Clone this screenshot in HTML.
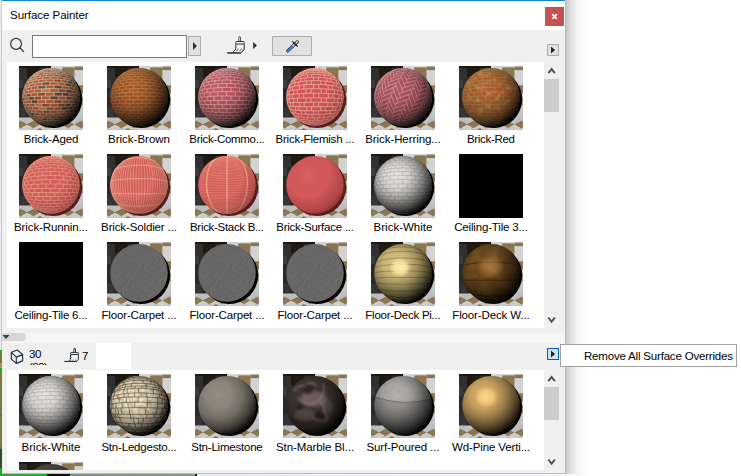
<!DOCTYPE html>
<html><head><meta charset="utf-8"><title>Surface Painter</title>
<style>
html,body{margin:0;padding:0;}
body{width:741px;height:476px;overflow:hidden;background:#fff;position:relative;font-family:"Liberation Sans",sans-serif;font-size:11.5px;color:#000;}
.abs{position:absolute;}
#win{left:0;top:0;width:565px;height:474px;background:#f0f0f0;}
#title{left:2px;top:1px;width:563px;height:29px;background:#fff;}
#topline{left:2px;top:0;width:563px;height:1px;background:#1a86d9;}
#ledge{left:0;top:0;width:2px;height:474px;background:linear-gradient(90deg,#ececec 0,#ececec 1px,#c9c9c9 1px,#c9c9c9 2px);}
.t{position:absolute;white-space:nowrap;line-height:14px;height:14px;}
.lbl{position:absolute;white-space:nowrap;line-height:14px;height:14px;text-align:center;width:120px;}
.list{background:#fff;overflow:hidden;}
.btn{background:#e1e1e1;border:1px solid #adadad;box-sizing:border-box;}
.thumb{position:absolute;width:64px;height:64px;overflow:hidden;}
</style></head>
<body>
<div id="win" class="abs"></div>
<div id="title" class="abs"></div>
<div id="topline" class="abs"></div>
<div class="abs" style="left:565px;top:0;width:30px;height:474px;background:linear-gradient(90deg,#b4b4b4 0,#cfcfcf 2px,#e2e2e2 6px,#f0f0f0 11px,#f9f9f9 17px,#fff 24px);"></div>
<div class="t" style="left:10px;top:8px;letter-spacing:-0.041px;">Surface Painter</div>
<div class="abs" style="left:545px;top:7px;width:19px;height:19px;background:#c75050;"></div>
<svg class="abs" style="left:545px;top:7px" width="19" height="19"><path d="M7.2 7.2 L11.8 11.8 M11.8 7.2 L7.2 11.8" stroke="#fff" stroke-width="1.8" fill="none"/></svg>
<svg class="abs" style="left:8px;top:36px" width="20" height="20"><circle cx="8.05" cy="7.9" r="5.45" fill="none" stroke="#2c3a44" stroke-width="1.2"/><path d="M11.9 11.8 L15.6 15.6" stroke="#2c3a44" stroke-width="1.35" stroke-linecap="round" fill="none"/></svg>
<div class="abs" style="left:32px;top:35px;width:155px;height:23px;box-sizing:border-box;border:1px solid #7a7a7a;background:#fff;"></div>
<div class="abs btn" style="left:188px;top:36px;width:13px;height:20px;"></div>
<svg class="abs" style="left:188px;top:36px" width="13" height="20"><path d="M5 6 L9 10 L5 14 Z" fill="#333"/></svg>
<svg class="abs" style="left:224px;top:33px" width="26" height="24" id="brush1"><g fill="none" stroke="#22303a" stroke-width="1" stroke-linejoin="round"><path d="M14.85 8.4V4.3Q14.85 3.6 15.65 3.6Q16.45 3.6 16.45 4.3V8.4" fill="#fff" stroke-width="0.85"/><rect x="11.8" y="8.5" width="8.4" height="2.5" rx="0.6" fill="#fff"/><path d="M11.8 11.1V16.1L9.3 18.9M20.2 11.1V16.6L16.6 20.1"/><path d="M12.6 17.7L14.6 16.1M15.6 17.7L17.6 16.1M18.4 18.2L20.2 16.8" stroke-width="0.9"/></g><path d="M3.3 19.95H16.9" stroke="#1c2a33" stroke-width="1.5"/></svg>
<svg class="abs" style="left:250px;top:38px" width="10" height="14"><path d="M3.1 3.9 L7 7.5 L3.1 11.1 Z" fill="#333"/></svg>
<div class="abs btn" style="left:272px;top:36px;width:40px;height:20px;"></div>
<svg class="abs" style="left:282px;top:36px" width="22" height="20" id="drop"><path d="M5.7 14.9L15.3 5.8" stroke="#1a1a1a" stroke-width="3.1" stroke-linecap="round"/><path d="M5.7 14.9L15.3 5.8" stroke="#ececec" stroke-width="1.5" stroke-linecap="round"/><path d="M5.7 14.9L10 10.8" stroke="#2a7cf0" stroke-width="1.9" stroke-linecap="round"/><path d="M10.3 5.3L15.6 10.5" stroke="#1a1a1a" stroke-width="1.1"/><circle cx="12.3" cy="7.3" r="1.15" fill="#1a1a1a"/></svg>
<div class="abs btn" style="left:547px;top:44px;width:12px;height:12px;"></div>
<svg class="abs" style="left:547px;top:44px" width="12" height="12"><path d="M4 2.5 L8 6 L4 9.5 Z" fill="#222"/></svg>
<div class="abs list" style="left:7px;top:62px;width:537px;height:266px;" id="list1"></div>
<div class="abs list" style="left:7px;top:370px;width:537px;height:100px;" id="list2"></div>
<svg class="abs" style="left:547px;top:66px" width="10" height="10"><path d="M1.3 7.2 L4.6 3.1 L7.9 7.2" stroke="#505050" stroke-width="1.9" fill="none"/></svg>
<svg class="abs" style="left:547px;top:316px" width="10" height="10"><path d="M1.3 1.5 L4.6 5.7 L7.9 1.5" stroke="#505050" stroke-width="1.9" fill="none"/></svg>
<div class="abs" style="left:544px;top:79px;width:15px;height:33px;background:#cdcdcd;"></div>
<svg class="abs" style="left:547px;top:374px" width="10" height="10"><path d="M1.3 7.2 L4.6 3.1 L7.9 7.2" stroke="#505050" stroke-width="1.9" fill="none"/></svg>
<svg class="abs" style="left:547px;top:458px" width="10" height="10"><path d="M1.3 1.5 L4.6 5.7 L7.9 1.5" stroke="#505050" stroke-width="1.9" fill="none"/></svg>
<div class="abs" style="left:544px;top:387px;width:15px;height:33px;background:#cdcdcd;"></div>
<div class="abs" style="left:2px;top:333px;width:563px;height:10px;background:#f5f5f5;"></div>
<div class="abs" style="left:-6px;top:333px;width:32px;height:8px;border-radius:4px;background:#d6d6d6;"></div>
<svg class="abs" style="left:2px;top:334px" width="9" height="6"><path d="M0.5 1 H7.5 L4 5 Z" fill="#3a3a3a"/></svg>
<svg class="abs" style="left:10px;top:349px" width="15" height="16" id="cube"><path d="M7.35 1L1.3 3.3V10.1L6.3 14.4L12.6 11.9V5.6ZM1.3 3.3L6.3 8.1L12.6 5.6M6.3 8.1V14.4" stroke="#22303a" stroke-width="1.15" fill="none" stroke-linejoin="round"/></svg>
<div class="abs" style="left:28px;top:343px;width:30px;height:22px;overflow:hidden;"><div class="t" style="left:1px;top:4px;letter-spacing:-0.503px;">30</div><div class="t" style="left:1px;top:17px;letter-spacing:-0.65px;">(30)</div></div>
<svg class="abs" style="left:60px;top:344px" width="22" height="22" id="brush2"><g fill="none" stroke="#22303a" stroke-width="1" stroke-linejoin="round"><path d="M13.85 8.4V5Q13.85 4.3 14.65 4.3Q15.45 4.3 15.45 5V8.4" fill="#fff"/><rect x="10.6" y="8.6" width="7.8" height="1.9" rx="0.5" fill="#fff"/><path d="M10.6 10.5V15.1L8.6 16.9M18.4 10.5V15.4L16.4 17.4"/><path d="M10.3 16.4L11 15.8M12.6 16.4L13.3 15.8M15 16.4L15.7 15.8" stroke-width="0.9"/></g><path d="M4.3 17.4H16.9" stroke="#1c2a33" stroke-width="1.1"/></svg>
<div class="t" style="left:82px;top:349px;letter-spacing:0px;">7</div>
<div class="abs" style="left:96px;top:343px;width:35px;height:26px;background:#fff;"></div>
<div class="abs" style="left:547px;top:348px;width:12px;height:12px;box-sizing:border-box;border:1px solid #0a5bb0;background:#cce4f7;"></div>
<svg class="abs" style="left:547px;top:348px" width="12" height="12"><path d="M4 2.5 L8 6 L4 9.5 Z" fill="#222"/></svg>
<div class="abs" style="left:560px;top:344px;width:177px;height:23px;box-sizing:border-box;border:1px solid #a0a0a0;background:#fff;"></div>
<div class="t" style="left:584px;top:349px;letter-spacing:-0.186px;">Remove All Surface Overrides</div>
<div class="abs" style="left:0;top:474px;width:741px;height:2px;background:linear-gradient(90deg,#3aa03a 0,#20b020 47px,#101010 47px,#101010 70px,#7f8f7f 70px,#8a978a 195px,#222 195px,#222 197px,#e8ecf2 197px,#f4f6fa 565px,#fff 600px);"></div>
<div class="abs" style="left:0;top:473px;width:565px;height:1px;background:#bdbdbd;"></div>
<div id="ledge" class="abs"></div>
<div class="abs" style="left:0;top:350px;width:2px;height:126px;background:linear-gradient(180deg,#14b414 0,#14b414 3px,#7b7a3a 3px,#7b7a3a 13px,#b88a50 13px,#b88a50 18px,#14b414 18px,#14b414 21px,#7b7a3a 21px,#7b7a3a 64px,#3a7a78 64px,#3a7a78 66px,#7b7a3a 66px,#7b7a3a 97px,#3a7a78 97px,#3a7a78 99px,#2f4f2f 99px,#2f4f2f 118px,#18b018 118px,#18b018 126px);"></div>
<svg style="position:absolute;width:0;height:0" width="0" height="0"><defs><symbol id="bg" viewBox="0 0 64 64"><rect width="64" height="64" fill="#c3c3c3"/><rect width="32" height="52" fill="#2d2d2d"/><rect y="1" width="8" height="12" fill="#303030"/><rect x="8" y="1" width="13" height="10.5" fill="#201a13"/><rect x="21" y="1" width="11" height="9" fill="#2b2b2b"/><rect y="13" width="4" height="9" fill="#3d3d3d"/><rect y="22" width="4" height="19" fill="#2a2a2a"/><rect y="41" width="7" height="11" fill="#343434"/><rect width="32" height="1.6" fill="#18130d"/><rect x="32" width="11.2" height="3.6" fill="#d3d3d3"/><rect x="43.2" width="12.4" height="1.4" fill="#dcdcdc"/><rect x="43.2" y="1.4" width="12.4" height="12" fill="#8c7651"/><rect x="55.6" y="0.8" width="8.4" height="3.5" fill="#8c7651"/><rect x="55.6" y="4.3" width="8.4" height="15" fill="#d2d2d2"/><rect x="60" y="19.3" width="4" height="8" fill="#8c7651"/><rect x="58" y="27.3" width="6" height="17" fill="#c6c6c6"/><rect x="61" y="31" width="3" height="8" fill="#a39678"/><path d="M0 51.6 L8 51.6 L64 50 V64 H0Z" fill="#bdbdbd"/><path d="M-5 58.5L1.7 54.7L8.4 58.5L1.7 62.3Z" fill="#8c7651"/><path d="M7.6 58.5L14.3 54.7L21 58.5L14.3 62.3Z" fill="#8c7651"/><path d="M20.3 58.5L27 54.7L33.7 58.5L27 62.3Z" fill="#8c7651"/><path d="M31.3 58.5L38 54.7L44.7 58.5L38 62.3Z" fill="#8c7651"/><path d="M41.9 58.5L48.6 54.7L55.3 58.5L48.6 62.3Z" fill="#8c7651"/><path d="M55.5 58.5L62.2 54.7L68.9 58.5L62.2 62.3Z" fill="#8c7651"/><path d="M1.8 62.3L8 58.8L14.2 62.3L8 65.8Z" fill="#cbcbcb"/><path d="M14.6 62.3L20.8 58.8L27 62.3L20.8 65.8Z" fill="#cbcbcb"/><path d="M14.1 65.9L20.8 62.1L27.5 65.9L20.8 69.7Z" fill="#8c7651"/><path d="M26.8 62.3L33 58.8L39.2 62.3L33 65.8Z" fill="#cbcbcb"/><path d="M36.8 62.3L43 58.8L49.2 62.3L43 65.8Z" fill="#cbcbcb"/><path d="M49.2 62.3L55.4 58.8L61.6 62.3L55.4 65.8Z" fill="#cbcbcb"/></symbol><clipPath id="sc"><circle cx="32.0" cy="30.9" r="28.8"/></clipPath><radialGradient id="sh1" cx="0.36" cy="0.33" r="0.74"><stop offset="0" stop-color="#fff" stop-opacity="0.08"/><stop offset="0.3" stop-color="#000" stop-opacity="0.02"/><stop offset="0.55" stop-color="#000" stop-opacity="0.2"/><stop offset="0.78" stop-color="#000" stop-opacity="0.52"/><stop offset="0.93" stop-color="#000" stop-opacity="0.85"/><stop offset="1" stop-color="#000" stop-opacity="0.95"/></radialGradient><radialGradient id="sh3" cx="0.38" cy="0.34" r="0.74"><stop offset="0" stop-color="#000" stop-opacity="0"/><stop offset="0.3" stop-color="#000" stop-opacity="0.08"/><stop offset="0.52" stop-color="#000" stop-opacity="0.3"/><stop offset="0.75" stop-color="#000" stop-opacity="0.62"/><stop offset="0.92" stop-color="#000" stop-opacity="0.9"/><stop offset="1" stop-color="#000" stop-opacity="0.96"/></radialGradient><radialGradient id="sh2" cx="0.38" cy="0.34" r="0.74"><stop offset="0" stop-color="#fff" stop-opacity="0.06"/><stop offset="0.5" stop-color="#000" stop-opacity="0"/><stop offset="0.8" stop-color="#300" stop-opacity="0.2"/><stop offset="1" stop-color="#300" stop-opacity="0.5"/></radialGradient><radialGradient id="hl" cx="0.5" cy="0.5" r="0.5"><stop offset="0" stop-color="#fff" stop-opacity="0.55"/><stop offset="0.5" stop-color="#fff" stop-opacity="0.25"/><stop offset="1" stop-color="#fff" stop-opacity="0"/></radialGradient><radialGradient id="hlw" cx="0.5" cy="0.5" r="0.5"><stop offset="0" stop-color="#c88a44" stop-opacity="0.7"/><stop offset="0.55" stop-color="#c88a44" stop-opacity="0.4"/><stop offset="1" stop-color="#c88a44" stop-opacity="0"/></radialGradient><radialGradient id="hlp" cx="0.5" cy="0.5" r="0.5"><stop offset="0" stop-color="#ffd48c" stop-opacity="0.95"/><stop offset="0.55" stop-color="#ffd48c" stop-opacity="0.7"/><stop offset="1" stop-color="#ffd48c" stop-opacity="0"/></radialGradient><radialGradient id="hly" cx="0.5" cy="0.5" r="0.5"><stop offset="0" stop-color="#fdf0ac" stop-opacity="1"/><stop offset="0.55" stop-color="#fdf0ac" stop-opacity="0.75"/><stop offset="1" stop-color="#fdf0ac" stop-opacity="0"/></radialGradient><filter id="b3" x="-5%" y="-5%" width="110%" height="110%"><feGaussianBlur stdDeviation="0.35"/></filter><filter id="b18" x="-10%" y="-10%" width="120%" height="120%"><feGaussianBlur stdDeviation="1.8"/></filter><filter id="b8" x="-10%" y="-10%" width="120%" height="120%"><feGaussianBlur stdDeviation="0.8"/></filter><filter id="b6" x="-5%" y="-5%" width="110%" height="110%"><feGaussianBlur stdDeviation="0.6"/></filter><filter id="nz" x="0" y="0" width="100%" height="100%"><feTurbulence type="fractalNoise" baseFrequency="0.9" numOctaves="2" seed="3"/><feColorMatrix values="0 0 0 0 0  0 0 0 0 0  0 0 0 0 0  0.9 0 0 0 -0.3"/></filter><path id="rb" d="M32 59.7M24.7 58.8M29.6 59.6L29.3 59.5M34.2 59.6L34.5 59.5M39.1 58.8M24.7 58.8L25.6 59L26.5 59.1L27.5 59.3L28.6 59.4L29.7 59.5L30.9 59.5L32 59.6L33.1 59.5L34.3 59.5L35.4 59.4L36.5 59.3L37.5 59.1L38.4 59L39.3 58.8M20.7 57.4M26.8 59.2L26.1 58.9L25.4 58.6M31.9 59.6L31.9 59.4L31.9 59.1M37 59.2L37.6 59L38.3 58.6M43.1 57.5M21 57.5L21.8 57.8L22.8 58.1L23.9 58.3L25.1 58.5L26.3 58.7L27.7 58.9L29.1 59L30.5 59L32 59.1L33.5 59L34.9 59L36.3 58.9L37.7 58.7L38.9 58.5L40.1 58.3L41.2 58.1L42.2 57.8L43 57.5M22.8 58.1L21.8 57.6L20.9 57M28.5 58.9L28.1 58.5L27.8 58M35.2 59L35.5 58.5L35.9 58M41 58.1L41.9 57.6L42.9 57M17.2 55.6L17.9 56L18.7 56.3L19.7 56.7L20.9 57L22.2 57.3L23.6 57.5L25.1 57.7L26.7 57.9L28.5 58L30.2 58.1L32 58.1L33.8 58.1L35.5 58L37.3 57.9L38.9 57.7L40.4 57.5L41.8 57.3L43.1 57L44.3 56.7L45.3 56.3L46.1 56L46.8 55.6M17.6 55.8L16.4 55.1L15.3 54.3M19.6 56.6L18.5 55.9L17.5 55.1M22.4 57.3L21.5 56.6L20.7 55.9M25.8 57.8L25.3 57.2L24.7 56.4M29.8 58.1L29.6 57.5L29.4 56.7M33.9 58.1L34 57.5L34.2 56.7M37.8 57.9L38.4 57.2L38.9 56.4M41.4 57.4L42.2 56.7L43 55.9M44.2 56.7L45.2 56L46.3 55.2M46.3 55.9L47.4 55.2L48.6 54.3M14.9 54L15.6 54.4L16.6 54.8L17.7 55.2L19 55.5L20.4 55.8L22.1 56.1L23.9 56.3L25.8 56.5L27.8 56.6L29.9 56.7L32 56.8L34.1 56.7L36.2 56.6L38.2 56.5L40.1 56.3L41.9 56.1L43.6 55.8L45 55.5L46.3 55.2L47.4 54.8L48.4 54.4L49.1 54M14.5 53.8L13.4 52.9L12.3 51.9M16.3 54.7L15.2 53.8L14.1 52.8M19 55.5L18 54.6L17.1 53.6M22.6 56.2L21.9 55.3L21.2 54.3M27 56.6L26.6 55.7L26.2 54.7M31.8 56.8L31.8 55.9L31.8 54.9M36.6 56.6L37 55.8L37.3 54.8M41 56.2L41.7 55.3L42.4 54.3M44.8 55.6L45.7 54.7L46.6 53.7M47.5 54.8L48.6 53.9L49.7 52.9M49.3 53.9L50.5 53L51.6 52M12.1 51.7L12.7 52.1L13.5 52.5L14.5 52.9L15.7 53.3L17.1 53.6L18.8 53.9L20.6 54.2L22.7 54.4L24.9 54.6L27.2 54.8L29.6 54.9L32 54.9L34.4 54.9L36.8 54.8L39.1 54.6L41.3 54.4L43.4 54.2L45.2 53.9L46.9 53.6L48.3 53.3L49.5 52.9L50.5 52.5L51.3 52.1L51.9 51.7M9.8 49.3M13.1 52.3L12 51.3L11 50.1M15.5 53.2L14.5 52.1L13.6 50.9M19 54L18.2 52.9L17.5 51.6M23.6 54.5L23.1 53.4L22.6 52.2M29 54.9L28.8 53.7L28.6 52.5M34.6 54.9L34.7 53.8L34.9 52.5M39.9 54.6L40.4 53.5L40.9 52.2M44.6 54L45.4 52.9L46.1 51.7M48.3 53.3L49.2 52.2L50.1 51M50.8 52.4L51.8 51.3L52.8 50.2M53.1 50.5L54.1 49.3M10.1 49.5L10.6 49.9L11.4 50.3L12.5 50.6L13.8 51L15.4 51.3L17.2 51.6L19.2 51.9L21.5 52.1L23.9 52.3L26.5 52.4L29.2 52.5L32 52.5L34.8 52.5L37.5 52.4L40.1 52.3L42.5 52.1L44.8 51.9L46.8 51.6L48.6 51.3L50.2 51L51.5 50.6L52.6 50.3L53.4 49.9L53.9 49.5M10.3 49.7L9.3 48.5L8.4 47.2M12.1 50.5L11.2 49.2L10.3 47.9M15.4 51.3L14.5 50L13.7 48.6M19.9 51.9L19.2 50.6L18.6 49.2M25.5 52.4L25.1 51L24.8 49.5M31.7 52.5L31.7 51.2L31.7 49.7M38 52.4L38.3 51L38.6 49.6M43.7 52L44.3 50.6L44.9 49.2M48.3 51.4L49.1 50L49.9 48.6M51.6 50.6L52.6 49.3L53.4 48M53.6 49.7L54.6 48.5L55.5 47.2M7.9 46.7L8.2 47L8.8 47.4L9.6 47.7L10.7 48L12.1 48.3L13.7 48.6L15.7 48.9L17.9 49.1L20.4 49.3L23.1 49.5L26 49.6L29 49.7L32 49.7L35 49.7L38 49.6L40.9 49.5L43.6 49.3L46.1 49.1L48.3 48.9L50.3 48.6L51.9 48.3L53.3 48L54.4 47.7L55.2 47.4L55.8 47L56.1 46.7M8 46.8L7.2 45.5L6.4 44.1M9.2 47.5L8.4 46.2L7.6 44.7M11.8 48.2L11 46.8L10.3 45.3M16 48.9L15.3 47.4L14.7 45.7M21.6 49.4L21.1 47.8L20.7 46.1M28.2 49.7L28 48.1L27.9 46.4M35.2 49.7L35.3 48.1L35.5 46.4M41.9 49.4L42.3 47.8L42.7 46.2M47.6 48.9L48.2 47.4L48.8 45.8M51.9 48.3L52.6 46.8L53.4 45.3M54.6 47.6L55.5 46.2L56.2 44.7M55.9 46.9L56.8 45.6L57.5 44.2M6.4 44.1L6.7 44.3L7.2 44.6L8 44.8L9.1 45L10.5 45.3L12.3 45.5L14.4 45.7L16.8 45.9L19.4 46.1L22.3 46.2L25.4 46.3L28.7 46.4L32 46.4L35.3 46.4L38.6 46.3L41.7 46.2L44.6 46.1L47.2 45.9L49.6 45.7L51.7 45.5L53.5 45.3L54.9 45L56 44.8L56.8 44.6L57.3 44.3L57.6 44.1M6.8 44.4L6.1 43L5.5 41.5M8.7 45L8.1 43.4L7.4 41.8M12.3 45.5L11.7 43.9L11.1 42.1M17.5 46L17.1 44.2L16.6 42.4M24.2 46.3L23.9 44.5L23.7 42.6M31.7 46.4L31.7 44.6L31.6 42.7M39.2 46.3L39.4 44.5L39.7 42.6M45.9 46L46.4 44.2L46.8 42.4M51.3 45.6L51.9 43.9L52.5 42.1M55 45L55.7 43.5L56.3 41.8M57.1 44.5L57.8 43L58.4 41.5M5.1 41.3L5.4 41.4L5.9 41.5L6.7 41.7L7.8 41.8L9.3 42L11.1 42.1L13.3 42.3L15.8 42.4L18.6 42.5L21.7 42.5L25 42.6L28.5 42.6L32 42.7L35.5 42.6L39 42.6L42.3 42.5L45.4 42.5L48.2 42.4L50.7 42.3L52.9 42.1L54.7 42L56.2 41.8L57.3 41.7L58.1 41.5L58.6 41.4L58.9 41.3M5.2 41.3L4.6 39.8L4.2 38.3M6.3 41.6L5.7 40L5.3 38.4M9 42L8.5 40.2L8.1 38.5M13.6 42.3L13.2 40.4L12.8 38.5M20 42.5L19.7 40.6L19.4 38.6M27.6 42.6L27.5 40.7L27.4 38.6M35.7 42.6L35.8 40.7L35.9 38.6M43.4 42.5L43.7 40.6L44 38.6M49.9 42.3L50.3 40.4L50.7 38.5M54.6 42L55.2 40.3L55.6 38.5M57.6 41.7L58.1 40L58.6 38.4M58.8 41.3L59.3 39.8L59.8 38.3M4.2 38.3L4.4 38.3L4.9 38.4L5.7 38.4L6.8 38.4L8.3 38.5L10.2 38.5L12.4 38.5L15 38.5L18 38.6L21.2 38.6L24.7 38.6L28.3 38.6L32 38.6L35.7 38.6L39.3 38.6L42.8 38.6L46 38.6L49 38.5L51.6 38.5L53.8 38.5L55.7 38.5L57.2 38.4L58.3 38.4L59.1 38.4L59.6 38.3L59.8 38.3M4.5 38.3L4.2 36.7L3.9 35.1M6.4 38.4L6 36.7L5.8 34.9M10.2 38.5L9.8 36.6L9.6 34.7M15.9 38.6L15.6 36.5L15.4 34.5M23.3 38.6L23.1 36.5L23 34.4M31.6 38.6L31.6 36.5L31.6 34.3M40 38.6L40.2 36.5L40.3 34.4M47.5 38.6L47.8 36.5L48 34.5M53.4 38.5L53.7 36.6L54 34.7M57.3 38.4L57.7 36.7L58 34.9M59.4 38.3L59.8 36.7L60 35.1M3.5 35.2L3.7 35.2L4.2 35.1L5 35L6.1 34.9L7.7 34.8L9.6 34.7L11.9 34.6L14.5 34.5L17.5 34.5L20.9 34.4L24.4 34.4L28.2 34.3L32 34.3L35.8 34.3L39.6 34.4L43.1 34.4L46.5 34.5L49.5 34.5L52.1 34.6L54.4 34.7L56.3 34.8L57.9 34.9L59 35L59.8 35.1L60.3 35.2L60.5 35.2M3.6 35.2L3.4 33.7L3.2 32.1M4.6 35L4.4 33.3L4.3 31.6M7.4 34.8L7.2 32.9L7.1 31.1M12.2 34.6L12.1 32.6L12 30.6M19 34.4L18.9 32.3L18.8 30.2M27.2 34.3L27.2 32.2L27.2 30M36 34.3L36.1 32.2L36.1 30M44.3 34.4L44.4 32.3L44.5 30.2M51.3 34.6L51.4 32.6L51.5 30.5M56.3 34.8L56.5 32.9L56.6 31M59.2 35L59.5 33.3L59.6 31.5M60.4 35.2L60.6 33.6L60.7 32.1M3.2 32.1L3.4 31.9L3.9 31.7L4.7 31.5L5.8 31.3L7.3 31L9.3 30.8L11.6 30.6L14.3 30.4L17.3 30.3L20.7 30.1L24.3 30L28.1 30L32 30L35.9 30L39.7 30L43.3 30.1L46.7 30.3L49.7 30.4L52.4 30.6L54.7 30.8L56.7 31L58.2 31.3L59.3 31.5L60.1 31.7L60.6 31.9L60.8 32.1M3.5 31.8L3.5 30.2L3.6 28.6M5.4 31.3L5.4 29.5L5.5 27.8M9.3 30.8L9.2 28.9L9.3 27M15.2 30.4L15.1 28.3L15.2 26.3M22.8 30.1L22.8 27.9L22.9 25.8M31.6 30L31.6 27.8L31.6 25.6M40.4 30.1L40.4 27.9L40.4 25.8M48.2 30.3L48.3 28.3L48.2 26.2M54.3 30.8L54.3 28.8L54.3 26.9M58.3 31.3L58.4 29.5L58.3 27.7M60.4 31.8L60.4 30.1L60.3 28.5M3.3 29.1L3.4 28.7L3.9 28.4L4.7 28L5.8 27.7L7.4 27.3L9.3 27L11.6 26.6L14.3 26.4L17.4 26.1L20.7 25.9L24.3 25.7L28.1 25.6L32 25.6L35.9 25.6L39.7 25.7L43.3 25.9L46.6 26.1L49.7 26.4L52.4 26.6L54.7 27L56.6 27.3L58.2 27.7L59.3 28L60.1 28.4L60.6 28.7L60.7 29.1M3.3 29L3.4 27.4L3.6 25.9M4.3 28.2L4.4 26.5L4.7 24.8M7.1 27.4L7.3 25.5L7.5 23.7M12 26.6L12.1 24.6L12.3 22.7M18.8 26L18.9 23.9L19.1 21.9M27.2 25.7L27.2 23.5L27.2 21.5M36.1 25.6L36 23.5L36 21.5M44.5 26L44.4 23.9L44.3 21.9M51.5 26.5L51.4 24.6L51.2 22.6M56.5 27.3L56.4 25.4L56.2 23.6M59.5 28.1L59.4 26.4L59.2 24.7M60.7 28.9L60.6 27.4L60.3 25.8M3.8 25.6L4.3 25.1L5.1 24.6L6.2 24.1L7.7 23.7L9.6 23.2L11.9 22.8L14.6 22.4L17.6 22.1L20.9 21.8L24.5 21.6L28.2 21.5L32 21.4L35.8 21.5L39.5 21.6L43.1 21.8L46.4 22.1L49.4 22.4L52.1 22.8L54.4 23.2L56.3 23.7L57.8 24.1L58.9 24.6L59.7 25.1L60.2 25.6M4 25.4L4.3 23.8L4.7 22.3M5.8 24.3L6.2 22.6L6.6 21M9.6 23.2L9.9 21.4L10.3 19.7M15.5 22.3L15.7 20.4L16 18.6M23 21.7L23.1 19.7L23.3 17.8M31.6 21.4L31.6 19.4L31.6 17.5M40.3 21.6L40.1 19.6L40 17.7M47.9 22.2L47.7 20.3L47.4 18.5M53.9 23.1L53.6 21.3L53.3 19.6M57.9 24.2L57.6 22.5L57.2 20.8M60 25.3L59.6 23.7L59.2 22.2M4.5 22.5L5 22L5.8 21.4L6.9 20.8L8.4 20.2L10.3 19.7L12.5 19.2L15.1 18.7L18.1 18.3L21.3 17.9L24.7 17.7L28.3 17.6L32 17.5L35.7 17.6L39.3 17.7L42.7 17.9L45.9 18.3L48.9 18.7L51.5 19.2L53.7 19.7L55.6 20.2L57.1 20.8L58.2 21.4L59 22L59.5 22.5M4.3 22.9M5.4 21.6L5.9 20.1L6.4 18.6M8.2 20.3L8.7 18.7L9.2 17.1M12.9 19.1L13.3 17.4L13.8 15.7M19.5 18.1L19.7 16.3L20.1 14.6M27.4 17.6L27.5 15.8L27.6 14M35.9 17.6L35.8 15.7L35.7 14M43.9 18.1L43.6 16.3L43.3 14.6M50.6 19L50.2 17.3L49.8 15.6M55.5 20.2L55 18.5L54.5 17M58.4 21.5L58 20L57.4 18.5M59.6 22.8L59.2 21.4M5.5 19.6L6 19L6.8 18.3L8 17.7L9.4 17L11.2 16.4L13.4 15.8L15.9 15.3L18.7 14.8L21.8 14.4L25.1 14.2L28.5 14L32 13.9L35.5 14L38.9 14.2L42.2 14.4L45.3 14.8L48.1 15.3L50.6 15.8L52.8 16.4L54.6 17L56 17.7L57.2 18.3L58 19L58.5 19.6M5.7 19.4L6.3 18L7 16.7M7.6 17.9L8.2 16.4L8.9 15M11.2 16.4L11.8 14.9L12.4 13.4M16.7 15.1L17.2 13.6L17.6 12.1M23.7 14.3L24 12.7L24.2 11.2M31.6 13.9L31.7 12.3L31.7 10.8M39.6 14.2L39.4 12.6L39.1 11.1M46.7 15L46.3 13.5L45.8 12M52.4 16.3L51.8 14.7L51.2 13.3M56.2 17.7L55.6 16.3L54.9 14.9M58.2 19.3L57.6 17.9L56.9 16.5M6.8 17L7.3 16.3L8.1 15.5L9.2 14.8L10.7 14.1L12.4 13.4L14.5 12.8L16.9 12.2L19.5 11.8L22.4 11.4L25.5 11.1L28.7 10.9L32 10.8L35.3 10.9L38.5 11.1L41.6 11.4L44.5 11.8L47.1 12.2L49.5 12.8L51.6 13.4L53.3 14.1L54.8 14.8L55.9 15.5L56.7 16.3L57.2 17M7.7 15.9L8.5 14.6L9.3 13.4M10.4 14.2L11.2 12.9L11.9 11.6M14.8 12.7L15.4 11.4L16.1 10.1M20.8 11.6L21.2 10.2L21.6 8.9M27.9 10.9L28.1 9.5L28.2 8.3M35.5 10.9L35.3 9.5L35.2 8.3M42.6 11.5L42.2 10.1L41.8 8.9M48.7 12.6L48.1 11.2L47.5 10M53.2 14.1L52.5 12.7L51.8 11.5M56.1 15.7L55.3 14.4L54.5 13.2M8.9 13.8L9.7 13L10.8 12.3L12.1 11.5L13.8 10.8L15.8 10.2L18 9.6L20.5 9.1L23.1 8.7L26 8.4L29 8.2L32 8.2L35 8.2L38 8.4L40.9 8.7L43.5 9.1L46 9.6L48.2 10.2L50.2 10.8L51.9 11.5L53.2 12.3L54.3 13L55.1 13.8M8.5 14.2M10.4 12.5L11.3 11.3L12.1 10.3M13.8 10.8L14.6 9.7L15.4 8.7M18.7 9.5L19.3 8.3L19.9 7.3M24.8 8.5L25.2 7.4L25.5 6.4M31.7 8.2L31.7 7.1L31.7 6M38.6 8.5L38.3 7.3L38 6.3M44.8 9.4L44.2 8.2L43.7 7.2M49.8 10.7L49.1 9.6L48.3 8.5M53.3 12.3L52.5 11.2L51.6 10.1M55.4 14.1M10.6 11.6L11.4 10.8L12.5 10.1L13.8 9.3L15.4 8.7L17.2 8L19.2 7.5L21.5 7L23.9 6.6L26.5 6.3L29.2 6.1L32 6L34.8 6.1L37.5 6.3L40.1 6.6L42.5 7L44.8 7.5L46.8 8L48.6 8.7L50.2 9.3L51.5 10.1L52.6 10.8L53.4 11.6M11 11.2L12 10.2M13.6 9.5L14.5 8.5L15.4 7.6M17.5 7.9L18.2 7L19 6.2M22.6 6.8L23.1 5.9L23.6 5.1M28.6 6.1L28.7 5.3L28.9 4.5M34.9 6.1L34.7 5.2L34.6 4.5M40.9 6.7L40.5 5.8L40 5M46.1 7.8L45.4 6.9L44.7 6.1M50.1 9.3L49.3 8.4L48.4 7.5M52.8 11L51.8 10L50.9 9.1M13.4 9L14.4 8.2L15.6 7.5L17 6.9L18.7 6.3L20.6 5.7L22.6 5.3L24.8 4.9L27.1 4.6L29.5 4.5L32 4.4L34.5 4.5L36.9 4.6L39.2 4.9L41.4 5.3L43.4 5.7L45.3 6.3L47 6.9L48.4 7.5L49.6 8.2L50.6 9M14 8.4L15 7.6M17 6.9L17.9 6.1L18.8 5.5M21.1 5.6L21.8 4.9L22.5 4.3M26.2 4.7L26.5 4.1L26.9 3.5M31.8 4.4L31.8 3.8L31.8 3.2M37.3 4.7L37 4L36.7 3.5M42.4 5.5L41.8 4.8L41.2 4.2M46.7 6.7L45.8 6L45 5.4M49.8 8.3L48.8 7.5L47.8 6.8M16.3 6.7L17.4 6.1L18.8 5.5L20.3 4.9L21.9 4.4L23.7 4L25.7 3.7L27.7 3.4L29.8 3.3L32 3.2L34.2 3.3L36.3 3.4L38.3 3.7L40.3 4L42.1 4.4L43.7 4.9L45.2 5.5L46.6 6.1L47.7 6.7M17.3 6.2L18.2 5.6M20.5 4.8L21.3 4.3L22.1 3.9M24.6 3.8L25.1 3.4L25.6 3M29.3 3.3L29.5 2.9L29.7 2.5M34.3 3.3L34.1 2.8L33.9 2.5M39 3.8L38.5 3.3L38 3M43.2 4.7L42.4 4.2L41.6 3.8M46.5 6.1L45.5 5.5M20.5 4.5L21.9 4L23.3 3.5L24.9 3.2L26.6 2.9L28.3 2.7L30.2 2.5L32 2.5L33.8 2.5L35.7 2.7L37.4 2.9L39.1 3.2L40.7 3.5L42.1 4L43.5 4.5M20.5 4.5M27.6 2.7L28 2.5L28.3 2.4M36 2.7L35.7 2.5L35.4 2.3M43.2 4.4M26 2.7L27.5 2.5L28.9 2.3L30.5 2.2L32 2.1L33.5 2.2L35.1 2.3L36.5 2.5L38 2.7M25.1 2.9M31.8 2.1L31.9 2.1M38.6 2.9"/><path id="sb" d="M28.3 59.5L29.2 59.6L30.1 59.6L31 59.7L32 59.7L33 59.7L33.9 59.6L34.8 59.6L35.7 59.5M26 59.1L26.9 59.2L27.8 59.4L28.8 59.5L29.9 59.6L30.9 59.6L32 59.6L33.1 59.6L34.1 59.6L35.2 59.5L36.2 59.4L37.1 59.2L38 59.1M23.6 58.4L24.4 58.7L25.3 58.9L26.3 59.1L27.3 59.2L28.5 59.3L29.6 59.4L30.8 59.5L32 59.5L33.2 59.5L34.4 59.4L35.5 59.3L36.7 59.2L37.7 59.1L38.7 58.9L39.6 58.7L40.4 58.4M21.9 57.9L22.7 58.2L23.6 58.4L24.6 58.6L25.7 58.8L26.9 59L28.1 59.1L29.4 59.2L30.7 59.3L32 59.3L33.3 59.3L34.6 59.2L35.9 59.1L37.1 59L38.3 58.8L39.4 58.6L40.4 58.4L41.3 58.2L42.1 57.9M21 57.5L21.9 57.8L22.9 58.1L23.9 58.3L25.1 58.6L26.4 58.7L27.7 58.9L29.1 59L30.5 59.1L32 59.1L33.5 59.1L34.9 59L36.3 58.9L37.6 58.7L38.9 58.6L40.1 58.3L41.1 58.1L42.1 57.8L43 57.5M19.4 56.8L20.1 57.1L21 57.4L22.1 57.7L23.2 58L24.5 58.2L25.9 58.4L27.3 58.6L28.9 58.7L30.4 58.7L32 58.8L33.6 58.7L35.1 58.7L36.7 58.6L38.1 58.4L39.5 58.2L40.8 58L41.9 57.7L43 57.4L43.9 57.1L44.6 56.8M18.4 56.3L19.2 56.6L20.2 57L21.3 57.3L22.5 57.5L23.9 57.8L25.4 58L27 58.2L28.6 58.3L30.3 58.4L32 58.4L33.7 58.4L35.4 58.3L37 58.2L38.6 58L40.1 57.8L41.5 57.5L42.7 57.3L43.8 57L44.8 56.6L45.6 56.3M16.8 55.4L17.5 55.7L18.3 56.1L19.4 56.4L20.5 56.7L21.8 57L23.3 57.3L24.9 57.5L26.6 57.7L28.3 57.8L30.2 57.9L32 57.9L33.8 57.9L35.7 57.8L37.4 57.7L39.1 57.5L40.7 57.3L42.2 57L43.5 56.7L44.6 56.4L45.7 56.1L46.5 55.7L47.2 55.4M15.9 54.7L16.6 55.1L17.5 55.5L18.5 55.8L19.8 56.2L21.2 56.5L22.7 56.7L24.4 57L26.2 57.1L28.1 57.3L30 57.4L32 57.4L34 57.4L35.9 57.3L37.8 57.1L39.6 57L41.3 56.7L42.8 56.5L44.2 56.2L45.5 55.8L46.5 55.5L47.4 55.1L48.1 54.7M14.9 54.1L15.7 54.4L16.6 54.8L17.7 55.2L19 55.5L20.5 55.8L22.1 56.1L23.9 56.3L25.8 56.5L27.8 56.7L29.9 56.7L32 56.8L34.1 56.7L36.2 56.7L38.2 56.5L40.1 56.3L41.9 56.1L43.5 55.8L45 55.5L46.3 55.2L47.4 54.8L48.3 54.4L49.1 54.1M13.5 52.9L14 53.3L14.8 53.7L15.7 54.1L16.9 54.5L18.2 54.8L19.8 55.1L21.5 55.4L23.4 55.6L25.4 55.8L27.6 56L29.8 56.1L32 56.1L34.2 56.1L36.4 56L38.6 55.8L40.6 55.6L42.5 55.4L44.2 55.1L45.8 54.8L47.1 54.5L48.3 54.1L49.2 53.7L50 53.3L50.5 52.9M12.6 52.2L13.1 52.5L13.9 52.9L14.9 53.3L16.1 53.7L17.5 54L19.1 54.3L20.9 54.6L22.9 54.9L25 55.1L27.3 55.2L29.6 55.3L32 55.3L34.4 55.3L36.7 55.2L39 55.1L41.1 54.9L43.1 54.6L44.9 54.3L46.5 54L47.9 53.7L49.1 53.3L50.1 52.9L50.9 52.5L51.4 52.2M11.7 51.3L12.3 51.7L13 52.1L14 52.5L15.3 52.8L16.8 53.2L18.4 53.5L20.3 53.8L22.4 54L24.7 54.2L27 54.4L29.5 54.4L32 54.5L34.5 54.4L37 54.4L39.3 54.2L41.6 54L43.7 53.8L45.6 53.5L47.2 53.2L48.7 52.8L50 52.5L51 52.1L51.7 51.7L52.3 51.3M10.9 50.4L11.4 50.8L12.2 51.2L13.2 51.6L14.5 51.9L16 52.3L17.8 52.6L19.8 52.8L21.9 53.1L24.3 53.3L26.8 53.4L29.4 53.5L32 53.5L34.6 53.5L37.2 53.4L39.7 53.3L42.1 53.1L44.2 52.8L46.2 52.6L48 52.3L49.5 51.9L50.8 51.6L51.8 51.2L52.6 50.8L53.1 50.4M10.1 49.5L10.6 49.9L11.4 50.2L12.5 50.6L13.8 50.9L15.3 51.3L17.2 51.6L19.2 51.8L21.5 52.1L23.9 52.3L26.5 52.4L29.2 52.5L32 52.5L34.8 52.5L37.5 52.4L40.1 52.3L42.5 52.1L44.8 51.8L46.8 51.6L48.7 51.3L50.2 50.9L51.5 50.6L52.6 50.2L53.4 49.9L53.9 49.5M9.3 48.5L9.8 48.9L10.7 49.2L11.7 49.6L13.1 49.9L14.7 50.2L16.5 50.5L18.7 50.8L21 51L23.6 51.2L26.3 51.3L29.1 51.4L32 51.4L34.9 51.4L37.7 51.3L40.4 51.2L43 51L45.3 50.8L47.5 50.5L49.3 50.2L50.9 49.9L52.3 49.6L53.3 49.2L54.2 48.9L54.7 48.5M8.3 47.2L8.6 47.5L9.1 47.9L9.9 48.2L11 48.5L12.4 48.8L14 49.1L16 49.4L18.2 49.6L20.6 49.9L23.3 50L26.1 50.2L29 50.2L32 50.3L35 50.2L37.9 50.2L40.7 50L43.4 49.9L45.8 49.6L48 49.4L50 49.1L51.6 48.8L53 48.5L54.1 48.2L54.9 47.9L55.4 47.5L55.7 47.2M7.6 46.2L7.9 46.5L8.4 46.8L9.2 47.1L10.3 47.4L11.7 47.7L13.4 47.9L15.4 48.2L17.7 48.4L20.2 48.6L22.9 48.8L25.8 48.9L28.9 49L32 49L35.1 49L38.2 48.9L41.1 48.8L43.8 48.6L46.3 48.4L48.6 48.2L50.6 47.9L52.3 47.7L53.7 47.4L54.8 47.1L55.6 46.8L56.1 46.5L56.4 46.2M7 45.1L7.2 45.4L7.8 45.7L8.6 45.9L9.7 46.2L11.1 46.5L12.8 46.7L14.9 46.9L17.2 47.2L19.8 47.3L22.6 47.5L25.6 47.6L28.8 47.7L32 47.7L35.2 47.7L38.4 47.6L41.4 47.5L44.2 47.3L46.8 47.2L49.1 46.9L51.2 46.7L52.9 46.5L54.3 46.2L55.4 45.9L56.2 45.7L56.8 45.4L57 45.1M6.4 44L6.6 44.3L7.1 44.5L8 44.7L9.1 45L10.5 45.2L12.3 45.4L14.4 45.6L16.7 45.8L19.4 46L22.3 46.1L25.4 46.2L28.7 46.3L32 46.3L35.3 46.3L38.6 46.2L41.7 46.1L44.6 46L47.3 45.8L49.6 45.6L51.7 45.4L53.5 45.2L54.9 45L56 44.7L56.9 44.5L57.4 44.3L57.6 44M5.8 42.9L6.1 43.1L6.6 43.3L7.4 43.5L8.5 43.7L10 43.9L11.8 44.1L13.9 44.3L16.3 44.4L19.1 44.6L22.1 44.7L25.2 44.8L28.6 44.8L32 44.8L35.4 44.8L38.8 44.8L41.9 44.7L44.9 44.6L47.7 44.4L50.1 44.3L52.2 44.1L54 43.9L55.5 43.7L56.6 43.5L57.4 43.3L57.9 43.1L58.2 42.9M5.3 41.7L5.6 41.9L6.1 42.1L6.9 42.2L8 42.4L9.5 42.6L11.3 42.7L13.5 42.9L15.9 43L18.7 43.1L21.8 43.2L25.1 43.3L28.5 43.3L32 43.3L35.5 43.3L38.9 43.3L42.2 43.2L45.3 43.1L48.1 43L50.5 42.9L52.7 42.7L54.5 42.6L56 42.4L57.1 42.2L57.9 42.1L58.4 41.9L58.7 41.7M4.9 40.6L5.1 40.7L5.6 40.8L6.4 40.9L7.5 41.1L9 41.2L10.9 41.3L13.1 41.4L15.6 41.5L18.4 41.6L21.6 41.6L24.9 41.7L28.4 41.7L32 41.7L35.6 41.7L39.1 41.7L42.4 41.6L45.6 41.6L48.4 41.5L50.9 41.4L53.1 41.3L55 41.2L56.5 41.1L57.6 40.9L58.4 40.8L58.9 40.7L59.1 40.6M4.5 39.4L4.7 39.5L5.2 39.5L6 39.6L7.1 39.7L8.6 39.8L10.5 39.8L12.7 39.9L15.3 40L18.2 40L21.4 40L24.8 40.1L28.3 40.1L32 40.1L35.7 40.1L39.2 40.1L42.6 40L45.8 40L48.7 40L51.3 39.9L53.5 39.8L55.4 39.8L56.9 39.7L58 39.6L58.8 39.5L59.3 39.5L59.5 39.4M4.1 38.2L4.3 38.2L4.8 38.2L5.6 38.3L6.8 38.3L8.3 38.3L10.2 38.3L12.4 38.4L15 38.4L18 38.4L21.2 38.4L24.7 38.4L28.3 38.4L32 38.4L35.7 38.4L39.3 38.4L42.8 38.4L46 38.4L49 38.4L51.6 38.4L53.8 38.3L55.7 38.3L57.2 38.3L58.4 38.3L59.2 38.2L59.7 38.2L59.9 38.2M3.8 36.9L4 36.9L4.5 36.9L5.3 36.9L6.5 36.9L8 36.8L9.9 36.8L12.1 36.8L14.8 36.8L17.8 36.8L21 36.7L24.5 36.7L28.2 36.7L32 36.7L35.8 36.7L39.5 36.7L43 36.7L46.2 36.8L49.2 36.8L51.9 36.8L54.1 36.8L56 36.8L57.5 36.9L58.7 36.9L59.5 36.9L60 36.9L60.2 36.9M3.6 35.7L3.8 35.6L4.3 35.6L5.1 35.5L6.2 35.4L7.7 35.3L9.6 35.3L11.9 35.2L14.6 35.1L17.6 35.1L20.9 35L24.5 35L28.2 35L32 35L35.8 35L39.5 35L43.1 35L46.4 35.1L49.4 35.1L52.1 35.2L54.4 35.3L56.3 35.3L57.8 35.4L58.9 35.5L59.7 35.6L60.2 35.6L60.4 35.7M3.4 34.5L3.6 34.3L4.1 34.2L4.9 34.1L6 34L7.5 33.8L9.5 33.7L11.8 33.6L14.4 33.5L17.5 33.4L20.8 33.3L24.4 33.3L28.2 33.2L32 33.2L35.8 33.2L39.6 33.3L43.2 33.3L46.5 33.4L49.6 33.5L52.2 33.6L54.5 33.7L56.5 33.8L58 34L59.1 34.1L59.9 34.2L60.4 34.3L60.6 34.5M3.3 33.2L3.5 33L3.9 32.9L4.7 32.7L5.9 32.5L7.4 32.3L9.3 32.1L11.6 32L14.3 31.8L17.4 31.7L20.7 31.6L24.3 31.5L28.1 31.5L32 31.5L35.9 31.5L39.7 31.5L43.3 31.6L46.6 31.7L49.7 31.8L52.4 32L54.7 32.1L56.6 32.3L58.1 32.5L59.3 32.7L60.1 32.9L60.5 33L60.7 33.2M3.2 32L3.4 31.7L3.9 31.5L4.6 31.3L5.8 31L7.3 30.8L9.3 30.6L11.6 30.4L14.3 30.2L17.3 30L20.7 29.9L24.3 29.8L28.1 29.7L32 29.7L35.9 29.7L39.7 29.8L43.3 29.9L46.7 30L49.7 30.2L52.4 30.4L54.7 30.6L56.7 30.8L58.2 31L59.4 31.3L60.1 31.5L60.6 31.7L60.8 32M3.2 30.7L3.4 30.4L3.8 30.2L4.6 29.9L5.8 29.6L7.3 29.3L9.2 29L11.6 28.8L14.3 28.5L17.3 28.3L20.7 28.2L24.3 28L28.1 28L32 27.9L35.9 28L39.7 28L43.3 28.2L46.7 28.3L49.7 28.5L52.4 28.8L54.8 29L56.7 29.3L58.2 29.6L59.4 29.9L60.2 30.2L60.6 30.4L60.8 30.7M3.2 29.5L3.4 29.1L3.9 28.8L4.7 28.5L5.8 28.1L7.3 27.8L9.3 27.5L11.6 27.2L14.3 26.9L17.3 26.6L20.7 26.4L24.3 26.3L28.1 26.2L32 26.2L35.9 26.2L39.7 26.3L43.3 26.4L46.7 26.6L49.7 26.9L52.4 27.2L54.7 27.5L56.7 27.8L58.2 28.1L59.3 28.5L60.1 28.8L60.6 29.1L60.8 29.5M3.3 28.2L3.5 27.9L4 27.5L4.8 27.1L5.9 26.7L7.4 26.3L9.4 25.9L11.7 25.6L14.4 25.3L17.4 25L20.7 24.8L24.4 24.6L28.1 24.5L32 24.5L35.9 24.5L39.6 24.6L43.3 24.8L46.6 25L49.6 25.3L52.3 25.6L54.6 25.9L56.6 26.3L58.1 26.7L59.2 27.1L60 27.5L60.5 27.9L60.7 28.2M3.5 27L3.6 26.6L4.1 26.1L4.9 25.7L6.1 25.3L7.6 24.8L9.5 24.4L11.8 24L14.5 23.7L17.5 23.4L20.8 23.1L24.4 22.9L28.2 22.8L32 22.8L35.8 22.8L39.6 22.9L43.2 23.1L46.5 23.4L49.5 23.7L52.2 24L54.5 24.4L56.4 24.8L57.9 25.3L59.1 25.7L59.9 26.1L60.4 26.6L60.5 27M3.8 25.3L4.3 24.8L5.1 24.4L6.3 23.9L7.8 23.4L9.7 22.9L12 22.5L14.6 22.1L17.6 21.8L20.9 21.5L24.5 21.3L28.2 21.1L32 21.1L35.8 21.1L39.5 21.3L43.1 21.5L46.4 21.8L49.4 22.1L52 22.5L54.3 22.9L56.2 23.4L57.7 23.9L58.9 24.4L59.7 24.8L60.2 25.3M4.1 24.1L4.6 23.6L5.4 23L6.5 22.5L8 22L9.9 21.5L12.2 21L14.8 20.6L17.8 20.2L21.1 19.9L24.6 19.7L28.2 19.5L32 19.5L35.8 19.5L39.4 19.7L42.9 19.9L46.2 20.2L49.2 20.6L51.8 21L54.1 21.5L56 22L57.5 22.5L58.6 23L59.4 23.6L59.9 24.1M4.4 22.9L4.9 22.3L5.7 21.7L6.8 21.2L8.3 20.6L10.2 20.1L12.5 19.6L15.1 19.1L18 18.7L21.2 18.4L24.7 18.1L28.3 18L32 17.9L35.7 18L39.3 18.1L42.8 18.4L46 18.7L48.9 19.1L51.5 19.6L53.8 20.1L55.7 20.6L57.2 21.2L58.3 21.7L59.1 22.3L59.6 22.9M4.8 21.7L5.3 21.1L6.1 20.5L7.2 19.9L8.7 19.3L10.5 18.7L12.8 18.1L15.3 17.7L18.2 17.2L21.4 16.9L24.8 16.6L28.4 16.5L32 16.4L35.6 16.5L39.2 16.6L42.6 16.9L45.8 17.2L48.7 17.7L51.2 18.1L53.5 18.7L55.3 19.3L56.8 19.9L57.9 20.5L58.7 21.1L59.2 21.7M5.2 20.5L5.7 19.9L6.5 19.2L7.6 18.6L9.1 18L10.9 17.4L13.1 16.8L15.6 16.3L18.5 15.8L21.6 15.5L24.9 15.2L28.4 15L32 15L35.6 15L39.1 15.2L42.4 15.5L45.5 15.8L48.4 16.3L50.9 16.8L53.1 17.4L54.9 18L56.4 18.6L57.5 19.2L58.3 19.9L58.8 20.5M5.6 19.4L6.1 18.7L6.9 18L8.1 17.4L9.5 16.7L11.3 16.1L13.5 15.5L16 15L18.8 14.5L21.8 14.1L25.1 13.9L28.5 13.7L32 13.6L35.5 13.7L38.9 13.9L42.2 14.1L45.2 14.5L48 15L50.5 15.5L52.7 16.1L54.5 16.7L55.9 17.4L57.1 18L57.9 18.7L58.4 19.4M6.1 18.3L6.6 17.6L7.4 16.9L8.6 16.2L10 15.5L11.8 14.9L13.9 14.3L16.4 13.7L19.1 13.2L22.1 12.8L25.3 12.6L28.6 12.4L32 12.3L35.4 12.4L38.7 12.6L41.9 12.8L44.9 13.2L47.6 13.7L50.1 14.3L52.2 14.9L54 15.5L55.4 16.2L56.6 16.9L57.4 17.6L57.9 18.3M6.7 17.2L7.2 16.5L8 15.8L9.1 15.1L10.5 14.4L12.3 13.7L14.4 13.1L16.8 12.5L19.4 12L22.3 11.6L25.4 11.3L28.7 11.2L32 11.1L35.3 11.2L38.6 11.3L41.7 11.6L44.6 12L47.2 12.5L49.6 13.1L51.7 13.7L53.5 14.4L54.9 15.1L56 15.8L56.8 16.5L57.3 17.2M7.2 16.2L7.8 15.5L8.6 14.7L9.7 14L11.1 13.3L12.8 12.6L14.9 12L17.2 11.4L19.8 10.9L22.6 10.5L25.6 10.2L28.8 10L32 10L35.2 10L38.4 10.2L41.4 10.5L44.2 10.9L46.8 11.4L49.1 12L51.2 12.6L52.9 13.3L54.3 14L55.4 14.7L56.2 15.5L56.8 16.2M8.4 14.5L9.2 13.7L10.3 13L11.7 12.2L13.4 11.6L15.4 10.9L17.6 10.3L20.2 9.8L22.9 9.4L25.8 9.1L28.9 9L32 8.9L35.1 9L38.2 9.1L41.1 9.4L43.8 9.8L46.4 10.3L48.6 10.9L50.6 11.6L52.3 12.2L53.7 13L54.8 13.7L55.6 14.5M9.1 13.5L9.9 12.7L11 12L12.3 11.3L14 10.6L15.9 9.9L18.1 9.4L20.6 8.9L23.2 8.5L26.1 8.2L29 8L32 7.9L35 8L37.9 8.2L40.8 8.5L43.4 8.9L45.9 9.4L48.1 9.9L50 10.6L51.7 11.3L53 12L54.1 12.7L54.9 13.5M9.8 12.6L10.6 11.8L11.6 11.1L13 10.4L14.6 9.7L16.5 9L18.6 8.4L21 8L23.6 7.6L26.3 7.3L29.1 7.1L32 7L34.9 7.1L37.7 7.3L40.4 7.6L43 8L45.4 8.4L47.5 9L49.4 9.7L51 10.4L52.4 11.1L53.4 11.8L54.2 12.6M10.5 11.7L11.3 11L12.3 10.2L13.7 9.5L15.2 8.8L17.1 8.2L19.1 7.6L21.4 7.1L23.9 6.7L26.5 6.4L29.2 6.3L32 6.2L34.8 6.3L37.5 6.4L40.1 6.7L42.6 7.1L44.9 7.6L46.9 8.2L48.8 8.8L50.3 9.5L51.7 10.2L52.7 11L53.5 11.7M12 10.2L13.1 9.4L14.4 8.7L15.9 8L17.7 7.4L19.6 6.8L21.8 6.4L24.2 6L26.7 5.7L29.3 5.5L32 5.5L34.7 5.5L37.3 5.7L39.8 6L42.2 6.4L44.4 6.8L46.3 7.4L48.1 8L49.6 8.7L50.9 9.4L52 10.2M12.8 9.4L13.8 8.7L15.1 8L16.6 7.3L18.3 6.7L20.2 6.2L22.3 5.7L24.6 5.3L27 5L29.5 4.9L32 4.8L34.5 4.9L37 5L39.4 5.3L41.7 5.7L43.8 6.2L45.7 6.7L47.4 7.3L48.9 8L50.2 8.7L51.2 9.4M13.6 8.7L14.6 8L15.8 7.3L17.2 6.7L18.9 6.1L20.7 5.5L22.7 5.1L24.9 4.7L27.2 4.4L29.6 4.3L32 4.2L34.4 4.3L36.8 4.4L39.1 4.7L41.3 5.1L43.3 5.5L45.1 6.1L46.8 6.7L48.2 7.3L49.4 8L50.4 8.7M15.4 7.4L16.6 6.7L17.9 6.1L19.5 5.5L21.3 5L23.2 4.5L25.3 4.2L27.5 3.9L29.7 3.8L32 3.7L34.3 3.8L36.5 3.9L38.7 4.2L40.8 4.5L42.7 5L44.5 5.5L46.1 6.1L47.4 6.7L48.6 7.4M16.2 6.8L17.3 6.2L18.7 5.6L20.2 5L21.8 4.5L23.7 4.1L25.6 3.7L27.7 3.5L29.8 3.3L32 3.3L34.2 3.3L36.3 3.5L38.4 3.7L40.3 4.1L42.2 4.5L43.8 5L45.3 5.6L46.7 6.2L47.8 6.8M18.1 5.7L19.4 5.1L20.8 4.6L22.4 4.1L24.1 3.7L26 3.3L27.9 3.1L30 3L32 2.9L34 3L36.1 3.1L38 3.3L39.9 3.7L41.6 4.1L43.2 4.6L44.6 5.1L45.9 5.7M18.9 5.3L20.1 4.7L21.5 4.2L23 3.7L24.6 3.3L26.4 3L28.2 2.8L30.1 2.7L32 2.6L33.9 2.7L35.8 2.8L37.6 3L39.4 3.3L41 3.7L42.5 4.2L43.9 4.7L45.1 5.3M20.8 4.4L22.1 3.9L23.5 3.4L25.1 3.1L26.7 2.8L28.4 2.6L30.2 2.4L32 2.4L33.8 2.4L35.6 2.6L37.3 2.8L38.9 3.1L40.5 3.4L41.9 3.9L43.2 4.4M22.8 3.6L24.1 3.2L25.5 2.9L27.1 2.6L28.7 2.4L30.3 2.3L32 2.2L33.7 2.3L35.3 2.4L36.9 2.6L38.5 2.9L39.9 3.2L41.2 3.6M24.6 3.1L26 2.7L27.4 2.5L28.9 2.3L30.4 2.2L32 2.1L33.6 2.2L35.1 2.3L36.6 2.5L38 2.7L39.4 3.1M27.8 2.4L29.2 2.2L30.6 2.1L32 2.1L33.4 2.1L34.8 2.2L36.2 2.4"/><path id="sbm" d="M26.1 59.1L24.9 58.7L23.7 58.2L22.5 57.5L21.3 56.6L20.1 55.4L18.9 54.1L17.7 52.5L16.7 50.7L15.6 48.7L14.7 46.6L13.9 44.2L13.1 41.7L12.5 39.1L12.1 36.3L11.8 33.6L11.6 30.7L11.6 27.9L11.7 25.2L12 22.5L12.4 19.9L12.9 17.5L13.6 15.2L14.4 13.1L15.2 11.2L16.2 9.5L17.2 8L18.2 6.7L19.3 5.7L20.5 4.8L21.6 4.1L22.7 3.6M32 59.7L32 59.6L32 59.4L32 59L32 58.3L32 57.5L32 56.4L32 55L32 53.5L32 51.6L32 49.6L32 47.3L32 44.8L32 42.1L32 39.2L32 36.2L32 33.2L32 30.1L32 27L32 24L32 21.1L32 18.3L32 15.7L32 13.3L32 11.1L32 9.2L32 7.5L32 6L32 4.8L32 3.8L32 3.1L32 2.6L32 2.2L32 2.1M37.9 59.1L39.1 58.7L40.3 58.2L41.5 57.5L42.7 56.6L43.9 55.4L45.1 54.1L46.3 52.5L47.3 50.7L48.4 48.7L49.3 46.6L50.1 44.2L50.9 41.7L51.5 39.1L51.9 36.3L52.2 33.6L52.4 30.7L52.4 27.9L52.3 25.2L52 22.5L51.6 19.9L51.1 17.5L50.4 15.2L49.6 13.1L48.8 11.2L47.8 9.5L46.8 8L45.8 6.7L44.7 5.7L43.5 4.8L42.4 4.1L41.3 3.6"/><path id="so" d="M18.9 56.5L19.7 56.9L20.6 57.2L21.7 57.5L22.9 57.8L24.2 58L25.6 58.2L27.2 58.4L28.7 58.5L30.4 58.6L32 58.6L33.6 58.6L35.3 58.5L36.8 58.4L38.4 58.2L39.8 58L41.1 57.8L42.3 57.5L43.4 57.2L44.3 56.9L45.1 56.5M9.8 49.2L10.4 49.6L11.2 49.9L12.2 50.3L13.5 50.6L15.1 50.9L16.9 51.2L19 51.5L21.3 51.7L23.8 51.9L26.5 52.1L29.2 52.1L32 52.2L34.8 52.1L37.5 52.1L40.2 51.9L42.7 51.7L45 51.5L47.1 51.2L48.9 50.9L50.5 50.6L51.8 50.3L52.8 49.9L53.6 49.6L54.2 49.2M4.4 39.2L4.6 39.3L5.1 39.3L5.9 39.4L7.1 39.5L8.6 39.5L10.4 39.6L12.7 39.7L15.2 39.7L18.1 39.8L21.3 39.8L24.8 39.8L28.3 39.9L32 39.9L35.7 39.9L39.2 39.8L42.7 39.8L45.9 39.8L48.8 39.7L51.3 39.7L53.6 39.6L55.4 39.5L56.9 39.5L58.1 39.4L58.9 39.3L59.4 39.3L59.6 39.2M3.3 28.3L3.5 27.9L4 27.5L4.8 27.2L5.9 26.8L7.4 26.4L9.3 26L11.7 25.7L14.3 25.3L17.4 25.1L20.7 24.8L24.4 24.7L28.1 24.6L32 24.5L35.9 24.6L39.6 24.7L43.3 24.8L46.6 25.1L49.7 25.3L52.3 25.7L54.7 26L56.6 26.4L58.1 26.8L59.2 27.2L60 27.5L60.5 27.9L60.7 28.3M6.6 17.3L7.1 16.6L7.9 15.9L9 15.2L10.5 14.5L12.2 13.8L14.3 13.2L16.7 12.7L19.4 12.2L22.3 11.8L25.4 11.5L28.7 11.3L32 11.2L35.3 11.3L38.6 11.5L41.7 11.8L44.6 12.2L47.3 12.7L49.7 13.2L51.8 13.8L53.5 14.5L55 15.2L56.1 15.9L56.9 16.6L57.4 17.3M15.2 7.5L16.4 6.9L17.8 6.2L19.4 5.6L21.1 5.1L23.1 4.7L25.2 4.3L27.4 4L29.7 3.9L32 3.8L34.3 3.9L36.6 4L38.8 4.3L40.9 4.7L42.9 5.1L44.6 5.6L46.2 6.2L47.6 6.9L48.8 7.5"/><path id="som" d="M7.9 46.7L6.8 44.8L5.8 42.9L5 40.8L4.3 38.7L3.8 36.6L3.4 34.4L3.2 32.2L3.2 30L3.4 27.9L3.7 25.7M12.2 51.8L10.7 50.3L9.4 48.7L8.1 46.9L7 45L6 43L5.1 40.9L4.4 38.8L3.9 36.6L3.5 34.3L3.4 32.1L3.3 29.8L3.5 27.6L3.8 25.4L4.3 23.3L4.9 21.2L5.7 19.2L6.6 17.3M15.8 54.7L14.1 53.5L12.6 52.1L11.1 50.6L9.7 48.9L8.5 47.1L7.3 45.2L6.3 43.2L5.5 41L4.7 38.8L4.2 36.5L3.8 34.2L3.6 31.9L3.6 29.6L3.8 27.3L4.1 25L4.6 22.8L5.2 20.7L6 18.7L6.9 16.8L8 15L9.1 13.4M17.9 56L16.2 55L14.6 53.8L13.1 52.4L11.6 50.9L10.2 49.2L9 47.4L7.8 45.4L6.8 43.3L5.9 41.1L5.2 38.8L4.7 36.5L4.3 34.1L4.1 31.7L4.1 29.3L4.2 27L4.6 24.7L5.1 22.4L5.7 20.3L6.5 18.2L7.4 16.3L8.5 14.5L9.7 12.8L10.9 11.3M20.1 57.1L18.4 56.3L16.8 55.3L15.2 54.1L13.7 52.7L12.3 51.2L10.9 49.5L9.6 47.6L8.5 45.6L7.5 43.5L6.6 41.2L5.9 38.9L5.4 36.5L5 34L4.8 31.6L4.8 29.1L4.9 26.7L5.2 24.3L5.7 22L6.4 19.8L7.2 17.7L8.1 15.7L9.2 13.9L10.3 12.2L11.6 10.7L12.9 9.4L14.3 8.2M20.6 57.3L19 56.5L17.5 55.5L16 54.4L14.5 53L13.1 51.5L11.7 49.7L10.5 47.8L9.3 45.8L8.3 43.6L7.5 41.3L6.8 38.9L6.2 36.4L5.9 33.9L5.7 31.4L5.6 28.9L5.8 26.4L6.1 23.9L6.6 21.6L7.2 19.3L8 17.2L9 15.2L10 13.3L11.1 11.6L12.4 10.1L13.7 8.8L15 7.6M22.8 58.2L21.3 57.6L19.8 56.8L18.3 55.8L16.8 54.6L15.3 53.3L14 51.7L12.7 50L11.5 48.1L10.4 46L9.4 43.8L8.5 41.4L7.8 39L7.3 36.4L6.9 33.8L6.7 31.2L6.7 28.6L6.9 26.1L7.2 23.5L7.7 21.1L8.3 18.8L9.1 16.7L10 14.6L11 12.8L12.1 11.1L13.3 9.6L14.6 8.3L15.9 7.1L17.3 6.2M23.4 58.4L22 57.8L20.5 57L19.1 56.1L17.7 54.9L16.4 53.6L15 52L13.8 50.2L12.6 48.3L11.6 46.2L10.6 43.9L9.8 41.5L9.1 39L8.6 36.4L8.3 33.7L8.1 31.1L8 28.4L8.2 25.8L8.5 23.2L9 20.7L9.6 18.4L10.3 16.2L11.2 14.1L12.2 12.2L13.3 10.5L14.4 9L15.6 7.7L16.9 6.6L18.2 5.7L19.5 5M24.1 58.6L22.8 58L21.4 57.3L20.1 56.3L18.8 55.2L17.5 53.8L16.3 52.2L15.1 50.5L14 48.5L13 46.4L12.1 44.1L11.3 41.6L10.6 39L10.1 36.4L9.8 33.6L9.6 30.9L9.6 28.2L9.7 25.5L10 22.8L10.5 20.3L11.1 17.9L11.8 15.7L12.6 13.6L13.5 11.7L14.6 10L15.6 8.5L16.8 7.2L18 6.1L19.2 5.2L20.4 4.5M26 59.1L24.8 58.7L23.6 58.2L22.4 57.5L21.1 56.5L19.9 55.4L18.7 54L17.6 52.5L16.5 50.7L15.5 48.7L14.5 46.5L13.7 44.2L12.9 41.7L12.3 39.1L11.9 36.3L11.6 33.6L11.4 30.8L11.4 28L11.5 25.2L11.8 22.5L12.2 19.9L12.7 17.5L13.4 15.2L14.2 13.1L15.1 11.2L16 9.5L17 8.1L18.1 6.8L19.2 5.7L20.3 4.8L21.5 4.2L22.6 3.7M26.7 59.2L25.6 58.9L24.5 58.4L23.4 57.7L22.3 56.8L21.2 55.6L20.1 54.3L19.1 52.7L18.1 50.9L17.1 48.9L16.3 46.7L15.5 44.3L14.8 41.8L14.3 39.1L13.8 36.3L13.5 33.5L13.4 30.6L13.4 27.8L13.5 24.9L13.7 22.2L14.1 19.6L14.6 17.1L15.2 14.8L16 12.7L16.8 10.8L17.6 9.1L18.6 7.6L19.5 6.3L20.5 5.3L21.6 4.4L22.6 3.8L23.6 3.4M27.4 59.3L26.4 59L25.5 58.5L24.5 57.8L23.5 56.9L22.5 55.8L21.6 54.5L20.7 52.9L19.8 51.1L18.9 49.1L18.2 46.8L17.5 44.4L16.9 41.8L16.4 39.1L16 36.3L15.7 33.4L15.6 30.5L15.6 27.6L15.7 24.7L15.9 21.9L16.3 19.3L16.7 16.8L17.3 14.4L17.9 12.3L18.6 10.4L19.4 8.7L20.2 7.2L21.1 6L22 4.9L22.9 4.1L23.8 3.5L24.7 3.1M28.1 59.4L27.3 59.1L26.5 58.7L25.6 58L24.8 57.1L24 56L23.2 54.6L22.4 53.1L21.6 51.2L20.9 49.2L20.2 47L19.6 44.5L19.1 41.9L18.7 39.1L18.3 36.3L18.1 33.3L18 30.4L18 27.4L18.1 24.5L18.3 21.7L18.6 19L19 16.5L19.4 14.1L20 12L20.6 10L21.3 8.3L22 6.9L22.7 5.6L23.5 4.6L24.3 3.8L25 3.2L25.8 2.8L26.6 2.6M28.8 59.5L28.2 59.2L27.5 58.8L26.9 58.1L26.2 57.2L25.5 56.1L24.8 54.8L24.2 53.2L23.5 51.4L23 49.3L22.4 47.1L21.9 44.6L21.5 42L21.1 39.2L20.9 36.3L20.7 33.3L20.6 30.3L20.5 27.3L20.6 24.3L20.8 21.5L21 18.8L21.4 16.2L21.8 13.8L22.2 11.7L22.7 9.7L23.3 8L23.9 6.6L24.5 5.3L25.1 4.3L25.7 3.6L26.4 3L27 2.6L27.6 2.4M29.6 59.6L29.1 59.3L28.6 58.9L28.1 58.2L27.6 57.3L27.1 56.2L26.6 54.9L26.1 53.3L25.6 51.5L25.1 49.4L24.7 47.2L24.3 44.7L24 42L23.7 39.2L23.5 36.2L23.4 33.2L23.3 30.2L23.3 27.2L23.3 24.2L23.5 21.3L23.7 18.6L23.9 16L24.2 13.6L24.6 11.4L24.9 9.5L25.4 7.8L25.8 6.3L26.3 5.1L26.8 4.1L27.2 3.4L27.7 2.8L28.2 2.5L28.7 2.3M30.4 59.6L30.1 59.4L29.7 58.9L29.4 58.3L29 57.4L28.7 56.3L28.3 55L28 53.4L27.7 51.6L27.4 49.5L27.1 47.2L26.8 44.7L26.6 42L26.4 39.2L26.3 36.2L26.2 33.2L26.1 30.1L26.1 27.1L26.2 24.1L26.2 21.2L26.4 18.4L26.5 15.8L26.8 13.4L27 11.3L27.3 9.3L27.5 7.6L27.8 6.2L28.2 4.9L28.5 4L28.8 3.2L29.1 2.7L29.5 2.3L29.8 2.2M31.2 59.6L31 59.4L30.9 59L30.7 58.3L30.5 57.5L30.3 56.4L30.2 55L30 53.4L29.8 51.6L29.7 49.6L29.5 47.3L29.4 44.7L29.3 42.1L29.2 39.2L29.1 36.2L29.1 33.2L29 30.1L29 27L29.1 24L29.1 21.1L29.2 18.3L29.3 15.7L29.4 13.3L29.5 11.2L29.6 9.2L29.8 7.5L29.9 6.1L30.1 4.9L30.2 3.9L30.4 3.1L30.6 2.6L30.7 2.3L30.9 2.1M32 59.7L32 59.6L32 59.4L32 59L32 58.3L32 57.5L32 56.4L32 55L32 53.5L32 51.6L32 49.6L32 47.3L32 44.8L32 42.1L32 39.2L32 36.2L32 33.2L32 30.1L32 27L32 24L32 21.1L32 18.3L32 15.7L32 13.3L32 11.1L32 9.2L32 7.5L32 6L32 4.8L32 3.8L32 3.1L32 2.6L32 2.2L32 2.1M32.8 59.6L33 59.4L33.1 59L33.3 58.3L33.5 57.5L33.7 56.4L33.8 55L34 53.4L34.2 51.6L34.3 49.6L34.5 47.3L34.6 44.7L34.7 42.1L34.8 39.2L34.9 36.2L34.9 33.2L35 30.1L35 27L34.9 24L34.9 21.1L34.8 18.3L34.7 15.7L34.6 13.3L34.5 11.2L34.4 9.2L34.2 7.5L34.1 6.1L33.9 4.9L33.8 3.9L33.6 3.1L33.4 2.6L33.3 2.3L33.1 2.1M33.6 59.6L33.9 59.4L34.3 58.9L34.6 58.3L35 57.4L35.3 56.3L35.7 55L36 53.4L36.3 51.6L36.6 49.5L36.9 47.2L37.2 44.7L37.4 42L37.6 39.2L37.7 36.2L37.8 33.2L37.9 30.1L37.9 27.1L37.8 24.1L37.8 21.2L37.6 18.4L37.5 15.8L37.2 13.4L37 11.3L36.7 9.3L36.5 7.6L36.2 6.2L35.8 4.9L35.5 4L35.2 3.2L34.9 2.7L34.5 2.3L34.2 2.2M34.4 59.6L34.9 59.3L35.4 58.9L35.9 58.2L36.4 57.3L36.9 56.2L37.4 54.9L37.9 53.3L38.4 51.5L38.9 49.4L39.3 47.2L39.7 44.7L40 42L40.3 39.2L40.5 36.2L40.6 33.2L40.7 30.2L40.7 27.2L40.7 24.2L40.5 21.3L40.3 18.6L40.1 16L39.8 13.6L39.4 11.4L39.1 9.5L38.6 7.8L38.2 6.3L37.7 5.1L37.2 4.1L36.8 3.4L36.3 2.8L35.8 2.5L35.3 2.3M35.2 59.5L35.8 59.2L36.5 58.8L37.1 58.1L37.8 57.2L38.5 56.1L39.2 54.8L39.8 53.2L40.5 51.4L41 49.3L41.6 47.1L42.1 44.6L42.5 42L42.9 39.2L43.1 36.3L43.3 33.3L43.4 30.3L43.5 27.3L43.4 24.3L43.2 21.5L43 18.8L42.6 16.2L42.2 13.8L41.8 11.7L41.3 9.7L40.7 8L40.1 6.6L39.5 5.3L38.9 4.3L38.3 3.6L37.6 3L37 2.6L36.4 2.4M35.9 59.4L36.7 59.1L37.5 58.7L38.4 58L39.2 57.1L40 56L40.8 54.6L41.6 53.1L42.4 51.2L43.1 49.2L43.8 47L44.4 44.5L44.9 41.9L45.3 39.1L45.7 36.3L45.9 33.3L46 30.4L46 27.4L45.9 24.5L45.7 21.7L45.4 19L45 16.5L44.6 14.1L44 12L43.4 10L42.7 8.3L42 6.9L41.3 5.6L40.5 4.6L39.7 3.8L39 3.2L38.2 2.8L37.4 2.6M36.6 59.3L37.6 59L38.5 58.5L39.5 57.8L40.5 56.9L41.5 55.8L42.4 54.5L43.3 52.9L44.2 51.1L45.1 49.1L45.8 46.8L46.5 44.4L47.1 41.8L47.6 39.1L48 36.3L48.3 33.4L48.4 30.5L48.4 27.6L48.3 24.7L48.1 21.9L47.7 19.3L47.3 16.8L46.7 14.4L46.1 12.3L45.4 10.4L44.6 8.7L43.8 7.2L42.9 6L42 4.9L41.1 4.1L40.2 3.5L39.3 3.1M37.3 59.2L38.4 58.9L39.5 58.4L40.6 57.7L41.7 56.8L42.8 55.6L43.9 54.3L44.9 52.7L45.9 50.9L46.9 48.9L47.7 46.7L48.5 44.3L49.2 41.8L49.7 39.1L50.2 36.3L50.5 33.5L50.6 30.6L50.6 27.8L50.5 24.9L50.3 22.2L49.9 19.6L49.4 17.1L48.8 14.8L48 12.7L47.2 10.8L46.4 9.1L45.4 7.6L44.5 6.3L43.5 5.3L42.4 4.4L41.4 3.8L40.4 3.4M38 59.1L39.2 58.7L40.4 58.2L41.6 57.5L42.9 56.5L44.1 55.4L45.3 54L46.4 52.5L47.5 50.7L48.5 48.7L49.5 46.5L50.3 44.2L51.1 41.7L51.7 39.1L52.1 36.3L52.4 33.6L52.6 30.8L52.6 28L52.5 25.2L52.2 22.5L51.8 19.9L51.3 17.5L50.6 15.2L49.8 13.1L48.9 11.2L48 9.5L47 8.1L45.9 6.8L44.8 5.7L43.7 4.8L42.5 4.2L41.4 3.7M39.9 58.6L41.2 58L42.6 57.3L43.9 56.3L45.2 55.2L46.5 53.8L47.7 52.2L48.9 50.5L50 48.5L51 46.4L51.9 44.1L52.7 41.6L53.4 39L53.9 36.4L54.2 33.6L54.4 30.9L54.4 28.2L54.3 25.5L54 22.8L53.5 20.3L52.9 17.9L52.2 15.7L51.4 13.6L50.5 11.7L49.4 10L48.4 8.5L47.2 7.2L46 6.1L44.8 5.2L43.6 4.5M40.6 58.4L42 57.8L43.5 57L44.9 56.1L46.3 54.9L47.6 53.6L49 52L50.2 50.2L51.4 48.3L52.4 46.2L53.4 43.9L54.2 41.5L54.9 39L55.4 36.4L55.7 33.7L55.9 31.1L56 28.4L55.8 25.8L55.5 23.2L55 20.7L54.4 18.4L53.7 16.2L52.8 14.1L51.8 12.2L50.7 10.5L49.6 9L48.4 7.7L47.1 6.6L45.8 5.7L44.5 5M41.2 58.2L42.7 57.6L44.2 56.8L45.7 55.8L47.2 54.6L48.7 53.3L50 51.7L51.3 50L52.5 48.1L53.6 46L54.6 43.8L55.5 41.4L56.2 39L56.7 36.4L57.1 33.8L57.3 31.2L57.3 28.6L57.1 26.1L56.8 23.5L56.3 21.1L55.7 18.8L54.9 16.7L54 14.6L53 12.8L51.9 11.1L50.7 9.6L49.4 8.3L48.1 7.1L46.7 6.2M43.4 57.3L45 56.5L46.5 55.5L48 54.4L49.5 53L50.9 51.5L52.3 49.7L53.5 47.8L54.7 45.8L55.7 43.6L56.5 41.3L57.2 38.9L57.8 36.4L58.1 33.9L58.3 31.4L58.4 28.9L58.2 26.4L57.9 23.9L57.4 21.6L56.8 19.3L56 17.2L55 15.2L54 13.3L52.9 11.6L51.6 10.1L50.3 8.8L49 7.6M43.9 57.1L45.6 56.3L47.2 55.3L48.8 54.1L50.3 52.7L51.7 51.2L53.1 49.5L54.4 47.6L55.5 45.6L56.5 43.5L57.4 41.2L58.1 38.9L58.6 36.5L59 34L59.2 31.6L59.2 29.1L59.1 26.7L58.8 24.3L58.3 22L57.6 19.8L56.8 17.7L55.9 15.7L54.8 13.9L53.7 12.2L52.4 10.7L51.1 9.4L49.7 8.2M46.1 56L47.8 55L49.4 53.8L50.9 52.4L52.4 50.9L53.8 49.2L55 47.4L56.2 45.4L57.2 43.3L58.1 41.1L58.8 38.8L59.3 36.5L59.7 34.1L59.9 31.7L59.9 29.3L59.8 27L59.4 24.7L58.9 22.4L58.3 20.3L57.5 18.2L56.6 16.3L55.5 14.5L54.3 12.8L53.1 11.3M48.2 54.7L49.9 53.5L51.4 52.1L52.9 50.6L54.3 48.9L55.5 47.1L56.7 45.2L57.7 43.2L58.5 41L59.3 38.8L59.8 36.5L60.2 34.2L60.4 31.9L60.4 29.6L60.2 27.3L59.9 25L59.4 22.8L58.8 20.7L58 18.7L57.1 16.8L56 15L54.9 13.4M51.8 51.8L53.3 50.3L54.6 48.7L55.9 46.9L57 45L58 43L58.9 40.9L59.6 38.8L60.1 36.6L60.5 34.3L60.6 32.1L60.7 29.8L60.5 27.6L60.2 25.4L59.7 23.3L59.1 21.2L58.3 19.2L57.4 17.3M56.1 46.7L57.2 44.8L58.2 42.9L59 40.8L59.7 38.7L60.2 36.6L60.6 34.4L60.8 32.2L60.8 30L60.6 27.9L60.3 25.7"/><path id="fl" d="M32 59.7M24 58.6M27.2 59.3L26.5 59.1M32.2 59.7L32.2 59.7L32.3 59.5M35 59.5L35.4 59.4M24.6 58.7L25.5 58.9L26.5 59.1L27.5 59.3L28.6 59.4L29.7 59.5L30.8 59.5L32 59.5L33.2 59.5L34.3 59.5L35.4 59.4L36.5 59.3L37.5 59.1L38.5 58.9L39.4 58.7M21.9 57.9L20.7 57.4M27.7 59.3L27.1 59L26.5 58.7M30.8 59.5L30.7 59.3L30.5 59M36.8 59.2L37.4 59L38.1 58.6M39.4 58.7L40.4 58.4L41.4 58M20 57.1L20.7 57.4L21.6 57.7L22.6 58L23.7 58.2L24.9 58.4L26.2 58.6L27.6 58.8L29 58.9L30.5 59L32 59L33.5 59L35 58.9L36.4 58.8L37.8 58.6L39.1 58.4L40.3 58.2L41.4 58L42.4 57.7L43.3 57.4L44 57.1M21.8 57.8L20.7 57.2L19.7 56.5M24.9 58.4L24.1 57.9L23.3 57.3M32.4 59L32.4 58.5L32.4 57.9M36.4 58.8L36.9 58.3L37.4 57.7M42.6 57.6L43.7 57.1L44.9 56.4M47.2 55.4M16.8 55.4L17.5 55.8L18.4 56.1L19.4 56.5L20.6 56.8L21.9 57.1L23.3 57.3L24.9 57.5L26.6 57.7L28.3 57.8L30.2 57.9L32 57.9L33.8 57.9L35.7 57.8L37.4 57.7L39.1 57.5L40.7 57.3L42.1 57.1L43.4 56.8L44.6 56.5L45.6 56.1L46.5 55.8L47.2 55.4M16.8 55.4L15.6 54.6L14.4 53.7M19 56.3L17.9 55.5L16.8 54.7M20.6 56.8L19.6 56L18.6 55.1M24.3 57.5L23.6 56.7L22.9 55.9M26.6 57.7L26.1 57L25.6 56.1M31.3 57.9L31.2 57.2L31.2 56.4M33.8 57.9L34 57.2L34.2 56.4M38.5 57.6L39.1 56.9L39.6 56M40.7 57.3L41.4 56.6L42.2 55.7M44.2 56.6L45.2 55.8L46.3 54.9M45.6 56.1L46.8 55.3L47.9 54.4M48.7 54.3L50 53.4M13.9 53.3L14.4 53.7L15.2 54.1L16.1 54.4L17.2 54.8L18.6 55.1L20.1 55.4L21.8 55.7L23.6 56L25.6 56.1L27.7 56.3L29.8 56.4L32 56.4L34.2 56.4L36.3 56.3L38.4 56.1L40.4 56L42.2 55.7L43.9 55.4L45.4 55.1L46.8 54.8L47.9 54.4L48.8 54.1L49.6 53.7L50.1 53.3M14.9 53.9L13.7 52.9L12.6 51.8M16.1 54.4L15 53.4L13.9 52.3M19.5 55.3L18.6 54.3L17.7 53.2M21.8 55.7L21 54.7L20.2 53.6M26.9 56.2L26.5 55.3L26.1 54.2M29.8 56.4L29.6 55.4L29.5 54.3M35.5 56.3L35.8 55.4L36.1 54.2M38.4 56.1L38.9 55.2L39.4 54.1M43.3 55.6L44.1 54.6L45 53.5M45.4 55.1L46.4 54.1L47.4 53M48.5 54.2L49.6 53.2L50.7 52.1M49.6 53.7L50.8 52.7L51.9 51.6M11.6 51.2L12.1 51.6L12.9 51.9L13.9 52.3L15.2 52.7L16.6 53L18.3 53.3L20.2 53.6L22.3 53.9L24.6 54.1L27 54.2L29.5 54.3L32 54.3L34.5 54.3L37 54.2L39.4 54.1L41.7 53.9L43.8 53.6L45.7 53.3L47.4 53L48.8 52.7L50.1 52.3L51.1 51.9L51.9 51.6L52.4 51.2M11.4 51L10.3 49.9L9.3 48.6M12.1 51.6L11 50.4L10 49.1M14.7 52.5L13.6 51.3L12.7 50M16.6 53L15.7 51.8L14.8 50.5M21.5 53.8L20.9 52.5L20.2 51.2M24.6 54.1L24.1 52.8L23.7 51.4M31 54.3L31 53.1L30.9 51.7M34.5 54.3L34.7 53L34.9 51.7M40.8 53.9L41.4 52.7L41.9 51.3M43.8 53.6L44.5 52.4L45.2 51M48.3 52.8L49.3 51.6L50.2 50.3M50.1 52.3L51.1 51.1L52.1 49.8M52.3 51.3L53.3 50.1L54.4 48.9M9.5 48.8L10 49.1L10.8 49.5L11.9 49.8L13.2 50.1L14.8 50.5L16.7 50.8L18.8 51L21.1 51.2L23.7 51.4L26.4 51.6L29.1 51.7L32 51.7L34.9 51.7L37.6 51.6L40.3 51.4L42.9 51.2L45.2 51L47.3 50.8L49.2 50.5L50.8 50.1L52.1 49.8L53.2 49.5L54 49.1L54.5 48.8M8.2 47.1L7.3 45.8M10.5 49.3L9.5 48L8.6 46.5M11.9 49.8L10.9 48.4L10.1 46.9M15.9 50.6L15.1 49.2L14.4 47.6M18.8 51L18.1 49.5L17.5 47.9M25.3 51.5L25 50L24.6 48.4M29.1 51.7L29 50.1L28.8 48.5M36.6 51.6L36.8 50.1L37.1 48.4M40.3 51.4L40.8 49.9L41.2 48.3M46.5 50.9L47.3 49.4L48 47.8M49.2 50.5L50 49L50.8 47.5M52.8 49.6L53.8 48.2L54.6 46.7M54 49.1L54.9 47.8L55.8 46.3M7.3 45.8L7.6 46.1L8.2 46.3L9 46.6L10.1 46.9L11.5 47.2L13.2 47.5L15.2 47.7L17.5 47.9L20 48.1L22.8 48.3L25.8 48.4L28.8 48.5L32 48.5L35.2 48.5L38.2 48.4L41.2 48.3L44 48.1L46.5 47.9L48.8 47.7L50.8 47.5L52.5 47.2L53.9 46.9L55 46.6L55.8 46.3L56.4 46.1L56.7 45.8M7.5 45.9L6.7 44.5L5.9 43M8.2 46.3L7.3 44.9L6.6 43.3M10.9 47.1L10.1 45.5L9.4 43.8M13.2 47.5L12.4 45.8L11.8 44.1M19 48.1L18.5 46.3L18 44.5M22.8 48.3L22.4 46.5L22.1 44.7M30.8 48.5L30.7 46.7L30.7 44.8M35.2 48.5L35.3 46.7L35.4 44.8M42.9 48.2L43.4 46.5L43.8 44.6M46.5 47.9L47.1 46.2L47.7 44.4M51.9 47.3L52.7 45.7L53.4 44M53.9 46.9L54.7 45.4L55.5 43.7M56.2 46.2L57 44.7L57.8 43.2M56.7 45.8L57.5 44.4L58.2 42.9M5.8 42.9L6.1 43.1L6.6 43.3L7.4 43.5L8.5 43.7L10 43.9L11.8 44.1L13.9 44.3L16.3 44.4L19.1 44.6L22.1 44.7L25.2 44.8L28.6 44.8L32 44.8L35.4 44.8L38.8 44.8L41.9 44.7L44.9 44.6L47.7 44.4L50.1 44.3L52.2 44.1L54 43.9L55.5 43.7L56.6 43.5L57.4 43.3L57.9 43.1L58.2 42.9M5.8 42.9L5.2 41.4L4.6 39.8M7.1 43.4L6.4 41.8L5.8 40.1M8.5 43.7L7.9 42L7.3 40.2M13 44.2L12.5 42.4L12 40.4M16.3 44.4L15.8 42.5L15.4 40.6M24 44.7L23.8 42.8L23.5 40.7M28.6 44.8L28.5 42.8L28.4 40.7M37.5 44.8L37.7 42.8L37.8 40.7M41.9 44.7L42.3 42.7L42.6 40.7M49.2 44.3L49.8 42.5L50.2 40.5M52.2 44.1L52.8 42.3L53.4 40.4M56.2 43.6L56.9 41.9L57.5 40.2M57.4 43.3L58.1 41.7L58.7 40M4.6 39.8L4.8 39.9L5.3 40L6.1 40.1L7.3 40.2L8.8 40.3L10.6 40.4L12.8 40.5L15.4 40.6L18.3 40.6L21.4 40.7L24.8 40.7L28.4 40.7L32 40.7L35.6 40.7L39.2 40.7L42.6 40.7L45.7 40.6L48.6 40.6L51.2 40.5L53.4 40.4L55.2 40.3L56.7 40.2L57.9 40.1L58.7 40L59.2 39.9L59.4 39.8M4.7 39.9L4.3 38.3L3.9 36.7M5.3 40L4.8 38.3L4.5 36.6M8.2 40.3L7.7 38.4L7.3 36.5M10.6 40.4L10.2 38.5L9.8 36.5M17.2 40.6L16.8 38.5L16.5 36.4M21.4 40.7L21.2 38.5L21 36.4M30.6 40.7L30.6 38.6L30.6 36.3M35.6 40.7L35.7 38.6L35.8 36.3M44.5 40.6L44.8 38.5L45.1 36.4M48.6 40.6L49 38.5L49.3 36.4M54.6 40.3L55 38.4L55.4 36.5M56.7 40.2L57.2 38.4L57.6 36.5M59 40L59.5 38.3L59.9 36.6M59.4 39.8L59.8 38.3L60.2 36.7M3.8 36.7L4 36.6L4.5 36.6L5.3 36.6L6.4 36.5L7.9 36.5L9.8 36.5L12.1 36.4L14.7 36.4L17.7 36.4L21 36.4L24.5 36.4L28.2 36.3L32 36.3L35.8 36.3L39.5 36.4L43 36.4L46.3 36.4L49.3 36.4L51.9 36.4L54.2 36.5L56.1 36.5L57.6 36.5L58.7 36.6L59.5 36.6L60 36.6L60.2 36.7M3.8 36.7L3.5 35.1L3.3 33.4M4.9 36.6L4.6 34.8L4.4 33M6.4 36.5L6.1 34.6L5.9 32.7M11.2 36.5L10.9 34.4L10.7 32.3M14.7 36.4L14.5 34.3L14.3 32.1M23.2 36.4L23 34.1L23 31.8M28.2 36.3L28.2 34.1L28.1 31.8M38.1 36.3L38.2 34.1L38.2 31.8M43 36.4L43.2 34.1L43.3 31.9M51 36.4L51.2 34.3L51.4 32.2M54.2 36.5L54.5 34.4L54.7 32.4M58.4 36.6L58.7 34.7L58.9 32.9M59.5 36.6L59.8 34.9L60 33.1M3.3 33.4L3.5 33.3L4 33.1L4.7 32.9L5.9 32.7L7.4 32.6L9.3 32.4L11.7 32.3L14.3 32.1L17.4 32L20.7 31.9L24.3 31.8L28.1 31.8L32 31.8L35.9 31.8L39.7 31.8L43.3 31.9L46.6 32L49.7 32.1L52.3 32.3L54.7 32.4L56.6 32.6L58.1 32.7L59.3 32.9L60 33.1L60.5 33.3L60.7 33.4M3.4 33.3L3.3 31.6L3.3 30M4 33.1L3.8 31.3L3.8 29.6M6.8 32.6L6.7 30.7L6.7 28.7M9.3 32.4L9.2 30.4L9.2 28.3M16.2 32L16.1 29.8L16.1 27.7M20.7 31.9L20.7 29.6L20.7 27.4M30.5 31.8L30.5 29.5L30.5 27.2M35.9 31.8L35.9 29.5L35.9 27.2M45.4 32L45.4 29.7L45.4 27.5M49.7 32.1L49.7 30L49.7 27.8M55.9 32.5L56 30.5L56 28.5M58.1 32.7L58.2 30.8L58.2 28.9M60.4 33.2L60.5 31.5L60.5 29.7M60.7 33.4L60.8 31.8L60.8 30.2M3.2 30.2L3.4 29.9L3.8 29.6L4.6 29.2L5.8 28.9L7.3 28.6L9.2 28.3L11.6 28.1L14.3 27.8L17.3 27.6L20.7 27.4L24.3 27.3L28.1 27.2L32 27.2L35.9 27.2L39.7 27.3L43.3 27.4L46.7 27.6L49.7 27.8L52.4 28.1L54.8 28.3L56.7 28.6L58.2 28.9L59.4 29.2L60.2 29.6L60.6 29.9L60.8 30.2M3.2 30.2L3.3 28.5L3.5 26.9M4.3 29.4L4.4 27.6L4.6 25.8M5.8 28.9L5.9 27L6.1 25.2M10.6 28.2L10.7 26.1L10.9 24.1M14.3 27.8L14.3 25.7L14.5 23.6M22.9 27.3L22.9 25.1L23 22.9M28.1 27.2L28.1 24.9L28.2 22.7M38.3 27.2L38.2 25L38.2 22.8M43.3 27.4L43.3 25.2L43.2 23M51.5 28L51.4 25.9L51.2 23.8M54.8 28.3L54.7 26.3L54.5 24.3M59 29.1L58.9 27.3L58.7 25.5M60.2 29.6L60.1 27.8L59.9 26.1M3.5 26.9L3.6 26.5L4.1 26.1L4.9 25.6L6.1 25.2L7.6 24.8L9.5 24.3L11.8 23.9L14.5 23.6L17.5 23.3L20.8 23L24.4 22.8L28.2 22.7L32 22.7L35.8 22.7L39.6 22.8L43.2 23L46.5 23.3L49.5 23.6L52.2 23.9L54.5 24.3L56.4 24.8L57.9 25.2L59.1 25.6L59.9 26.1L60.4 26.5L60.5 26.9M3.6 26.7L3.8 25.1L4.2 23.5M4.1 26.1L4.4 24.4L4.8 22.7M7 24.9L7.2 23.1L7.6 21.3M9.5 24.3L9.8 22.4L10.1 20.5M16.3 23.4L16.5 21.3L16.8 19.3M20.8 23L21 20.9L21.2 18.9M30.5 22.7L30.6 20.5L30.6 18.5M35.8 22.7L35.8 20.6L35.7 18.5M45.3 23.2L45.1 21.1L44.9 19.1M49.5 23.6L49.3 21.5L49 19.6M55.7 24.6L55.5 22.7L55.1 20.9M57.9 25.2L57.6 23.4L57.3 21.6M60.2 26.3L59.9 24.7L59.6 23.1M60.5 26.9M4.3 23.3L4.8 22.7L5.6 22.2L6.7 21.6L8.2 21.1L10.1 20.5L12.4 20L15 19.6L17.9 19.2L21.2 18.9L24.6 18.6L28.3 18.5L32 18.4L35.7 18.5L39.4 18.6L42.8 18.9L46.1 19.2L49 19.6L51.6 20L53.9 20.5L55.8 21.1L57.3 21.6L58.4 22.2L59.2 22.7L59.7 23.3M5.2 22.4L5.7 20.7L6.3 19.2M6.7 21.6L7.2 19.9L7.7 18.3M11.5 20.2L11.9 18.4L12.3 16.6M15 19.6L15.3 17.7L15.7 15.9M23.3 18.7L23.5 16.8L23.7 14.9M28.3 18.5L28.4 16.5L28.5 14.7M38 18.6L37.9 16.6L37.7 14.8M42.8 18.9L42.6 16.9L42.3 15.1M50.7 19.9L50.3 18L49.9 16.2M53.9 20.5L53.5 18.7L53 17M58 22L57.6 20.3L57 18.7M59.2 22.7L58.8 21.1L58.2 19.6M5.3 20.2L5.8 19.6L6.6 18.9L7.7 18.3L9.2 17.6L11 17L13.2 16.4L15.7 15.9L18.6 15.5L21.7 15.1L25 14.8L28.5 14.7L32 14.6L35.5 14.7L39 14.8L42.3 15.1L45.4 15.5L48.3 15.9L50.8 16.4L53 17L54.8 17.6L56.3 18.3L57.4 18.9L58.2 19.6L58.7 20.2M5.2 20.4L5.8 19M5.8 19.6L6.4 18.1L7.1 16.6M8.6 17.9L9.2 16.3L9.9 14.8M11 17L11.6 15.4L12.2 13.8M17.5 15.6L17.9 13.9L18.3 12.3M21.7 15.1L22 13.4L22.3 11.8M30.6 14.6L30.7 12.9L30.7 11.3M35.5 14.7L35.4 12.9L35.3 11.3M44.3 15.3L43.9 13.6L43.5 12M48.3 15.9L47.8 14.2L47.3 12.7M54.1 17.4L53.5 15.8L52.9 14.2M56.3 18.3L55.6 16.7L55 15.2M58.6 20L57.9 18.5L57.2 17.1M6.6 17.3L7.1 16.6L7.9 15.9L9 15.2L10.5 14.5L12.2 13.8L14.3 13.2L16.7 12.7L19.4 12.2L22.3 11.8L25.4 11.5L28.7 11.3L32 11.2L35.3 11.3L38.6 11.5L41.7 11.8L44.6 12.2L47.3 12.7L49.7 13.2L51.8 13.8L53.5 14.5L55 15.2L56.1 15.9L56.9 16.6L57.4 17.3M7.6 16.2L8.4 14.8L9.2 13.5M9 15.2L9.8 13.8L10.6 12.5M13.5 13.4L14.2 12L14.9 10.7M16.7 12.7L17.3 11.2L17.9 9.8M24.2 11.6L24.5 10.1L24.8 8.7M28.7 11.3L28.8 9.8L28.9 8.5M37.4 11.4L37.1 9.9L36.9 8.6M41.7 11.8L41.3 10.3L40.9 8.9M48.8 13L48.2 11.5L47.5 10.2M51.8 13.8L51.1 12.4L50.3 11.1M55.7 15.6L54.9 14.2L54.1 12.9M56.9 16.6L56.1 15.3L55.3 14M8.7 14L9.5 13.2L10.6 12.5L12 11.8L13.7 11.1L15.6 10.4L17.9 9.8L20.4 9.3L23.1 8.9L25.9 8.6L28.9 8.5L32 8.4L35.1 8.5L38.1 8.6L40.9 8.9L43.6 9.3L46.1 9.8L48.4 10.4L50.3 11.1L52 11.8L53.4 12.5L54.5 13.2L55.3 14M8.7 14L9.6 12.8L10.6 11.7M11.4 12L12.3 10.8L13.2 9.7M13.7 11.1L14.5 9.8L15.3 8.7M19.4 9.5L20 8.3L20.6 7.2M23.1 8.9L23.5 7.7L23.9 6.6M30.8 8.4L30.9 7.2L30.9 6.1M35.1 8.5L34.9 7.2L34.8 6.2M42.6 9.2L42.1 8L41.6 6.9M46.1 9.8L45.5 8.6L44.8 7.5M51.4 11.5L50.6 10.3L49.7 9.1M53.4 12.5L52.5 11.3L51.6 10.1M55.6 14.5M10.6 11.7L11.4 10.9L12.4 10.1L13.7 9.4L15.3 8.7L17.1 8.1L19.2 7.5L21.5 7L23.9 6.6L26.5 6.4L29.2 6.2L32 6.1L34.8 6.2L37.5 6.4L40.1 6.6L42.5 7L44.8 7.5L46.9 8.1L48.7 8.7L50.3 9.4L51.6 10.1L52.6 10.9L53.4 11.7M11 11.2L12 10.1M12.4 10.1L13.4 9.1L14.4 8.2M16.4 8.3L17.2 7.3L18.1 6.5M19.2 7.5L19.9 6.6L20.6 5.7M25.5 6.4L25.9 5.5L26.2 4.7M29.2 6.2L29.4 5.2L29.5 4.4M36.5 6.3L36.2 5.3L36 4.5M40.1 6.6L39.6 5.7L39.2 4.9M46.1 7.9L45.4 6.9L44.6 6M48.7 8.7L47.8 7.7L46.9 6.8M52.3 10.6L51.3 9.6L50.3 8.6M53.4 11.7M13.4 8.9L14.4 8.2L15.6 7.5L17.1 6.8L18.7 6.2L20.6 5.7L22.6 5.2L24.8 4.9L27.1 4.6L29.5 4.4L32 4.4L34.5 4.4L36.9 4.6L39.2 4.9L41.4 5.2L43.4 5.7L45.3 6.2L46.9 6.8L48.4 7.5L49.6 8.2L50.6 8.9M15.1 7.8L16.1 7L17.1 6.2M17.1 6.8L18 6.1L18.9 5.4M21.8 5.4L22.5 4.7L23.1 4.1M24.8 4.9L25.3 4.2L25.8 3.6M31.1 4.4L31.1 3.7L31.2 3.2M34.5 4.4L34.3 3.8L34.1 3.2M40.6 5.1L40 4.4L39.5 3.8M43.4 5.7L42.7 5L42 4.4M47.9 7.2L46.9 6.5L45.9 5.8M49.6 8.2L48.6 7.4L47.5 6.6M16.5 6.6L17.6 6L18.9 5.4L20.4 4.8L22 4.4L23.8 3.9L25.8 3.6L27.8 3.4L29.9 3.2L32 3.2L34.1 3.2L36.2 3.4L38.2 3.6L40.2 3.9L42 4.4L43.6 4.8L45.1 5.4L46.4 6L47.5 6.6M16.5 6.6M19.8 5L20.7 4.5L21.6 4.1M22 4.4L22.8 3.9L23.5 3.5M27 3.4L27.4 3L27.8 2.7M29.9 3.2L30 2.8L30.2 2.5M35.4 3.3L35.2 2.8L34.9 2.5M38.2 3.6L37.8 3.1L37.3 2.8M43 4.7L42.2 4.1L41.4 3.7M45.1 5.4L44.2 4.8L43.2 4.4M20.8 4.4L22.1 3.9L23.5 3.5L25 3.1L26.7 2.8L28.4 2.6L30.2 2.5L32 2.4L33.8 2.5L35.6 2.6L37.3 2.8L39 3.1L40.5 3.5L41.9 3.9L43.2 4.4M20.8 4.4M24.4 3.2L25.1 3M26.7 2.8L27.2 2.6L27.6 2.4M31.3 2.4L31.4 2.2L31.4 2.1M33.8 2.5L33.6 2.3L33.5 2.1M38.3 3L37.8 2.7L37.2 2.6M40.5 3.5L39.8 3.2M26.2 2.7L27.6 2.4L29 2.3L30.5 2.1L32 2.1L33.5 2.1L35 2.3L36.4 2.4L37.8 2.7M32.4 2.1M36.4 2.4"/><path id="hb" d="M3.3 29.3M6.9 45.1L6.8 44.8M3.5 26.7L3.9 25.3M5.5 42.3L5.5 42L5.4 41.8L5.4 41.5M5.5 42.3L4.6 39.7M4.4 22.7L5.2 21.2M4.4 38.7L4.4 38.4L4.4 38.1L4.5 37.8M4.4 38.7L3.7 36L3.3 33.3M5.2 20.4L5.9 18.8L7 17.3M3.8 34.9L3.9 34.5L4 34.1L4.2 33.7M3.8 34.9L3.4 32.1L3.3 29.3L3.5 26.7M6.9 16.7L8 15.2L9.3 13.6M3.8 30.8L4 30.3L4.3 29.8L4.6 29.4M3.8 30.8L3.7 27.9L3.9 25.3L4.4 22.7M9.2 13.3L10.5 11.8L12.1 10.4M4.5 26.5L4.8 26L5.2 25.5L5.6 24.9M4.5 26.5L4.7 23.7L5.2 21.2L5.9 18.8M11.9 10.3L13.4 9L15.1 7.7M5.8 22.2L6.2 21.6L6.7 21.1L7.3 20.5M5.8 22.2L6.2 19.6L7 17.3L8 15.2M16.4 6.7L18.1 5.7M7.7 18L8.2 17.4L8.8 16.9L9.5 16.3M7.7 18L8.4 15.7L9.3 13.6L10.5 11.8M10.1 14.1L10.7 13.6L11.4 13L12.1 12.5M10.1 14.1L11 12.1L12.1 10.4L13.4 9M12.9 10.6L13.6 10.2L14.3 9.7L15 9.2M12.9 10.6L13.9 9L15.1 7.7L16.4 6.7M15.9 7.8L16.6 7.4L17.3 7L18.1 6.6M15.9 7.8L16.9 6.6L18.1 5.7M18.9 5.5L19.6 5.2L20.3 4.9L21 4.6M18.9 5.5L20 4.8M21.9 4L22.5 3.8L23.1 3.5L23.8 3.3M21.9 4M12.2 51.7M10.2 49.6L10.1 49.2M8.4 47.3L8.3 46.8L8.5 46.2M19 56.6M6.8 44.8L6.7 44.2L6.9 43.4L7.4 42.6M6.8 44.8L6.4 44L5.9 43.1L5.5 42.3M16.6 55.3L16.6 55.2L16.6 55.2L16.6 55.1M16.6 55.3L14.4 53.6L12.2 51.7L10.2 49.6M5.4 41.5L5.6 40.6L6 39.7L6.9 38.6M5.4 41.5L5 40.6L4.7 39.7L4.4 38.7M14.4 53.4L14.4 53.3L14.5 53.2L14.6 53.2M14.4 53.4L12.2 51.4L10.1 49.2L8.3 46.8M4.5 37.8L5 36.7L5.8 35.5L7 34.2M4.5 37.8L4.2 36.8L4 35.8L3.8 34.9M12.4 51.1L12.6 50.9L12.8 50.8L13 50.6M12.4 51.1L10.4 48.7L8.5 46.2L6.9 43.4M4.2 33.7L5 32.4L6.2 31L7.9 29.6M4.2 33.7L4.1 32.7L3.9 31.7L3.8 30.8M10.9 48.2L11.2 48L11.5 47.8L11.8 47.5M10.9 48.2L9.1 45.5L7.4 42.6L6 39.7M4.6 29.4L5.8 27.9L7.3 26.4L9.3 24.8M4.6 29.4L4.5 28.4L4.5 27.4L4.5 26.5M9.9 44.7L10.3 44.4L10.8 44.1L11.2 43.8M9.9 44.7L8.3 41.7L6.9 38.6L5.8 35.5M5.6 24.9L7.1 23.3L9.1 21.7L11.4 20.1M5.6 24.9L5.6 24L5.7 23.1L5.8 22.2M9.6 40.7L10.1 40.4L10.6 40L11.3 39.6M9.6 40.7L8.2 37.5L7 34.2L6.2 31M7.3 20.5L9.1 18.9L11.3 17.3L13.9 15.7M7.3 20.5L7.4 19.7L7.5 18.8L7.7 18M9.8 36.3L10.5 35.8L11.2 35.4L12 34.9M9.8 36.3L8.7 32.9L7.9 29.6L7.3 26.4M9.5 16.3L11.6 14.7L14 13.2L16.7 11.7M9.5 16.3L9.7 15.6L9.9 14.8L10.1 14.1M10.8 31.5L11.6 31L12.4 30.5L13.3 30M10.8 31.5L9.9 28L9.3 24.8L9.1 21.7M12.1 12.5L14.4 11.1L16.9 9.7L19.6 8.4M12.1 12.5L12.4 11.9L12.6 11.2L12.9 10.6M12.4 26.5L13.3 26L14.2 25.4L15.2 24.9M12.4 26.5L11.7 23.2L11.4 20.1L11.3 17.3M15 9.2L17.4 8L19.9 6.8L22.4 5.8M15 9.2L15.3 8.7L15.6 8.2L15.9 7.8M14.5 21.5L15.5 21L16.5 20.5L17.6 20M14.5 21.5L14.1 18.5L13.9 15.7L14 13.2M18.1 6.6L20.4 5.5L22.7 4.6L25 3.9M18.1 6.6L18.3 6.2L18.6 5.8L18.9 5.5M17 16.9L18.1 16.4L19.1 15.9L20.2 15.4M17 16.9L16.7 14.1L16.7 11.7L16.9 9.7M21 4.6L23.2 3.8L25.3 3.2L27.3 2.7M21 4.6L21.3 4.4L21.6 4.2L21.9 4M19.8 12.7L20.8 12.2L21.9 11.8L23 11.4M19.8 12.7L19.6 10.3L19.6 8.4L19.9 6.8M23.8 3.3L25.7 2.8L27.4 2.5L29.1 2.2M23.8 3.3L24 3.2L24.3 3.2M22.6 9.1L23.6 8.7L24.6 8.4L25.6 8M22.6 9.1L22.4 7.2L22.4 5.8L22.7 4.6M25.2 6.3L26.1 6L27 5.7L28 5.5M25.2 6.3L25 4.9L25 3.9L25.3 3.2M27.5 4.2L28.3 4L29.2 3.8L29.9 3.7M27.5 4.2L27.3 3.3L27.3 2.7L27.4 2.5M29.5 2.9L30.2 2.8L30.8 2.7L31.5 2.6M29.5 2.9L29.2 2.4L29.1 2.2M31 2.2L31.5 2.2L32 2.1L32.5 2.1M21.2 57.6L21.4 57.6M19 56.6L18.9 56.5L19.1 56.4L19.6 56.3M19 56.6L18.2 56.2L17.4 55.7L16.6 55.3M16.6 55.1L16.9 55L17.4 54.7L18.1 54.5M16.6 55.1L15.9 54.6L15.1 54L14.4 53.4M14.6 53.2L15.1 52.8L16 52.5L17.2 52M14.6 53.2L13.9 52.5L13.1 51.8L12.4 51.1M25.8 59M23.6 58.4L21.4 57.6L19.1 56.4M13 50.6L13.8 50.1L15.1 49.5L16.7 48.9M13 50.6L12.3 49.8L11.6 49L10.9 48.2M23.8 58.4L24 58.4L24.1 58.4L24.3 58.4M23.8 58.4L21.8 57.6L19.6 56.3L17.4 54.7M11.8 47.5L13.1 46.8L14.7 46L16.8 45.1M11.8 47.5L11.2 46.6L10.5 45.7L9.9 44.7M22.4 57.5L22.6 57.4L22.9 57.4L23.2 57.3M22.4 57.5L20.3 56.1L18.1 54.5L16 52.5M11.2 43.8L12.9 42.9L15 41.8L17.5 40.7M11.2 43.8L10.6 42.8L10.1 41.8L9.6 40.7M21.3 55.9L21.7 55.8L22.1 55.7L22.6 55.6M21.3 55.9L19.2 54.1L17.2 52L15.1 49.5M11.3 39.6L13.4 38.4L15.9 37.2L18.9 35.8M11.3 39.6L10.8 38.5L10.3 37.4L9.8 36.3M20.7 53.7L21.2 53.5L21.8 53.4L22.4 53.2M20.7 53.7L18.7 51.5L16.7 48.9L14.7 46M12 34.9L14.5 33.6L17.4 32.1L20.7 30.6M12 34.9L11.5 33.8L11.1 32.6L10.8 31.5M20.6 50.8L21.3 50.6L22 50.3L22.8 50.1M20.6 50.8L18.7 48.1L16.8 45.1L15 41.8M13.3 30L16.2 28.4L19.5 26.9L23 25.4M13.3 30L13 28.8L12.6 27.6L12.4 26.5M21 47.2L21.9 46.9L22.8 46.6L23.8 46.2M21 47.2L19.3 44.1L17.5 40.7L15.9 37.2M15.2 24.9L18.4 23.3L21.9 21.8L25.5 20.3M15.2 24.9L14.9 23.8L14.7 22.6L14.5 21.5M22.1 43L23.1 42.6L24.2 42.2L25.3 41.8M22.1 43L20.4 39.5L18.9 35.8L17.4 32.1M17.6 20L20.9 18.4L24.5 17L28.1 15.6M17.6 20L17.4 18.9L17.2 17.9L17 16.9M23.7 38.2L24.9 37.7L26 37.2L27.2 36.8M23.7 38.2L22.2 34.4L20.7 30.6L19.5 26.9M20.2 15.4L23.6 14L27.1 12.7L30.5 11.6M20.2 15.4L20.1 14.4L19.9 13.5L19.8 12.7M25.8 33L27 32.5L28.3 32L29.5 31.5M25.8 33L24.3 29.1L23 25.4L21.9 21.8M23 11.4L26.2 10.2L29.4 9.2L32.5 8.3M23 11.4L22.8 10.6L22.7 9.8L22.6 9.1M28.1 27.7L29.4 27.2L30.7 26.7L32 26.2M28.1 27.7L26.8 23.9L25.5 20.3L24.5 17M25.6 8L28.6 7.1L31.5 6.4L34.2 5.8M25.6 8L25.4 7.4L25.3 6.8L25.2 6.3M30.6 22.5L31.9 22L33.2 21.6L34.4 21.2M30.6 22.5L29.3 18.9L28.1 15.6L27.1 12.7M28 5.5L30.6 4.8L33.1 4.3L35.4 4M28 5.5L27.8 5L27.6 4.6L27.5 4.2M33 17.7L34.2 17.3L35.4 16.9L36.6 16.5M33 17.7L31.7 14.5L30.5 11.6L29.4 9.2M29.9 3.7L32.2 3.3L34.2 3L36.1 2.9M29.9 3.7L29.8 3.4L29.6 3.1L29.5 2.9M35.1 13.4L36.3 13.1L37.3 12.8L38.4 12.6M35.1 13.4L33.8 10.7L32.5 8.3L31.5 6.4M31.5 2.6L33.3 2.4L34.9 2.4L36.3 2.5M31.5 2.6L31.3 2.4L31.1 2.3L31 2.2M36.9 9.9L37.9 9.7L38.8 9.5L39.7 9.3M36.9 9.9L35.5 7.6L34.2 5.8L33.1 4.3M32.5 2.1L33.9 2.2M32.5 2.1L32.3 2.1M38.2 7.1L39 7L39.8 6.9L40.5 6.8M38.2 7.1L36.7 5.4L35.4 4L34.2 3M38.9 5.1L39.6 5.1L40.2 5L40.8 5M38.9 5.1L37.4 3.8L36.1 2.9L34.9 2.4M39.2 3.8L39.7 3.8L40.2 3.8L40.6 3.8M39.2 3.8L37.6 2.9L36.3 2.5M38.9 3.1L39.3 3.1L39.7 3.2L40 3.2M38.9 3.1L37.4 2.6M25.8 59L26.1 59.1L26.7 59.1L27.5 59M25.8 59L25.1 58.9L24.5 58.7L23.8 58.4M24.3 58.4L25.1 58.4L26.1 58.2L27.3 58.1M24.3 58.4L23.7 58.1L23 57.8L22.4 57.5M23.2 57.3L24.4 57.1L25.8 56.8L27.6 56.4M23.2 57.3L22.6 56.9L22 56.4L21.3 55.9M22.6 55.6L24.2 55.2L26.1 54.7L28.3 54.1M22.6 55.6L22 55L21.3 54.4L20.7 53.7M30.3 59.6L30.5 59.7M28.8 59.5L27.5 59L26.1 58.2M22.4 53.2L24.5 52.6L26.9 51.8L29.6 51M22.4 53.2L21.8 52.4L21.2 51.6L20.6 50.8M29.6 59.4L30 59.4L30.3 59.4L30.7 59.4M29.6 59.4L28.6 58.9L27.3 58.1L25.8 56.8M22.8 50.1L25.4 49.2L28.3 48.3L31.4 47.2M22.8 50.1L22.2 49.2L21.6 48.2L21 47.2M29.9 58.7L30.4 58.7L30.9 58.6L31.4 58.5M29.9 58.7L28.8 57.8L27.6 56.4L26.1 54.7M23.8 46.2L26.8 45.2L30.1 44L33.6 42.8M23.8 46.2L23.2 45.2L22.7 44.1L22.1 43M30.6 57.4L31.2 57.3L31.9 57.1L32.6 56.9M30.6 57.4L29.6 56L28.3 54.1L26.9 51.8M25.3 41.8L28.7 40.5L32.3 39.2L36.1 37.8M25.3 41.8L24.7 40.6L24.2 39.4L23.7 38.2M31.8 55.4L32.6 55.1L33.4 54.9L34.2 54.7M31.8 55.4L30.8 53.4L29.6 51L28.3 48.3M27.2 36.8L31 35.4L34.8 34L38.6 32.6M27.2 36.8L26.7 35.5L26.2 34.3L25.8 33M33.5 52.6L34.4 52.3L35.4 52L36.4 51.7M33.5 52.6L32.6 50.1L31.4 47.2L30.1 44M29.5 31.5L33.4 30.1L37.3 28.7L41 27.4M29.5 31.5L29.1 30.2L28.6 28.9L28.1 27.7M35.7 49L36.7 48.7L37.8 48.3L38.8 47.9M35.7 49L34.7 46.1L33.6 42.8L32.3 39.2M32 26.2L35.9 24.9L39.6 23.6L43.1 22.5M32 26.2L31.5 25L31.1 23.7L30.6 22.5M38.1 44.8L39.3 44.4L40.4 44L41.5 43.6M38.1 44.8L37.2 41.5L36.1 37.8L34.8 34M34.4 21.2L38.1 20L41.6 18.9L44.7 18M34.4 21.2L33.9 20L33.5 18.8L33 17.7M40.8 40.1L41.9 39.7L43.1 39.2L44.2 38.8M40.8 40.1L39.8 36.5L38.6 32.6L37.3 28.7M36.6 16.5L40 15.6L43.1 14.8L45.8 14.1M36.6 16.5L36.1 15.5L35.6 14.4L35.1 13.4M43.4 35.1L44.5 34.7L45.7 34.2L46.7 33.8M43.4 35.1L42.3 31.3L41 27.4L39.6 23.6M38.4 12.6L41.4 11.8L44.1 11.3L46.4 10.9M38.4 12.6L37.9 11.6L37.4 10.7L36.9 9.9M45.7 30L46.8 29.6L47.9 29.2L48.9 28.8M45.7 30L44.5 26.2L43.1 22.5L41.6 18.9M39.7 9.3L42.3 8.9L44.5 8.6L46.3 8.4M39.7 9.3L39.2 8.5L38.7 7.8L38.2 7.1M47.7 25.1L48.7 24.8L49.6 24.4L50.5 24.1M47.7 25.1L46.3 21.5L44.7 18L43.1 14.8M40.5 6.8L42.6 6.6L44.4 6.5L45.8 6.5M40.5 6.8L40 6.2L39.4 5.6L38.9 5.1M49.1 20.6L50 20.3L50.8 20.1L51.5 19.8M49.1 20.6L47.5 17.2L45.8 14.1L44.1 11.3M40.8 5L42.4 5L43.7 5.1L44.8 5.2M40.8 5L40.3 4.5L39.7 4.1L39.2 3.8M50 16.6L50.7 16.4L51.3 16.3L51.9 16.1M50 16.6L48.2 13.6L46.4 10.9L44.5 8.6M40.6 3.8L41.8 4L42.7 4.2M40.6 3.8L40 3.5L39.5 3.3L38.9 3.1M50.2 13.2L50.7 13.1L51.3 13.1L51.7 13M50.2 13.2L48.3 10.6L46.3 8.4L44.4 6.5M40 3.2M40 3.2L39.4 3.1M49.8 10.5L50.2 10.5L50.6 10.5L51 10.4M49.8 10.5L47.8 8.3L45.8 6.5L43.7 5.1M48.9 8.4L49.2 8.4L49.5 8.4L49.7 8.5M48.9 8.4L46.8 6.6L44.8 5.2L42.7 4.2M47.6 6.8L47.8 6.9L48 6.9L48.1 7M47.6 6.8L45.5 5.5M30.5 59.7L31.4 59.7L32.4 59.6L33.7 59.5M30.5 59.7L30.2 59.6L30 59.6L29.6 59.4M30.7 59.4L32 59.2L33.5 59L35.2 58.6M30.7 59.4L30.5 59.2L30.2 59L29.9 58.7M31.4 58.5L33.1 58.1L35.1 57.7L37.2 57.1M31.4 58.5L31.1 58.2L30.9 57.8L30.6 57.4M32.6 56.9L34.8 56.4L37.1 55.7L39.6 54.9M32.6 56.9L32.3 56.5L32.1 55.9L31.8 55.4M34.2 54.7L36.9 53.9L39.6 53L42.3 52M34.2 54.7L34 54L33.8 53.3L33.5 52.6M34.8 59.5L35.2 59.5L35.7 59.4L36.1 59.3M34.8 59.5L35.1 59.2L35.2 58.6L35.1 57.7M36.4 51.7L39.3 50.6L42.3 49.5L45.3 48.3M36.4 51.7L36.2 50.8L35.9 50L35.7 49M36.7 58.9L37.2 58.8L37.8 58.7L38.4 58.5M36.7 58.9L37 58.2L37.2 57.1L37.1 55.7M38.8 47.9L42.1 46.7L45.2 45.5L48.2 44.2M38.8 47.9L38.6 46.9L38.4 45.9L38.1 44.8M39 57.6L39.6 57.4L40.3 57.2L41 57M39 57.6L39.4 56.5L39.6 54.9L39.6 53M41.5 43.6L44.8 42.3L48 41L50.8 39.7M41.5 43.6L41.3 42.5L41 41.3L40.8 40.1M41.7 55.7L42.4 55.4L43.2 55.1L43.9 54.8M41.7 55.7L42.1 54L42.3 52L42.3 49.5M44.2 38.8L47.5 37.5L50.5 36.2L53.1 35M44.2 38.8L44 37.6L43.7 36.4L43.4 35.1M44.6 53L45.4 52.7L46.2 52.3L47 52M44.6 53L45.1 50.9L45.3 48.3L45.2 45.5M46.7 33.8L49.8 32.6L52.6 31.4L54.9 30.3M46.7 33.8L46.4 32.5L46.1 31.3L45.7 30M47.7 49.7L48.5 49.3L49.3 48.9L50.1 48.5M47.7 49.7L48.1 47.1L48.2 44.2L48 41M48.9 28.8L51.7 27.8L54.1 26.8L56 25.9M48.9 28.8L48.5 27.6L48.1 26.3L47.7 25.1M50.6 45.9L51.5 45.4L52.2 45L53 44.6M50.6 45.9L50.9 42.9L50.8 39.7L50.5 36.2M50.5 24.1L52.9 23.3L54.9 22.5L56.5 21.9M50.5 24.1L50.1 22.9L49.6 21.8L49.1 20.6M53.3 41.6L54.1 41.2L54.8 40.8L55.5 40.4M53.3 41.6L53.4 38.4L53.1 35L52.6 31.4M51.5 19.8L53.5 19.2L55.1 18.7L56.3 18.3M51.5 19.8L51 18.7L50.5 17.7L50 16.6M55.6 37.2L56.2 36.8L56.8 36.4L57.4 36M55.6 37.2L55.4 33.8L54.9 30.3L54.1 26.8M51.9 16.1L53.5 15.7L54.7 15.5L55.5 15.3M51.9 16.1L51.4 15.1L50.8 14.2L50.2 13.2M57.3 32.7L57.8 32.4L58.3 32.1L58.7 31.7M57.3 32.7L56.8 29.3L56 25.9L54.9 22.5M51.7 13L52.9 12.8L53.7 12.7L54.2 12.7M51.7 13L51.1 12.1L50.5 11.3L49.8 10.5M58.3 28.5L58.7 28.2L59 27.9L59.3 27.7M58.3 28.5L57.5 25.2L56.5 21.9L55.1 18.7M51 10.4L51.8 10.5L52.3 10.5M51 10.4L50.3 9.7L49.6 9L48.9 8.4M58.6 24.5L58.9 24.3L59.1 24.1L59.3 23.9M58.6 24.5L57.6 21.4L56.3 18.3L54.7 15.5M49.7 8.5L50.2 8.6M49.7 8.5L49 7.9L48.3 7.3L47.6 6.8M58.3 20.9L58.5 20.8L58.6 20.7L58.7 20.6M58.3 20.9L57 18L55.5 15.3L53.7 12.7M48.1 7M48.1 7L47.4 6.6M57.4 17.8L57.5 17.7L57.5 17.7L57.5 17.6M57.4 17.8L55.9 15.2L54.2 12.7L52.3 10.5M56.1 15.1M56.1 15.1L54.4 12.8M36.7 59.3L38 59.1M34.7 59.6L34.8 59.5M36.1 59.3L37.6 59L39.2 58.7L40.8 58.2M36.1 59.3L36.3 59.2L36.5 59.1L36.7 58.9M38.4 58.5L40.2 58L42 57.4L43.8 56.7M38.4 58.5L38.6 58.3L38.8 58L39 57.6M41 57L43 56.3L45.1 55.4L47 54.5M41 57L41.2 56.6L41.5 56.2L41.7 55.7M43.9 54.8L46.2 53.9L48.3 52.8L50.2 51.8M43.9 54.8L44.2 54.3L44.4 53.7L44.6 53M39.5 58.7L40.8 58.2L42 57.4M47 52L49.3 50.8L51.4 49.7L53.2 48.5M47 52L47.3 51.2L47.5 50.5L47.7 49.7M40.9 58.3L41.4 58.1L41.9 57.9L42.4 57.8M40.9 58.3L42.4 57.6L43.8 56.7L45.1 55.4M50.1 48.5L52.3 47.3L54.3 46L55.9 44.8M50.1 48.5L50.3 47.7L50.5 46.8L50.6 45.9M44.1 57L44.6 56.7L45.1 56.5L45.7 56.2M44.1 57L45.6 55.9L47 54.5L48.3 52.8M53 44.6L55 43.3L56.7 42.1L58 40.9M53 44.6L53.1 43.6L53.3 42.6L53.3 41.6M47.3 55L47.9 54.7L48.4 54.4L48.9 54.1M47.3 55L48.9 53.5L50.2 51.8L51.4 49.7M55.5 40.4L57.2 39.2L58.6 38L59.6 36.9M55.5 40.4L55.5 39.3L55.6 38.3L55.6 37.2M50.5 52.5L51.1 52.1L51.5 51.8L52 51.4M50.5 52.5L52 50.6L53.2 48.5L54.3 46M57.4 36L58.8 34.9L59.8 33.9L60.5 33M57.4 36L57.4 34.9L57.3 33.8L57.3 32.7M53.5 49.5L54 49.1L54.4 48.7L54.8 48.3M53.5 49.5L54.8 47.3L55.9 44.8L56.7 42.1M58.7 31.7L59.7 30.8L60.4 30L60.7 29.3M58.7 31.7L58.6 30.7L58.5 29.6L58.3 28.5M56.1 46.1L56.5 45.7L56.8 45.3L57.1 44.9M56.1 46.1L57.2 43.6L58 40.9L58.6 38M59.3 27.7L60 27L60.3 26.4M59.3 27.7L59.1 26.6L58.9 25.6L58.6 24.5M58.2 42.5L58.4 42.1L58.6 41.7L58.8 41.3M58.2 42.5L59 39.8L59.6 36.9L59.8 33.9M59.3 23.9L59.7 23.4L59.7 23M59.3 23.9L59 22.9L58.7 21.9L58.3 20.9M59.7 38.7L59.8 38.4L59.9 38M59.7 38.7L60.2 35.9L60.5 33L60.4 30M58.7 20.6L58.8 20.3M58.7 20.6L58.3 19.6L57.9 18.7L57.4 17.8M60.5 35M60.5 35L60.8 32.2L60.7 29.3L60.3 26.4M57.5 17.6M57.5 17.6L57.1 16.8L56.6 15.9L56.1 15.1M59.7 23M40.9 58.3M42.4 57.8M42.4 57.8L43 57.5L43.5 57.3L44.1 57M45.7 56.2L47.1 55.4M45.7 56.2L46.2 55.8L46.8 55.4L47.3 55M48.9 54.1L50.3 53.1L51.5 52.1M48.9 54.1L49.5 53.6L50 53.1L50.5 52.5M52 51.4L53.2 50.3M52 51.4L52.5 50.8L53 50.2L53.5 49.5M54.8 48.3L55.7 47.2M54.8 48.3L55.2 47.6L55.7 46.9L56.1 46.1M51.5 52.1M57.1 44.9L57.8 43.8M57.1 44.9L57.5 44.1L57.8 43.3L58.2 42.5M58.8 41.3L59.1 40.5L59.4 39.6L59.7 38.7M60.4 35.9L60.5 35"/><path id="dk" d="M20.8 4.4L22.1 3.9L23.5 3.5L25.1 3.1L26.7 2.8L28.4 2.6L30.2 2.4L32 2.4L33.8 2.4L35.6 2.6L37.3 2.8L38.9 3.1L40.5 3.5L41.9 3.9L43.2 4.4M12.8 9.4L13.8 8.7L15.1 8L16.6 7.3L18.3 6.7L20.2 6.1L22.3 5.7L24.6 5.3L27 5L29.5 4.8L32 4.8L34.5 4.8L37 5L39.4 5.3L41.7 5.7L43.8 6.1L45.7 6.7L47.4 7.3L48.9 8L50.2 8.7L51.2 9.4M8.2 14.8L9 14.1L10.1 13.4L11.5 12.6L13.2 12L15.2 11.3L17.5 10.7L20 10.2L22.8 9.8L25.8 9.5L28.8 9.4L32 9.3L35.2 9.4L38.2 9.5L41.2 9.8L44 10.2L46.5 10.7L48.8 11.3L50.8 12L52.5 12.6L53.9 13.4L55 14.1L55.8 14.8M4.9 21.3L5.4 20.7L6.2 20.1L7.3 19.5L8.8 18.9L10.7 18.3L12.9 17.7L15.4 17.2L18.3 16.8L21.5 16.5L24.8 16.2L28.4 16L32 16L35.6 16L39.2 16.2L42.5 16.5L45.7 16.8L48.6 17.2L51.1 17.7L53.3 18.3L55.2 18.9L56.7 19.5L57.8 20.1L58.6 20.7L59.1 21.3M3.5 26.6L3.7 26.2L4.2 25.7L5 25.3L6.1 24.8L7.6 24.4L9.5 23.9L11.8 23.5L14.5 23.2L17.5 22.8L20.9 22.6L24.4 22.4L28.2 22.3L32 22.2L35.8 22.3L39.6 22.4L43.1 22.6L46.5 22.8L49.5 23.2L52.2 23.5L54.5 23.9L56.4 24.4L57.9 24.8L59 25.3L59.8 25.7L60.3 26.2L60.5 26.6M3.2 31.4L3.4 31.1L3.8 30.9L4.6 30.6L5.8 30.4L7.3 30.1L9.2 29.8L11.6 29.6L14.3 29.4L17.3 29.2L20.7 29.1L24.3 29L28.1 28.9L32 28.9L35.9 28.9L39.7 29L43.3 29.1L46.7 29.2L49.7 29.4L52.4 29.6L54.8 29.8L56.7 30.1L58.2 30.4L59.4 30.6L60.2 30.9L60.6 31.1L60.8 31.4M3.7 36L3.8 36L4.3 35.9L5.1 35.8L6.3 35.8L7.8 35.7L9.7 35.7L12 35.6L14.6 35.5L17.6 35.5L20.9 35.5L24.5 35.4L28.2 35.4L32 35.4L35.8 35.4L39.5 35.4L43.1 35.5L46.4 35.5L49.4 35.5L52 35.6L54.3 35.7L56.2 35.7L57.7 35.8L58.9 35.8L59.7 35.9L60.2 36L60.3 36M5 40.9L5.2 41L5.7 41.2L6.5 41.3L7.7 41.4L9.1 41.6L11 41.7L13.2 41.8L15.7 41.9L18.5 42L21.6 42.1L25 42.1L28.4 42.2L32 42.2L35.6 42.2L39 42.1L42.4 42.1L45.5 42L48.3 41.9L50.8 41.8L53 41.7L54.9 41.6L56.3 41.4L57.5 41.3L58.3 41.2L58.8 41L59 40.9M7.7 46.3L7.9 46.6L8.5 46.9L9.3 47.2L10.4 47.5L11.8 47.8L13.5 48.1L15.4 48.3L17.7 48.6L20.2 48.8L23 48.9L25.9 49L28.9 49.1L32 49.1L35.1 49.1L38.1 49L41 48.9L43.8 48.8L46.3 48.6L48.6 48.3L50.5 48.1L52.2 47.8L53.6 47.5L54.7 47.2L55.5 46.9L56.1 46.6L56.3 46.3M12.6 52.2L13.2 52.6L14 53L14.9 53.4L16.1 53.7L17.5 54.1L19.2 54.4L21 54.7L22.9 54.9L25.1 55.1L27.3 55.3L29.6 55.3L32 55.4L34.4 55.3L36.7 55.3L38.9 55.1L41.1 54.9L43 54.7L44.8 54.4L46.5 54.1L47.9 53.7L49.1 53.4L50 53L50.8 52.6L51.4 52.2M19.9 57L20.7 57.4L21.5 57.7L22.5 57.9L23.6 58.2L24.9 58.4L26.2 58.6L27.6 58.8L29 58.9L30.5 58.9L32 59L33.5 58.9L35 58.9L36.4 58.8L37.8 58.6L39.1 58.4L40.4 58.2L41.5 57.9L42.5 57.7L43.3 57.4L44.1 57"/><path id="lg" d="M32 59.7M27 59.3L26.1 59M29.8 59.6L29.4 59.4M32.9 59.6L33.1 59.5M23.4 58.4L24.2 58.6L25.2 58.8L26.2 59L27.2 59.2L28.4 59.3L29.6 59.4L30.8 59.5L32 59.5L33.2 59.5L34.4 59.4L35.6 59.3L36.8 59.2L37.8 59L38.8 58.8L39.8 58.6L40.6 58.4M21.1 57.6M25.1 58.8L23.9 58.3M28.1 59.3L27.4 58.9M37.1 59.1L38 58.7M21.1 57.5L21.9 57.8L22.9 58.1L23.9 58.3L25.1 58.6L26.4 58.7L27.7 58.9L29.1 59L30.5 59.1L32 59.1L33.5 59.1L34.9 59L36.3 58.9L37.6 58.7L38.9 58.6L40.1 58.3L41.1 58.1L42.1 57.8L42.9 57.5M28.1 58.9L27.4 58.3M31.6 59.1L31.5 58.5M36.9 58.8L37.6 58.2M18.7 56.4L19.5 56.8L20.4 57.1L21.5 57.4L22.7 57.7L24.1 57.9L25.5 58.1L27 58.3L28.7 58.4L30.3 58.5L32 58.5L33.7 58.5L35.3 58.4L37 58.3L38.5 58.1L39.9 57.9L41.3 57.7L42.5 57.4L43.6 57.1L44.5 56.8L45.3 56.4M15.1 54.2L13.9 53.3M19.1 56.6L17.9 55.9L16.7 55.1L15.6 54.2M29.2 58.4L28.9 57.8L28.6 57.1L28.3 56.2M34.7 58.4L35 57.8L35.3 57.1L35.6 56.2M41.3 57.6L42.2 57L43.2 56.2L44.1 55.3M50.3 53.2M13.7 53.1L14.3 53.5L15 53.9L15.9 54.3L17.1 54.7L18.4 55L20 55.3L21.7 55.6L23.5 55.8L25.5 56L27.6 56.2L29.8 56.2L32 56.3L34.2 56.2L36.4 56.2L38.5 56L40.5 55.8L42.3 55.6L44 55.3L45.6 55L46.9 54.7L48.1 54.3L49 53.9L49.7 53.5L50.3 53.1M17.6 54.8L16.2 53.4M21.9 55.6L20.8 54.2M25.3 56L24.6 54.6M38.8 56L39.6 54.6M48.5 54.1L50 52.7M51.9 51.7M12.1 51.7L12.7 52.1L13.5 52.5L14.5 52.9L15.7 53.3L17.1 53.6L18.8 53.9L20.6 54.2L22.7 54.4L24.9 54.6L27.2 54.8L29.6 54.9L32 54.9L34.4 54.9L36.8 54.8L39.1 54.6L41.3 54.4L43.4 54.2L45.2 53.9L46.9 53.6L48.3 53.3L49.5 52.9L50.5 52.5L51.3 52.1L51.9 51.7M12 51.6L10.5 50.1M18.1 53.8L16.9 52.2M21.2 54.3L20.2 52.6M34.7 54.9L35 53.2M40.5 54.5L41.3 52.9M48.4 53.2L49.8 51.6M10.6 50.2L11.2 50.6L12 50.9L13 51.3L14.3 51.7L15.8 52L17.6 52.3L19.6 52.6L21.8 52.8L24.2 53L26.7 53.2L29.3 53.2L32 53.3L34.7 53.2L37.3 53.2L39.8 53L42.2 52.8L44.4 52.6L46.4 52.3L48.2 52L49.7 51.7L51 51.3L52 50.9L52.8 50.6L53.4 50.2M12.1 51L10.9 49.5L9.8 47.8M16.2 52.1L15.2 50.5L14.2 48.8M22.7 52.9L22 51.3L21.4 49.5M28.6 53.2L28.4 51.6L28.1 49.8M34.9 53.2L35.1 51.6L35.3 49.8M40.8 52.9L41.4 51.3L42 49.5M44.4 52.6L45.2 51L46 49.2M52.4 50.8L53.6 49.3L54.8 47.6M8 46.8L8.3 47.1L8.8 47.5L9.7 47.8L10.7 48.1L12.1 48.4L13.8 48.7L15.7 49L18 49.2L20.4 49.4L23.1 49.6L26 49.7L29 49.8L32 49.8L35 49.8L38 49.7L40.9 49.6L43.6 49.4L46 49.2L48.3 49L50.2 48.7L51.9 48.4L53.3 48.1L54.3 47.8L55.2 47.5L55.7 47.1L56 46.8M5.6 42.4M10.2 48L9.4 46.4L8.5 44.8L7.8 43.2M14.6 48.8L13.8 47.2L13.1 45.5L12.5 43.7M27.3 49.7L27 48L26.8 46.2L26.6 44.3M31.6 49.8L31.6 48.1L31.6 46.3L31.5 44.3M35.9 49.8L36.1 48.1L36.3 46.2L36.5 44.3M48.9 48.9L49.6 47.3L50.3 45.5L51 43.7M54.5 47.7L55.3 46.2L56.2 44.7L56.9 43M55.8 47.1L56.7 45.6L57.5 44.2L58.2 42.6M5.6 42.5L5.9 42.7L6.4 42.9L7.2 43.1L8.3 43.2L9.8 43.4L11.6 43.6L13.7 43.8L16.2 43.9L18.9 44.1L22 44.2L25.2 44.2L28.6 44.3L32 44.3L35.4 44.3L38.8 44.2L42 44.2L45.1 44.1L47.8 43.9L50.3 43.8L52.4 43.6L54.2 43.4L55.7 43.2L56.8 43.1L57.6 42.9L58.1 42.7L58.4 42.5M5.6 42.5L5.1 41.1L4.6 39.6M7.6 43.1L7 41.5L6.5 39.9M9.3 43.4L8.7 41.7L8.2 40M11.6 43.6L11 41.9L10.6 40.1M23.9 44.2L23.6 42.3L23.4 40.4M39.4 44.2L39.7 42.4L39.9 40.4M47.3 43.9L47.8 42.2L48.2 40.3M53.3 43.5L53.8 41.8L54.3 40.1M56.9 43L57.5 41.5L58 39.9M4.6 39.6L4.8 39.7L5.3 39.8L6.1 39.9L7.2 40L8.7 40.1L10.6 40.1L12.8 40.2L15.3 40.3L18.2 40.3L21.4 40.4L24.8 40.4L28.4 40.4L32 40.5L35.6 40.4L39.2 40.4L42.6 40.4L45.8 40.3L48.7 40.3L51.2 40.2L53.4 40.1L55.3 40.1L56.8 40L57.9 39.9L58.7 39.8L59.2 39.7L59.4 39.6M5.2 39.8L4.7 38.1L4.4 36.3L4.1 34.5M9.2 40.1L8.8 38.1L8.4 36.2L8.1 34.1M11.8 40.2L11.4 38.2L11 36.1L10.8 34M14.9 40.3L14.5 38.2L14.2 36.1L14 33.9M22.6 40.4L22.4 38.2L22.3 36L22.1 33.7M38.5 40.4L38.6 38.2L38.8 36L38.9 33.7M49.1 40.3L49.5 38.2L49.8 36.1L50 33.9M54.8 40.1L55.2 38.1L55.6 36.2L55.9 34.1M58.8 39.8L59.3 38.1L59.7 36.3L59.9 34.5M3.5 34.7L3.6 34.6L4.1 34.5L4.9 34.4L6.1 34.3L7.6 34.2L9.5 34.1L11.8 34L14.5 33.9L17.5 33.8L20.8 33.7L24.4 33.7L28.2 33.6L32 33.6L35.8 33.6L39.6 33.7L43.2 33.7L46.5 33.8L49.5 33.9L52.2 34L54.5 34.1L56.4 34.2L57.9 34.3L59.1 34.4L59.9 34.5L60.4 34.6L60.5 34.7M4.7 34.4L4.5 32.3L4.4 30.1M6.1 34.3L5.9 32L5.8 29.8M9.2 34.1L9 31.7L8.9 29.3M15.3 33.9L15.1 31.3L15.1 28.7M21.2 33.7L21.1 31L21 28.4M27.9 33.6L27.8 30.9L27.8 28.2M40.2 33.7L40.3 31L40.3 28.3M50.7 33.9L50.8 31.4L50.9 28.8M57.5 34.3L57.7 32L57.7 29.7M59 34.4L59.2 32.2L59.2 30M60.3 34.6L60.5 32.6L60.5 30.5M3.2 30.9L3.4 30.6L3.8 30.3L4.6 30.1L5.8 29.8L7.3 29.5L9.2 29.2L11.6 29L14.3 28.7L17.3 28.5L20.7 28.4L24.3 28.3L28.1 28.2L32 28.2L35.9 28.2L39.7 28.3L43.3 28.4L46.7 28.5L49.7 28.7L52.4 29L54.8 29.2L56.7 29.5L58.2 29.8L59.4 30.1L60.2 30.3L60.6 30.6L60.8 30.9M4.6 30.1L4.7 27.9L4.9 25.8M12 28.9L12.1 26.4L12.2 24M19.2 28.4L19.3 25.8L19.4 23.3M31.1 28.2L31.1 25.5L31.1 22.8M40.4 28.3L40.3 25.6L40.3 23M50.8 28.8L50.8 26.3L50.6 23.9M55.2 29.3L55.1 26.9L54.9 24.5M58.2 29.8L58.1 27.5L57.9 25.3M59.5 30.1L59.5 28L59.3 25.8M60.6 30.6L60.6 28.6L60.4 26.6M3.5 27L3.6 26.6L4.1 26.2L4.9 25.8L6.1 25.3L7.6 24.9L9.5 24.5L11.8 24.1L14.5 23.7L17.5 23.4L20.8 23.2L24.4 23L28.2 22.9L32 22.8L35.8 22.9L39.6 23L43.2 23.2L46.5 23.4L49.5 23.7L52.2 24.1L54.5 24.5L56.4 24.9L57.9 25.3L59.1 25.8L59.9 26.2L60.4 26.6L60.5 27M4.3 26.1L4.5 24.5L4.9 22.9M6.1 25.3L6.4 23.6L6.7 21.9M10.5 24.3L10.7 22.5L11 20.7M17 23.5L17.2 21.5L17.4 19.6M21 23.1L21.2 21.2L21.3 19.3M27.6 22.9L27.7 20.9L27.8 18.9M39.9 23L39.8 21L39.7 19.1M52.9 24.2L52.7 22.3L52.4 20.6M57.5 25.2L57.3 23.5L56.9 21.8M60.5 27L60.3 25.5M4.2 23.6L4.7 23.1L5.5 22.5L6.6 22L8.2 21.4L10 20.9L12.3 20.4L14.9 20L17.9 19.6L21.1 19.3L24.6 19.1L28.3 18.9L32 18.9L35.7 18.9L39.4 19.1L42.9 19.3L46.1 19.6L49.1 20L51.7 20.4L54 20.9L55.8 21.4L57.4 22L58.5 22.5L59.3 23.1L59.8 23.6M6.9 21.9L7.4 19.8L8.1 17.9M16.2 19.8L16.5 17.5L17 15.4M20 19.4L20.3 17.1L20.6 14.9M31.6 18.9L31.6 16.5L31.7 14.3M46.7 19.7L46.3 17.4L45.9 15.2M54.8 21.1L54.3 19L53.7 17M59.1 22.9L58.5 20.9L57.9 19.1M5.4 19.9L5.9 19.3L6.7 18.6L7.8 18L9.3 17.3L11.1 16.7L13.3 16.1L15.8 15.6L18.6 15.2L21.7 14.8L25 14.5L28.5 14.4L32 14.3L35.5 14.4L39 14.5L42.3 14.8L45.4 15.2L48.2 15.6L50.7 16.1L52.9 16.7L54.7 17.3L56.2 18L57.3 18.6L58.1 19.3L58.6 19.9M6.1 19.1L7 17.1M7.3 18.3L8.2 16.2M10.1 17.1L10.9 14.9M12.6 16.3L13.4 14.1M17.4 15.4L18 13.1M28.2 14.4L28.4 12.1M34.9 14.3L34.7 12M39.2 14.5L38.9 12.2M47 15.4L46.4 13.2M56.1 18L55.2 15.9M57.5 18.8L56.6 16.7M58.4 19.6L57.5 17.6M6.3 18L6.8 17.3L7.6 16.6L8.7 15.9L10.2 15.2L11.9 14.6L14 13.9L16.5 13.4L19.2 12.9L22.1 12.5L25.3 12.2L28.6 12.1L32 12L35.4 12.1L38.7 12.2L41.9 12.5L44.8 12.9L47.5 13.4L50 13.9L52.1 14.6L53.8 15.2L55.3 15.9L56.4 16.6L57.2 17.3L57.7 18M6.6 17.5L7.2 16.3L8 15M12.2 14.5L12.8 13.1L13.5 11.8M15 13.7L15.6 12.3L16.2 11M18.4 13L18.8 11.6L19.3 10.3M24.2 12.3L24.4 10.9L24.7 9.5M39.1 12.3L38.9 10.8L38.6 9.5M48.9 13.7L48.4 12.3L47.8 11M53 14.9L52.3 13.5L51.7 12.2M56.5 16.6L55.8 15.3L55 14.1M8.2 14.8L9 14L10.1 13.3L11.5 12.5L13.2 11.9L15.2 11.2L17.5 10.6L20.1 10.2L22.8 9.8L25.8 9.5L28.9 9.3L32 9.2L35.1 9.3L38.2 9.5L41.2 9.8L43.9 10.2L46.5 10.6L48.8 11.2L50.8 11.9L52.5 12.5L53.9 13.3L55 14L55.8 14.8M10 13.4L11 11.9L12 10.5M16.2 11L17 9.4L17.8 8.1M25.8 9.5L26.2 7.9L26.5 6.6M37 9.4L36.7 7.8L36.4 6.5M44.7 10.3L44 8.8L43.3 7.4M47.9 11L47.1 9.5L46.3 8.1M51.9 12.3L50.9 10.8L49.9 9.4M53.8 13.2L52.8 11.7L51.8 10.4M56.2 15.2M10.3 11.9L11.1 11.2L12.2 10.4L13.5 9.7L15.1 9L16.9 8.3L19 7.8L21.3 7.3L23.8 6.9L26.5 6.6L29.2 6.4L32 6.4L34.8 6.4L37.5 6.6L40.2 6.9L42.7 7.3L45 7.8L47.1 8.3L48.9 9L50.5 9.7L51.8 10.4L52.9 11.2L53.7 11.9M15.5 8.8L16.3 7.9L17.1 7M21.6 7.2L22.1 6.3L22.6 5.5M27.2 6.5L27.4 5.6L27.7 4.8M41 7L40.5 6.1L40 5.3M44.4 7.6L43.8 6.7L43.2 5.9M52.6 11L51.7 10L50.8 9.1M13 9.3L14 8.5L15.2 7.8L16.7 7.2L18.4 6.5L20.3 6L22.4 5.5L24.6 5.2L27 4.9L29.5 4.7L32 4.7L34.5 4.7L37 4.9L39.4 5.2L41.6 5.5L43.7 6L45.6 6.5L47.3 7.2L48.8 7.8L50 8.5L51 9.3M12.9 9.3M15.6 7.7L16.7 6.7L17.9 5.9M26.1 5L26.6 4.1L27 3.4M39.4 5.2L38.9 4.3L38.3 3.6M49.3 8.1L48.1 7.1L46.9 6.3M16.5 6.6L17.6 6L18.9 5.4L20.4 4.8L22 4.4L23.8 3.9L25.8 3.6L27.8 3.4L29.9 3.2L32 3.2L34.1 3.2L36.2 3.4L38.2 3.6L40.2 3.9L42 4.4L43.6 4.8L45.1 5.4L46.4 6L47.5 6.6M16.7 6.5M20.1 4.9L20.9 4.4L21.7 4M24.6 3.8L25.1 3.4L25.6 3M37.1 3.5L36.8 3L36.4 2.7M45.2 5.4L44.3 4.9L43.4 4.5M20.6 4.4L21.9 3.9L23.4 3.5L25 3.1L26.6 2.8L28.4 2.6L30.2 2.5L32 2.5L33.8 2.5L35.6 2.6L37.4 2.8L39 3.1L40.6 3.5L42.1 3.9L43.4 4.4M25.2 3.1L25.8 2.8L26.3 2.7M34.3 2.5L34.1 2.3L33.9 2.2M40.8 3.6L40 3.2"/><path id="rbw" d="M32 59.7M27.6 59.4L27 59.3M30.8 59.7L30.7 59.6M34.3 59.6L34.6 59.5M38 59.1M26 59.1L26.9 59.2L27.8 59.4L28.8 59.5L29.9 59.6L30.9 59.6L32 59.6L33.1 59.6L34.1 59.6L35.2 59.5L36.2 59.4L37.1 59.2L38 59.1M25.5 58.9L24.8 58.8L24.1 58.5M28.8 59.5L28.5 59.3L28.1 59.2M32.6 59.6L32.7 59.5L32.8 59.3M36.4 59.3L36.9 59.2L37.3 59M40.2 58.5L41 58.2M22 57.9L22.8 58.2L23.7 58.4L24.7 58.7L25.8 58.9L26.9 59L28.1 59.2L29.4 59.3L30.7 59.3L32 59.3L33.3 59.3L34.6 59.3L35.9 59.2L37.1 59L38.2 58.9L39.3 58.7L40.3 58.4L41.2 58.2L42 57.9M22.5 58.1L21.6 57.8L20.8 57.4M26 58.9L25.4 58.6L24.9 58.3M30.4 59.3L30.3 59.1L30.1 58.8M35.1 59.2L35.4 59L35.7 58.7M39.3 58.7L40 58.4L40.6 58M43.3 57.4L44.2 57M19.5 56.9L20.3 57.2L21.2 57.5L22.2 57.8L23.4 58L24.6 58.3L26 58.5L27.4 58.6L28.9 58.7L30.4 58.8L32 58.8L33.6 58.8L35.1 58.7L36.6 58.6L38 58.5L39.4 58.3L40.6 58L41.8 57.8L42.8 57.5L43.7 57.2L44.5 56.9M19.4 56.8L18.5 56.3L17.6 55.8M22.7 57.9L22 57.5L21.2 57M27.4 58.6L27 58.3L26.7 57.8M32.9 58.8L33 58.5L33.1 58M38.3 58.4L38.8 58.1L39.3 57.6M42.6 57.6L43.4 57.1L44.2 56.6M17.1 55.5L17.7 55.9L18.6 56.2L19.6 56.6L20.7 56.9L22 57.2L23.5 57.4L25 57.7L26.7 57.8L28.4 57.9L30.2 58L32 58.1L33.8 58L35.6 57.9L37.3 57.8L39 57.7L40.5 57.4L42 57.2L43.3 56.9L44.4 56.6L45.4 56.2L46.3 55.9L46.9 55.5M17.6 55.8L16.7 55.2L15.8 54.6M19.2 56.4L18.3 55.9L17.5 55.3M21.2 57L20.5 56.5L19.8 55.9M23.8 57.5L23.2 57L22.7 56.4M26.7 57.8L26.3 57.3L25.9 56.8M29.8 58L29.7 57.5L29.5 57M33.1 58L33.2 57.6L33.2 57M36.3 57.9L36.6 57.4L36.9 56.9M39.3 57.6L39.8 57.1L40.3 56.5M42 57.2L42.6 56.7L43.3 56.1M44.2 56.6L45 56.1L45.8 55.5M45.9 56L46.8 55.5L47.7 54.9M48.1 54.8L49 54.2M15.3 54.3L16 54.7L16.9 55.1L18 55.4L19.3 55.8L20.7 56.1L22.3 56.3L24.1 56.6L25.9 56.8L27.9 56.9L29.9 57L32 57L34.1 57L36.1 56.9L38.1 56.8L39.9 56.6L41.7 56.3L43.3 56.1L44.7 55.8L46 55.4L47.1 55.1L48 54.7L48.7 54.3M15.2 54.3L14.3 53.6L13.5 52.9M16.6 55L15.8 54.3L15 53.6M18.6 55.6L17.9 54.9L17.1 54.2M21.2 56.2L20.6 55.5L19.9 54.8M24.3 56.6L23.8 56L23.3 55.3M27.7 56.9L27.4 56.3L27.2 55.6M31.4 57L31.3 56.4L31.3 55.7M35.1 56.9L35.3 56.3L35.5 55.6M38.6 56.7L39 56.1L39.4 55.4M41.8 56.3L42.4 55.7L43 55M44.6 55.8L45.3 55.1L46 54.4M46.8 55.2L47.6 54.5L48.4 53.8M48.4 54.5L49.3 53.8L50.1 53.1M13 52.5L13.5 52.9L14.3 53.3L15.3 53.7L16.4 54.1L17.8 54.4L19.4 54.7L21.2 55L23.1 55.2L25.2 55.4L27.4 55.6L29.7 55.7L32 55.7L34.3 55.7L36.6 55.6L38.8 55.4L40.9 55.2L42.8 55L44.6 54.7L46.2 54.4L47.6 54.1L48.7 53.7L49.7 53.3L50.5 52.9L51 52.5M13 52.5L12.1 51.8L11.3 50.9M14.1 53.2L13.3 52.5L12.5 51.6M15.9 53.9L15.2 53.1L14.4 52.3M18.4 54.5L17.8 53.8L17.1 52.9M21.6 55L21 54.3L20.5 53.4M25.2 55.4L24.9 54.7L24.5 53.8M29.2 55.6L29.1 54.9L28.9 54M33.4 55.7L33.5 54.9L33.5 54.1M37.5 55.5L37.8 54.7L38.1 53.9M41.3 55.2L41.7 54.4L42.2 53.6M44.6 54.7L45.2 53.9L45.8 53.1M47.3 54.1L48 53.4L48.8 52.5M49.3 53.5L50.2 52.7L50.9 51.9M50.7 52.8L51.5 52L52.4 51.2M11.3 50.9L11.9 51.3L12.7 51.7L13.7 52.1L14.9 52.4L16.4 52.8L18.2 53.1L20.1 53.4L22.2 53.6L24.5 53.8L26.9 54L29.4 54L32 54.1L34.6 54L37.1 54L39.5 53.8L41.8 53.6L43.9 53.4L45.8 53.1L47.6 52.8L49.1 52.4L50.3 52.1L51.3 51.7L52.1 51.3L52.7 50.9M11.8 51.3L11 50.4L10.3 49.5M13.4 52L12.6 51.1L11.9 50.2M15.7 52.6L15 51.7L14.3 50.8M18.7 53.2L18.1 52.3L17.5 51.3M22.4 53.6L22 52.7L21.6 51.7M26.7 53.9L26.4 53L26.2 52M31.2 54.1L31.2 53.2L31.2 52.2M35.8 54L36 53.1L36.2 52.1M40.2 53.8L40.6 52.8L40.9 51.9M44.1 53.4L44.7 52.4L45.2 51.5M47.4 52.8L48.1 51.9L48.7 51M50 52.2L50.7 51.3L51.4 50.4M51.7 51.5L52.5 50.6L53.3 49.7M52.8 50.8L53.6 50L54.3 49.1M9.8 49.2L10.4 49.6L11.2 49.9L12.2 50.3L13.5 50.6L15.1 50.9L16.9 51.2L19 51.5L21.3 51.7L23.8 51.9L26.5 52.1L29.2 52.1L32 52.2L34.8 52.1L37.5 52.1L40.2 51.9L42.7 51.7L45 51.5L47.1 51.2L48.9 50.9L50.5 50.6L51.8 50.3L52.8 49.9L53.6 49.6L54.2 49.2M9.8 49.2L9.1 48.3L8.4 47.3M11 49.8L10.3 48.9L9.6 47.9M13 50.5L12.3 49.5L11.6 48.4M15.8 51.1L15.2 50L14.6 49M19.5 51.5L19 50.5L18.5 49.4M23.8 51.9L23.5 50.9L23.2 49.7M28.6 52.1L28.5 51.1L28.4 49.9M33.7 52.2L33.8 51.1L33.8 50M38.6 52L38.9 50.9L39.1 49.8M43.1 51.7L43.6 50.6L44 49.5M47.1 51.2L47.6 50.2L48.2 49.1M50.2 50.7L50.8 49.7L51.5 48.6M52.5 50.1L53.2 49.1L53.8 48M53.9 49.4L54.6 48.5L55.3 47.5M8.1 47L8.4 47.3L8.9 47.6L9.8 47.9L10.8 48.2L12.2 48.5L13.9 48.8L15.8 49.1L18 49.4L20.5 49.6L23.2 49.7L26 49.9L29 49.9L32 50L35 49.9L38 49.9L40.8 49.7L43.5 49.6L46 49.4L48.2 49.1L50.1 48.8L51.8 48.5L53.2 48.2L54.2 47.9L55.1 47.6L55.6 47.3L55.9 47M8.1 47L7.5 46L6.9 45M8.9 47.6L8.2 46.5L7.6 45.5M10.5 48.1L9.8 47.1L9.2 45.9M13 48.7L12.4 47.6L11.8 46.4M16.5 49.2L15.9 48L15.5 46.8M20.8 49.6L20.4 48.4L20 47.2M25.7 49.9L25.5 48.7L25.3 47.4M31.1 50L31.1 48.8L31 47.5M36.5 49.9L36.7 48.7L36.8 47.4M41.7 49.7L42 48.5L42.3 47.3M46.2 49.3L46.7 48.2L47.1 47M49.9 48.9L50.5 47.7L51.1 46.6M52.8 48.3L53.4 47.2L54 46.1M54.7 47.8L55.3 46.7L56 45.6M55.7 47.2L56.4 46.2L57 45.1M6.9 45L7.1 45.2L7.7 45.5L8.5 45.8L9.6 46L11 46.3L12.7 46.5L14.8 46.8L17.1 47L19.7 47.2L22.6 47.3L25.6 47.4L28.8 47.5L32 47.5L35.2 47.5L38.4 47.4L41.4 47.3L44.3 47.2L46.9 47L49.2 46.8L51.3 46.5L53 46.3L54.4 46L55.5 45.8L56.3 45.5L56.9 45.2L57.1 45M7.1 45.2L6.6 44.1L6 43M8.3 45.7L7.7 44.6L7.2 43.4M10.4 46.2L9.8 45L9.3 43.8M13.5 46.6L13 45.4L12.6 44.1M17.6 47L17.2 45.7L16.8 44.4M22.6 47.3L22.3 46L22 44.6M28.1 47.5L28 46.1L27.9 44.7M33.9 47.5L34 46.2L34.1 44.8M39.6 47.4L39.8 46L40.1 44.7M44.8 47.1L45.2 45.8L45.5 44.5M49.2 46.8L49.7 45.5L50.1 44.2M52.7 46.3L53.2 45.1L53.7 43.9M55.1 45.9L55.7 44.7L56.2 43.5M56.6 45.4L57.1 44.3L57.7 43.2M57.7 43.9L58.2 42.8M5.8 42.8L6 43L6.6 43.2L7.4 43.4L8.5 43.6L10 43.8L11.7 44L13.9 44.2L16.3 44.4L19 44.5L22 44.6L25.2 44.7L28.6 44.7L32 44.8L35.4 44.7L38.8 44.7L42 44.6L45 44.5L47.7 44.4L50.1 44.2L52.3 44L54 43.8L55.5 43.6L56.6 43.4L57.4 43.2L58 43L58.2 42.8M5.8 42.9L5.3 41.8L4.9 40.6M6.5 43.2L6 42.1L5.6 40.9M8.1 43.6L7.6 42.4L7.2 41.1M10.8 43.9L10.3 42.6L9.9 41.3M14.6 44.3L14.2 42.9L13.8 41.5M19.3 44.5L19 43.1L18.8 41.7M24.9 44.7L24.7 43.3L24.6 41.8M31 44.8L30.9 43.3L30.9 41.8M37.1 44.7L37.2 43.3L37.3 41.8M42.9 44.6L43.1 43.2L43.4 41.7M48 44.4L48.3 43L48.7 41.6M52.1 44.1L52.5 42.7L52.9 41.4M55.1 43.7L55.6 42.5L56 41.2M57.1 43.3L57.6 42.2L58 40.9M58.1 43L58.5 41.9L59 40.7M4.9 40.6L5.1 40.8L5.6 40.9L6.4 41L7.6 41.1L9.1 41.2L10.9 41.4L13.1 41.5L15.6 41.6L18.5 41.7L21.6 41.7L24.9 41.8L28.4 41.8L32 41.8L35.6 41.8L39.1 41.8L42.4 41.7L45.5 41.7L48.4 41.6L50.9 41.5L53.1 41.4L54.9 41.2L56.4 41.1L57.6 41L58.4 40.9L58.9 40.8L59.1 40.6M5.1 40.8L4.7 39.6L4.4 38.4M6.2 41L5.8 39.7L5.5 38.4M8.4 41.2L8 39.9L7.7 38.5M11.7 41.4L11.4 40L11.1 38.6M16.2 41.6L15.9 40.1L15.6 38.6M21.6 41.7L21.4 40.2L21.2 38.7M27.7 41.8L27.6 40.3L27.6 38.7M34.2 41.8L34.2 40.3L34.2 38.7M40.4 41.8L40.6 40.2L40.7 38.7M46.1 41.6L46.4 40.2L46.6 38.6M50.9 41.5L51.3 40L51.6 38.6M54.6 41.3L55 39.9L55.3 38.5M57.2 41.1L57.6 39.8L57.9 38.5M58.6 40.8L59 39.6L59.4 38.4M59.1 40.6L59.5 39.5L59.8 38.3M4.2 38.4L4.4 38.4L4.9 38.4L5.7 38.5L6.8 38.5L8.3 38.5L10.2 38.6L12.4 38.6L15 38.6L18 38.6L21.2 38.7L24.7 38.7L28.3 38.7L32 38.7L35.7 38.7L39.3 38.7L42.8 38.7L46 38.6L49 38.6L51.6 38.6L53.8 38.6L55.7 38.5L57.2 38.5L58.3 38.5L59.1 38.4L59.6 38.4L59.8 38.4M4.2 38.4L3.9 37.2L3.7 36M4.8 38.4L4.5 37.2L4.3 35.9M6.4 38.5L6.1 37.1L5.9 35.8M9.2 38.5L8.9 37.1L8.7 35.7M13.2 38.6L12.9 37.1L12.7 35.6M18.3 38.6L18.1 37.1L17.9 35.5M24.3 38.7L24.2 37.1L24.1 35.4M30.9 38.7L30.9 37.1L30.9 35.4M37.5 38.7L37.6 37.1L37.7 35.4M43.8 38.7L43.9 37.1L44.1 35.5M49.2 38.6L49.5 37.1L49.7 35.6M53.6 38.6L53.9 37.1L54.1 35.6M56.8 38.5L57.1 37.1L57.3 35.8M58.8 38.4L59.1 37.2L59.3 35.9M59.7 38.4L60 37.2L60.2 36M3.7 36L3.8 36L4.3 35.9L5.1 35.8L6.3 35.8L7.8 35.7L9.7 35.7L12 35.6L14.6 35.5L17.6 35.5L20.9 35.5L24.5 35.4L28.2 35.4L32 35.4L35.8 35.4L39.5 35.4L43.1 35.5L46.4 35.5L49.4 35.5L52 35.6L54.3 35.7L56.2 35.7L57.7 35.8L58.9 35.8L59.7 35.9L60.2 36L60.3 36M3.8 36L3.6 34.7L3.5 33.5M4.9 35.8L4.7 34.5L4.6 33.2M7.1 35.7L6.9 34.3L6.8 32.9M10.6 35.6L10.4 34.1L10.2 32.6M15.2 35.5L15.1 34L14.9 32.4M20.9 35.5L20.8 33.8L20.8 32.2M27.4 35.4L27.4 33.8L27.4 32.1M34.3 35.4L34.3 33.8L34.3 32.1M41 35.5L41 33.8L41.1 32.2M47 35.5L47.1 33.9L47.2 32.3M52 35.6L52.2 34.1L52.3 32.5M55.9 35.7L56.1 34.3L56.2 32.8M58.5 35.8L58.7 34.5L58.8 33.1M59.9 35.9L60.1 34.7L60.3 33.4M60.3 36L60.5 34.9L60.7 33.7M3.3 33.6L3.5 33.5L4 33.3L4.8 33.2L5.9 33L7.4 32.8L9.4 32.7L11.7 32.5L14.4 32.4L17.4 32.3L20.8 32.2L24.4 32.1L28.1 32.1L32 32.1L35.9 32.1L39.6 32.1L43.2 32.2L46.6 32.3L49.6 32.4L52.3 32.5L54.6 32.7L56.6 32.8L58.1 33L59.2 33.2L60 33.3L60.5 33.5L60.7 33.6M3.3 33.6L3.2 32.4L3.2 31.2M3.9 33.3L3.8 32.1L3.8 30.8M5.5 33.1L5.4 31.7L5.4 30.3M8.4 32.8L8.3 31.3L8.2 29.8M12.4 32.5L12.4 31L12.3 29.4M17.7 32.3L17.7 30.7L17.6 29.1M24 32.1L24 30.5L23.9 28.8M30.8 32.1L30.8 30.4L30.8 28.7M37.8 32.1L37.8 30.4L37.8 28.8M44.3 32.2L44.3 30.6L44.4 29M49.9 32.4L50 30.8L50 29.3M54.4 32.7L54.5 31.2L54.5 29.7M57.7 33L57.8 31.5L57.8 30.1M59.7 33.2L59.8 31.9L59.8 30.6M60.6 33.5L60.7 32.3L60.7 31.1M3.2 31.3L3.4 31L3.8 30.8L4.6 30.5L5.8 30.2L7.3 30L9.2 29.7L11.6 29.5L14.3 29.3L17.3 29.1L20.7 28.9L24.3 28.8L28.1 28.7L32 28.7L35.9 28.7L39.7 28.8L43.3 28.9L46.7 29.1L49.7 29.3L52.4 29.5L54.8 29.7L56.7 30L58.2 30.2L59.4 30.5L60.2 30.8L60.6 31L60.8 31.3M3.4 31L3.4 29.8L3.4 28.5M4.4 30.5L4.5 29.2L4.5 27.9M6.7 30.1L6.7 28.6L6.7 27.2M10.1 29.6L10.1 28.1L10.2 26.6M14.8 29.2L14.8 27.6L14.9 26.1M20.7 28.9L20.7 27.3L20.7 25.7M27.3 28.7L27.3 27.1L27.4 25.4M34.3 28.7L34.3 27L34.3 25.4M41.2 28.8L41.2 27.2L41.1 25.6M47.3 29.1L47.3 27.5L47.3 25.9M52.4 29.5L52.4 27.9L52.4 26.4M56.3 29.9L56.3 28.5L56.3 27M59 30.4L58.9 29L58.9 27.7M60.4 30.9L60.4 29.6L60.3 28.3M60.8 31.3M3.3 28.9L3.4 28.5L3.9 28.2L4.7 27.8L5.9 27.5L7.4 27.1L9.3 26.8L11.6 26.4L14.3 26.1L17.4 25.9L20.7 25.7L24.3 25.5L28.1 25.4L32 25.4L35.9 25.4L39.7 25.5L43.3 25.7L46.6 25.9L49.7 26.1L52.4 26.4L54.7 26.8L56.6 27.1L58.1 27.5L59.3 27.8L60.1 28.2L60.6 28.5L60.7 28.9M3.3 28.9L3.4 27.7L3.5 26.5M3.8 28.2L4 27L4.1 25.7M5.5 27.6L5.6 26.2L5.7 24.9M8.3 26.9L8.4 25.5L8.6 24.1M12.4 26.3L12.5 24.8L12.6 23.3M17.7 25.9L17.8 24.3L17.9 22.7M24 25.5L24 23.9L24.1 22.3M30.8 25.4L30.8 23.8L30.8 22.2M37.8 25.5L37.8 23.8L37.7 22.2M44.3 25.7L44.3 24.1L44.2 22.6M50 26.2L49.9 24.6L49.8 23.1M54.5 26.7L54.4 25.3L54.2 23.8M57.7 27.4L57.6 26L57.5 24.6M59.7 28L59.6 26.7L59.5 25.4M60.6 28.7L60.5 27.4L60.4 26.3M3.5 26.6L3.7 26.1L4.2 25.7L5 25.2L6.1 24.8L7.7 24.3L9.6 23.9L11.9 23.5L14.5 23.1L17.5 22.8L20.9 22.5L24.4 22.3L28.2 22.2L32 22.2L35.8 22.2L39.6 22.3L43.1 22.5L46.5 22.8L49.5 23.1L52.1 23.5L54.4 23.9L56.3 24.3L57.9 24.8L59 25.2L59.8 25.7L60.3 26.1L60.5 26.6M3.7 26.1L3.9 24.9L4.2 23.8M4.8 25.3L5 24L5.3 22.8M7 24.5L7.2 23.1L7.5 21.8M10.4 23.7L10.6 22.3L10.9 20.9M15.1 23L15.3 21.5L15.4 20.1M20.9 22.5L21 21L21.1 19.5M27.4 22.2L27.5 20.7L27.5 19.1M34.3 22.2L34.3 20.6L34.3 19.1M41 22.4L40.9 20.8L40.8 19.3M47.1 22.8L46.9 21.3L46.8 19.9M52.1 23.5L52 22L51.7 20.6M56 24.2L55.8 22.8L55.5 21.5M58.6 25L58.4 23.7L58.1 22.5M60 25.9L59.8 24.6L59.6 23.4M4.2 23.8L4.7 23.2L5.5 22.7L6.6 22.1L8.1 21.6L10 21.1L12.3 20.6L14.9 20.2L17.8 19.8L21.1 19.5L24.6 19.3L28.3 19.1L32 19.1L35.7 19.1L39.4 19.3L42.9 19.5L46.2 19.8L49.1 20.2L51.7 20.6L54 21.1L55.9 21.6L57.4 22.1L58.5 22.7L59.3 23.2L59.8 23.8M4.6 23.3L4.9 22.1L5.3 20.9M6.2 22.3L6.5 21L6.9 19.8M9 21.3L9.3 20L9.6 18.7M13 20.5L13.3 19.1L13.6 17.8M18.2 19.8L18.4 18.3L18.6 17M24.2 19.3L24.3 17.8L24.5 16.4M30.9 19.1L30.9 17.6L30.9 16.2M37.6 19.2L37.5 17.7L37.4 16.3M43.9 19.6L43.7 18.1L43.5 16.7M49.4 20.2L49.2 18.8L48.9 17.5M53.8 21L53.5 19.7L53.2 18.4M57 22L56.7 20.7L56.3 19.5M59 23L58.7 21.7L58.3 20.6M59.9 23.9L59.6 22.8L59.3 21.7M4.8 21.5L5.3 20.9L6.1 20.3L7.3 19.6L8.8 19L10.6 18.5L12.8 17.9L15.4 17.4L18.3 17L21.4 16.7L24.8 16.4L28.4 16.2L32 16.2L35.6 16.2L39.2 16.4L42.6 16.7L45.7 17L48.6 17.4L51.2 17.9L53.4 18.5L55.2 19L56.7 19.6L57.9 20.3L58.7 20.9L59.2 21.5M4.8 21.5L5.2 20.4L5.7 19.3M5.9 20.4L6.3 19.2L6.8 18.1M8.1 19.3L8.5 18.1L8.9 16.9M11.5 18.2L11.8 17L12.2 15.8M15.9 17.3L16.2 16L16.5 14.8M21.4 16.7L21.6 15.3L21.8 14M27.7 16.3L27.7 14.9L27.8 13.6M34.2 16.2L34.1 14.8L34.1 13.6M40.6 16.5L40.4 15.1L40.2 13.9M46.3 17.1L46.1 15.8L45.8 14.5M51.2 17.9L50.8 16.6L50.5 15.4M54.9 18.9L54.5 17.7L54.1 16.5M57.5 20L57.1 18.8L56.6 17.7M58.9 21.1L58.5 20L58.1 18.9M5.7 19.3L6.2 18.6L7 18L8.1 17.3L9.6 16.6L11.4 16L13.5 15.4L16 14.9L18.8 14.4L21.8 14L25.1 13.8L28.5 13.6L32 13.5L35.5 13.6L38.9 13.8L42.2 14L45.2 14.4L48 14.9L50.5 15.4L52.6 16L54.4 16.6L55.9 17.3L57 18L57.8 18.6L58.3 19.3M6.1 18.7L6.6 17.6L7.1 16.6M7.7 17.5L8.2 16.4L8.7 15.3M10.4 16.3L10.9 15.2L11.4 14.1M14.2 15.2L14.6 14.1L15.1 12.9M19.1 14.4L19.4 13.2L19.7 12M24.8 13.8L24.9 12.6L25.1 11.4M31 13.5L31 12.3L31 11.1M37.2 13.7L37.1 12.4L36.9 11.3M43.1 14.1L42.8 12.9L42.6 11.8M48.2 14.9L47.9 13.7L47.5 12.6M52.4 15.9L52 14.8L51.5 13.7M55.5 17.1L55 16L54.5 14.9M57.5 18.3L57 17.2L56.5 16.2M58.4 19.5L58 18.5M6.6 17.2L7.2 16.5L8 15.8L9.1 15.1L10.5 14.4L12.3 13.7L14.4 13.1L16.8 12.5L19.4 12.1L22.3 11.7L25.4 11.4L28.7 11.2L32 11.1L35.3 11.2L38.6 11.4L41.7 11.7L44.6 12.1L47.2 12.5L49.6 13.1L51.7 13.7L53.5 14.4L54.9 15.1L56 15.8L56.8 16.5L57.4 17.2M6.6 17.2L7.2 16.3M7.8 16L8.4 14.9L8.9 14M9.9 14.7L10.5 13.6L11 12.7M13.1 13.5L13.6 12.4L14.1 11.4M17.3 12.4L17.7 11.4L18.1 10.4M22.3 11.7L22.6 10.6L22.9 9.6M28 11.2L28.1 10.1L28.3 9.1M34 11.2L33.9 10.1L33.9 9M39.8 11.5L39.6 10.4L39.4 9.4M45.1 12.2L44.8 11.1L44.4 10.1M49.6 13.1L49.2 12L48.7 11M53.1 14.3L52.6 13.2L52.1 12.2M55.6 15.5L55.1 14.5L54.5 13.5M57.1 16.8L56.5 15.8L55.9 14.9M8.3 14.6L9.1 13.8L10.2 13.1L11.6 12.4L13.3 11.7L15.3 11L17.6 10.5L20.1 10L22.9 9.6L25.8 9.3L28.9 9.1L32 9L35.1 9.1L38.2 9.3L41.1 9.6L43.9 10L46.4 10.5L48.7 11L50.7 11.7L52.4 12.4L53.8 13.1L54.9 13.8L55.7 14.6M8.3 14.7L8.9 13.7L9.5 12.9M9.9 13.3L10.5 12.4L11.1 11.5M12.4 12L13 11.1L13.6 10.2M16 10.9L16.5 9.9L17 9M20.4 9.9L20.8 9L21.1 8.1M25.5 9.3L25.7 8.3L25.9 7.5M31.1 9L31.1 8.1L31.1 7.2M36.7 9.2L36.5 8.2L36.4 7.3M42 9.7L41.6 8.7L41.3 7.9M46.6 10.5L46.2 9.6L45.7 8.7M50.5 11.6L49.9 10.7L49.4 9.8M53.4 12.9L52.8 11.9L52.1 11.1M55.3 14.2L54.7 13.3L54 12.4M9.6 12.8L10.4 12L11.5 11.3L12.8 10.6L14.5 9.9L16.4 9.2L18.5 8.6L20.9 8.1L23.5 7.7L26.2 7.5L29.1 7.3L32 7.2L34.9 7.3L37.8 7.5L40.5 7.7L43.1 8.1L45.5 8.6L47.6 9.2L49.5 9.9L51.2 10.6L52.5 11.3L53.6 12L54.4 12.8M10.2 12.2L10.9 11.4L11.6 10.6M12.3 10.8L12.9 10L13.6 9.2M15.2 9.6L15.8 8.8L16.4 8M19 8.5L19.4 7.7L19.9 7M23.5 7.7L23.8 6.9L24.1 6.2M28.5 7.3L28.6 6.5L28.8 5.8M33.8 7.2L33.7 6.4L33.6 5.7M38.9 7.6L38.6 6.8L38.4 6M43.6 8.2L43.2 7.4L42.8 6.7M47.6 9.2L47.1 8.4L46.5 7.6M50.9 10.4L50.2 9.6L49.6 8.8M53.2 11.7L52.5 10.9L51.8 10.1M54.6 13.1M11.8 10.4L12.8 9.7L14.1 9L15.7 8.3L17.5 7.6L19.5 7.1L21.7 6.6L24.1 6.2L26.7 5.9L29.3 5.7L32 5.7L34.7 5.7L37.3 5.9L39.9 6.2L42.3 6.6L44.5 7.1L46.5 7.6L48.3 8.3L49.9 9L51.2 9.7L52.2 10.4M12.5 9.9L13.2 9.2L14 8.5M14.9 8.6L15.5 7.9L16.2 7.3M18 7.5L18.6 6.8L19.2 6.2M21.9 6.6L22.4 5.9L22.8 5.3M26.4 5.9L26.6 5.3L26.9 4.7M31.2 5.7L31.2 5L31.3 4.5M36 5.8L35.9 5.2L35.7 4.6M40.6 6.3L40.3 5.6L39.9 5M44.7 7.1L44.2 6.4L43.7 5.8M48.2 8.2L47.5 7.5L46.9 6.9M50.8 9.5L50.1 8.7L49.4 8.1M52.6 10.8L51.9 10.1M13.3 9L14.3 8.3L15.5 7.6L17 6.9L18.6 6.3L20.5 5.8L22.6 5.3L24.8 4.9L27.1 4.7L29.5 4.5L32 4.4L34.5 4.5L36.9 4.7L39.2 4.9L41.4 5.3L43.5 5.8L45.4 6.3L47 6.9L48.5 7.6L49.7 8.3L50.7 9M13.1 9.2M15 7.9L15.7 7.3L16.5 6.7M17.6 6.7L18.2 6.1L18.9 5.6M20.9 5.7L21.4 5.1L21.9 4.6M24.8 4.9L25.1 4.4L25.4 4M29 4.5L29.2 4L29.3 3.6M33.5 4.5L33.4 4L33.3 3.5M37.8 4.8L37.6 4.2L37.3 3.8M41.9 5.4L41.4 4.9L41 4.4M45.4 6.3L44.8 5.8L44.2 5.2M48.2 7.5L47.5 6.9L46.8 6.3M50.3 8.7L49.6 8.1M15.8 7.1L16.9 6.4L18.3 5.8L19.8 5.2L21.6 4.7L23.4 4.3L25.4 4L27.6 3.7L29.8 3.5L32 3.5L34.2 3.5L36.4 3.7L38.6 4L40.6 4.3L42.4 4.7L44.2 5.2L45.7 5.8L47.1 6.4L48.2 7.1M15.5 7.3M17.6 6.1L18.3 5.6L19 5.2M20.3 5.1L20.9 4.6L21.5 4.3M23.6 4.3L24.1 3.9L24.5 3.5M27.4 3.7L27.6 3.3L27.8 3M31.3 3.5L31.4 3.1L31.4 2.8M35.3 3.6L35.2 3.2L35 2.9M39.2 4L38.8 3.6L38.4 3.3M42.6 4.8L42.1 4.4L41.5 4M45.6 5.8L44.9 5.3L44.2 4.9M47.9 6.9L47.1 6.4M18.4 5.5L19.6 4.9L21.1 4.4L22.6 3.9L24.3 3.5L26.1 3.2L28 3L30 2.8L32 2.8L34 2.8L36 3L37.9 3.2L39.7 3.5L41.4 3.9L42.9 4.4L44.4 4.9L45.6 5.5M18 5.8M20.2 4.7L20.9 4.4L21.5 4.1M23 3.9L23.5 3.5L24 3.3M26.1 3.2L26.5 2.9L26.8 2.7M29.6 2.9L29.7 2.6L29.9 2.4M33.2 2.8L33.1 2.6L33.1 2.4M36.7 3.1L36.5 2.8L36.2 2.6M40 3.6L39.6 3.3L39.1 3.1M42.9 4.4L42.3 4.1L41.7 3.8M45.4 5.4L44.6 5M21 4.3L22.3 3.8L23.7 3.4L25.2 3L26.8 2.7L28.5 2.5L30.2 2.4L32 2.3L33.8 2.4L35.5 2.5L37.2 2.7L38.8 3L40.3 3.4L41.7 3.8L43 4.3M21.5 4.1M26.8 2.7L27.2 2.6L27.5 2.5M33.1 2.4L33 2.2L32.9 2.1M39.1 3.1L38.6 2.9L38.2 2.8M26.1 2.7L27.5 2.5L29 2.3L30.5 2.2L32 2.1L33.5 2.2L35 2.3L36.5 2.5L37.9 2.7M25 3M30.2 2.2L30.3 2.2M35.6 2.3L35.4 2.3"/><path id="rbm" d="M32 59.7M28.6 59.5L28.1 59.4M32.8 59.7L32.9 59.6M36.8 59.3L37.5 59.2M25 58.8L25.8 59L26.7 59.2L27.7 59.3L28.7 59.5L29.8 59.5L30.9 59.6L32 59.6L33.1 59.6L34.2 59.5L35.3 59.5L36.3 59.3L37.3 59.2L38.2 59L39 58.8M26 59.1L25.3 58.9L24.6 58.6M30.5 59.6L30.3 59.4L30.1 59.2M35.3 59.5L35.7 59.3L36 59.1M40.2 58.5L41 58.2M21.6 57.8L22.4 58L23.3 58.3L24.4 58.5L25.5 58.7L26.7 58.9L28 59.1L29.3 59.2L30.6 59.2L32 59.2L33.4 59.2L34.7 59.2L36 59.1L37.3 58.9L38.5 58.7L39.6 58.5L40.7 58.3L41.6 58L42.4 57.8M22.4 58L21.5 57.7L20.6 57.2M27.2 59L26.7 58.7L26.2 58.3M33.1 59.2L33.2 58.9L33.3 58.6M38.7 58.7L39.4 58.4L40.1 58M43.8 57.2L44.8 56.7M18.9 56.5L19.7 56.9L20.6 57.2L21.7 57.5L22.9 57.8L24.2 58L25.6 58.2L27.2 58.4L28.7 58.5L30.4 58.6L32 58.6L33.6 58.6L35.3 58.5L36.8 58.4L38.4 58.2L39.8 58L41.1 57.8L42.3 57.5L43.4 57.2L44.3 56.9L45.1 56.5M18.8 56.5L17.8 55.9L16.8 55.3M23.2 57.8L22.4 57.3L21.7 56.8M29.7 58.5L29.5 58.1L29.3 57.5M36.8 58.4L37.3 57.9L37.7 57.4M42.7 57.4L43.6 56.9L44.4 56.3M16.2 55L16.9 55.4L17.8 55.7L18.8 56.1L20.1 56.4L21.4 56.7L22.9 57L24.6 57.2L26.3 57.4L28.2 57.5L30.1 57.6L32 57.6L33.9 57.6L35.8 57.5L37.7 57.4L39.4 57.2L41.1 57L42.6 56.7L43.9 56.4L45.2 56.1L46.2 55.7L47.1 55.4L47.8 55M16.8 55.3L15.8 54.6L14.8 53.8M18.8 56.1L18 55.4L17.1 54.7M21.7 56.8L21 56.1L20.3 55.4M25.3 57.3L24.8 56.6L24.3 55.9M29.3 57.5L29.1 56.9L28.9 56.2M33.5 57.6L33.7 57L33.8 56.3M37.7 57.4L38.1 56.7L38.5 56M41.4 56.9L42 56.3L42.7 55.5M44.4 56.3L45.3 55.6L46.1 54.9M46.7 55.5L47.7 54.8L48.6 54.1M49.2 54L50.2 53.2M13.7 53.1L14.3 53.5L15 53.9L15.9 54.3L17.1 54.7L18.4 55L20 55.3L21.7 55.6L23.5 55.8L25.5 56L27.6 56.2L29.8 56.2L32 56.3L34.2 56.2L36.4 56.2L38.5 56L40.5 55.8L42.3 55.6L44 55.3L45.6 55L46.9 54.7L48.1 54.3L49 53.9L49.7 53.5L50.3 53.1M14.1 53.4L13.1 52.6L12.2 51.7M15.8 54.3L14.9 53.4L14.1 52.6M18.6 55L17.8 54.2L17 53.3M22.2 55.7L21.6 54.9L21 54M26.6 56.1L26.2 55.3L25.9 54.4M31.3 56.3L31.3 55.5L31.3 54.6M36.2 56.2L36.4 55.4L36.7 54.5M40.7 55.8L41.2 55L41.7 54.1M44.5 55.2L45.3 54.4L46 53.5M47.5 54.5L48.4 53.7L49.2 52.8M49.5 53.6L50.5 52.8L51.4 51.9M11.8 51.4L12.4 51.8L13.2 52.2L14.2 52.6L15.4 53L16.9 53.3L18.5 53.6L20.4 53.9L22.5 54.1L24.7 54.3L27.1 54.5L29.5 54.6L32 54.6L34.5 54.6L36.9 54.5L39.3 54.3L41.5 54.1L43.6 53.9L45.5 53.6L47.1 53.3L48.6 53L49.8 52.6L50.8 52.2L51.6 51.8L52.2 51.4M11.7 51.3L10.8 50.4L9.9 49.4M13 52.1L12.1 51.2L11.3 50.2M15.4 53L14.6 52L13.8 51M18.9 53.7L18.2 52.7L17.6 51.7M23.4 54.2L22.9 53.2L22.5 52.2M28.5 54.5L28.3 53.6L28.2 52.5M34 54.6L34.1 53.6L34.2 52.5M39.3 54.3L39.7 53.4L40.1 52.3M44 53.8L44.6 52.9L45.2 51.8M47.8 53.2L48.5 52.2L49.3 51.2M50.5 52.4L51.3 51.4L52.2 50.4M52.1 51.5L53 50.6L53.8 49.6M10.1 49.5L10.6 49.9L11.4 50.3L12.5 50.6L13.8 51L15.4 51.3L17.2 51.6L19.2 51.9L21.5 52.1L23.9 52.3L26.5 52.4L29.2 52.5L32 52.5L34.8 52.5L37.5 52.4L40.1 52.3L42.5 52.1L44.8 51.9L46.8 51.6L48.6 51.3L50.2 51L51.5 50.6L52.6 50.3L53.4 49.9L53.9 49.5M10.4 49.8L9.6 48.7L8.8 47.6M12.4 50.6L11.6 49.5L10.8 48.4M15.5 51.3L14.8 50.2L14.1 49M19.9 51.9L19.3 50.8L18.8 49.6M25.2 52.4L24.9 51.2L24.6 50M31.2 52.5L31.1 51.4L31.1 50.1M37.2 52.4L37.4 51.3L37.7 50M42.7 52.1L43.2 50.9L43.7 49.7M47.4 51.5L48.1 50.4L48.7 49.2M50.9 50.8L51.7 49.7L52.4 48.5M53.2 50L54 48.9L54.7 47.8M55 48.2L55.8 47.1M8.2 47.1L8.5 47.4L9 47.7L9.8 48.1L10.9 48.4L12.3 48.7L14 49L15.9 49.3L18.1 49.5L20.6 49.7L23.2 49.9L26 50L29 50.1L32 50.1L35 50.1L38 50L40.8 49.9L43.4 49.7L45.9 49.5L48.1 49.3L50 49L51.7 48.7L53.1 48.4L54.2 48.1L55 47.7L55.5 47.4L55.8 47.1M8.3 47.3L7.6 46.2L6.9 45M9.7 48L8.9 46.8L8.2 45.6M12.3 48.7L11.6 47.5L11 46.2M16.3 49.3L15.7 48L15.2 46.7M21.6 49.8L21.2 48.5L20.8 47.1M27.8 50.1L27.6 48.7L27.5 47.3M34.4 50.1L34.5 48.8L34.6 47.4M40.8 49.9L41.1 48.6L41.5 47.2M46.4 49.5L46.9 48.2L47.4 46.8M50.7 48.9L51.4 47.6L52 46.3M53.8 48.2L54.5 47L55.2 45.8M55.4 47.5L56.1 46.4L56.8 45.2M6.8 44.9L7.1 45.1L7.6 45.4L8.4 45.7L9.5 45.9L11 46.2L12.7 46.4L14.7 46.7L17.1 46.9L19.7 47L22.5 47.2L25.6 47.3L28.8 47.4L32 47.4L35.2 47.4L38.4 47.3L41.5 47.2L44.3 47L46.9 46.9L49.3 46.7L51.3 46.4L53 46.2L54.5 45.9L55.6 45.7L56.4 45.4L56.9 45.1L57.2 44.9M7.4 45.3L6.8 44.1L6.2 42.8M9.4 45.9L8.8 44.6L8.2 43.2M12.9 46.4L12.3 45.1L11.8 43.6M17.8 46.9L17.4 45.5L17 44M24 47.2L23.8 45.8L23.6 44.2M31 47.4L31 45.9L31 44.3M38.1 47.3L38.3 45.8L38.5 44.2M44.6 47L45 45.6L45.3 44M49.9 46.6L50.4 45.2L50.9 43.7M53.8 46L54.4 44.7L55 43.3M56.2 45.5L56.8 44.2L57.4 42.9M57.2 44.9L57.8 43.7L58.3 42.5M5.6 42.5L5.9 42.7L6.4 42.9L7.2 43.1L8.3 43.2L9.8 43.4L11.6 43.6L13.7 43.8L16.2 43.9L18.9 44.1L22 44.2L25.2 44.2L28.6 44.3L32 44.3L35.4 44.3L38.8 44.2L42 44.2L45.1 44.1L47.8 43.9L50.3 43.8L52.4 43.6L54.2 43.4L55.7 43.2L56.8 43.1L57.6 42.9L58.1 42.7L58.4 42.5M5.8 42.6L5.2 41.3L4.8 40.1M7 43L6.5 41.7L6 40.3M9.8 43.4L9.3 42L8.8 40.5M14.2 43.8L13.8 42.3L13.4 40.7M20.1 44.1L19.8 42.5L19.5 40.9M27.2 44.3L27.1 42.6L27 40.9M34.8 44.3L34.8 42.7L34.9 41M42 44.2L42.3 42.5L42.5 40.9M48.3 43.9L48.7 42.3L49.1 40.7M53.2 43.5L53.7 42.1L54.1 40.6M56.4 43.1L56.9 41.8L57.4 40.3M58 42.7L58.6 41.4L59 40.1M4.7 40L4.9 40.1L5.4 40.2L6.2 40.3L7.3 40.4L8.8 40.5L10.7 40.6L12.9 40.7L15.4 40.8L18.3 40.8L21.5 40.9L24.8 40.9L28.4 41L32 41L35.6 41L39.2 40.9L42.5 40.9L45.7 40.8L48.6 40.8L51.1 40.7L53.3 40.6L55.2 40.5L56.7 40.4L57.8 40.3L58.6 40.2L59.1 40.1L59.3 40M5.2 40.2L4.8 38.8L4.5 37.4M7.2 40.4L6.8 38.9L6.4 37.4M10.9 40.6L10.5 39L10.2 37.4M16.3 40.8L16 39.1L15.7 37.4M23.1 40.9L23 39.2L22.8 37.4M30.9 41L30.9 39.2L30.9 37.4M38.8 40.9L38.9 39.2L39.1 37.4M46 40.8L46.3 39.1L46.5 37.4M51.8 40.7L52.2 39.1L52.5 37.4M56 40.4L56.4 38.9L56.7 37.4M58.4 40.2L58.8 38.8L59.2 37.4M59.3 40L59.7 38.7L60 37.4M4 37.4L4.1 37.4L4.6 37.4L5.4 37.4L6.6 37.4L8.1 37.4L10 37.4L12.2 37.4L14.9 37.4L17.8 37.4L21.1 37.4L24.6 37.4L28.2 37.4L32 37.4L35.8 37.4L39.4 37.4L42.9 37.4L46.2 37.4L49.1 37.4L51.8 37.4L54 37.4L55.9 37.4L57.4 37.4L58.6 37.4L59.4 37.4L59.9 37.4L60 37.4M4 37.4L3.8 36.1L3.5 34.7M5.2 37.4L5 36L4.7 34.5M8.1 37.4L7.8 35.8L7.6 34.2M12.7 37.4L12.5 35.7L12.3 34M19.1 37.4L18.9 35.6L18.8 33.8M26.8 37.4L26.7 35.6L26.6 33.7M35 37.4L35 35.6L35.1 33.7M42.9 37.4L43.1 35.6L43.2 33.8M49.7 37.4L49.9 35.7L50.1 34M54.8 37.4L55.1 35.8L55.3 34.2M58.2 37.4L58.4 35.9L58.7 34.4M59.8 37.4L60.1 36.1L60.3 34.7M3.5 34.8L3.6 34.7L4.1 34.6L4.9 34.5L6.1 34.4L7.6 34.2L9.5 34.1L11.8 34L14.5 33.9L17.5 33.9L20.8 33.8L24.4 33.8L28.2 33.7L32 33.7L35.8 33.7L39.6 33.8L43.2 33.8L46.5 33.9L49.5 33.9L52.2 34L54.5 34.1L56.4 34.2L57.9 34.4L59.1 34.5L59.9 34.6L60.4 34.7L60.5 34.8M3.9 34.6L3.8 33.2L3.7 31.8M5.9 34.4L5.8 32.8L5.7 31.3M9.7 34.1L9.6 32.5L9.5 30.8M15.3 33.9L15.2 32.2L15.2 30.4M22.6 33.8L22.5 31.9L22.5 30.1M30.8 33.7L30.8 31.8L30.8 30M39.2 33.8L39.3 31.9L39.3 30M46.8 33.9L46.9 32.1L47 30.3M52.9 34.1L53.1 32.4L53.2 30.7M57.2 34.3L57.4 32.7L57.5 31.1M59.7 34.6L59.8 33.1L59.9 31.6M60.5 34.8L60.7 33.5L60.8 32.1M3.2 32.1L3.4 31.9L3.9 31.7L4.7 31.5L5.8 31.3L7.3 31L9.3 30.8L11.6 30.6L14.3 30.4L17.3 30.3L20.7 30.1L24.3 30L28.1 30L32 30L35.9 30L39.7 30L43.3 30.1L46.7 30.3L49.7 30.4L52.4 30.6L54.7 30.8L56.7 31L58.2 31.3L59.3 31.5L60.1 31.7L60.6 31.9L60.8 32.1M3.3 32L3.3 30.7L3.3 29.3M4.5 31.5L4.4 30L4.5 28.6M7.3 31L7.3 29.4L7.3 27.8M12.1 30.6L12.1 28.9L12.1 27.1M18.6 30.2L18.6 28.4L18.6 26.6M26.6 30L26.6 28.1L26.6 26.3M35.1 30L35.1 28.1L35.1 26.2M43.3 30.1L43.3 28.3L43.3 26.5M50.3 30.5L50.3 28.7L50.3 27M55.6 30.9L55.6 29.3L55.5 27.6M58.9 31.4L59 29.9L58.9 28.4M60.5 31.9L60.6 30.5L60.5 29.1M3.2 29.5L3.4 29.2L3.9 28.8L4.7 28.5L5.8 28.2L7.3 27.8L9.3 27.5L11.6 27.2L14.3 26.9L17.3 26.7L20.7 26.5L24.3 26.3L28.1 26.3L32 26.2L35.9 26.3L39.7 26.3L43.3 26.5L46.7 26.7L49.7 26.9L52.4 27.2L54.7 27.5L56.7 27.8L58.2 28.2L59.3 28.5L60.1 28.8L60.6 29.2L60.8 29.5M3.7 28.9L3.8 27.5L4 26.2M5.7 28.2L5.8 26.7L5.9 25.2M9.5 27.5L9.6 25.8L9.7 24.2M15.2 26.9L15.2 25.1L15.4 23.4M22.5 26.4L22.5 24.6L22.6 22.8M30.8 26.2L30.8 24.4L30.8 22.6M39.3 26.3L39.3 24.5L39.2 22.7M47 26.7L46.9 25L46.8 23.2M53.2 27.3L53.1 25.6L52.9 24M57.5 28L57.4 26.4L57.2 24.9M59.9 28.7L59.8 27.3L59.7 25.9M60.8 29.5L60.7 28.1L60.5 26.8M3.5 26.9L3.7 26.5L4.1 26L4.9 25.6L6.1 25.1L7.6 24.7L9.5 24.3L11.8 23.9L14.5 23.5L17.5 23.2L20.8 22.9L24.4 22.8L28.2 22.6L32 22.6L35.8 22.6L39.6 22.8L43.2 22.9L46.5 23.2L49.5 23.5L52.2 23.9L54.5 24.3L56.4 24.7L57.9 25.1L59.1 25.6L59.9 26L60.3 26.5L60.5 26.9M3.6 26.6L3.8 25.3L4 24M4.7 25.7L5 24.2L5.3 22.8M7.6 24.7L7.8 23.2L8.1 21.7M12.3 23.8L12.5 22.2L12.7 20.6M18.8 23.1L18.9 21.4L19.1 19.7M26.6 22.7L26.7 20.9L26.8 19.2M35.1 22.6L35 20.9L35 19.2M43.2 22.9L43.1 21.2L42.9 19.6M50.1 23.6L49.9 21.9L49.7 20.3M55.3 24.4L55.1 22.9L54.8 21.4M58.7 25.4L58.4 23.9L58.1 22.5M60.3 26.4L60.1 25L59.8 23.7M4.2 23.8L4.6 23.3L5.4 22.7L6.6 22.2L8.1 21.7L10 21.2L12.2 20.7L14.9 20.2L17.8 19.9L21.1 19.6L24.6 19.3L28.3 19.2L32 19.1L35.7 19.2L39.4 19.3L42.9 19.6L46.2 19.9L49.1 20.2L51.8 20.7L54 21.2L55.9 21.7L57.4 22.2L58.6 22.7L59.4 23.3L59.8 23.8M4.5 23.4L4.8 22.1L5.2 20.8M6.5 22.3L6.8 20.8L7.2 19.5M10.2 21.1L10.5 19.6L10.9 18.2M15.7 20.1L16 18.6L16.3 17M22.8 19.4L23 17.8L23.1 16.3M30.9 19.1L30.9 17.5L30.9 15.9M39.1 19.3L38.9 17.7L38.8 16.1M46.5 19.9L46.2 18.3L46 16.8M52.5 20.8L52.2 19.3L51.8 17.8M56.7 21.9L56.4 20.5L56 19.1M59.2 23.1L58.8 21.8L58.4 20.5M4.9 21.3L5.4 20.7L6.2 20L7.3 19.4L8.8 18.8L10.7 18.2L12.9 17.7L15.4 17.2L18.3 16.8L21.5 16.4L24.8 16.1L28.4 16L32 15.9L35.6 16L39.2 16.1L42.5 16.4L45.7 16.8L48.6 17.2L51.1 17.7L53.3 18.2L55.2 18.8L56.7 19.4L57.8 20L58.6 20.7L59.1 21.3M4.8 21.5L5.2 20.3M6 20.2L6.5 18.9L7 17.6M8.8 18.8L9.3 17.4L9.8 16.1M13.4 17.6L13.7 16.2L14.2 14.8M19.5 16.6L19.8 15.1L20.1 13.7M27 16L27.1 14.5L27.2 13.1M34.9 16L34.8 14.5L34.8 13M42.5 16.4L42.3 14.9L42.1 13.5M49.1 17.3L48.7 15.8L48.4 14.5M54.1 18.5L53.7 17.1L53.2 15.8M57.4 19.8L56.9 18.5L56.4 17.2M59 21.1L58.6 19.9L58.1 18.7M5.8 18.9L6.4 18.2L7.2 17.5L8.3 16.8L9.8 16.1L11.6 15.5L13.7 14.9L16.2 14.4L18.9 13.9L21.9 13.5L25.2 13.2L28.5 13.1L32 13L35.5 13.1L38.8 13.2L42.1 13.5L45.1 13.9L47.8 14.4L50.3 14.9L52.4 15.5L54.2 16.1L55.7 16.8L56.8 17.5L57.6 18.2L58.2 18.9M6.2 18.4L6.7 17.2L7.3 16.1M8.2 16.9L8.7 15.7L9.3 14.5M11.8 15.4L12.3 14.2L12.8 13M17 14.2L17.4 12.9L17.8 11.7M23.5 13.4L23.8 12L24 10.8M31 13L31 11.7L31 10.4M38.5 13.2L38.3 11.9L38.1 10.6M45.4 13.9L45 12.6L44.6 11.4M51 15.1L50.5 13.8L50 12.6M55 16.5L54.5 15.2L53.9 14.1M57.4 18L56.9 16.8L56.3 15.7M7 16.6L7.5 15.9L8.3 15.1L9.5 14.4L10.9 13.7L12.6 13L14.7 12.4L17 11.8L19.6 11.4L22.5 11L25.6 10.7L28.7 10.5L32 10.4L35.3 10.5L38.4 10.7L41.5 11L44.4 11.4L47 11.8L49.3 12.4L51.4 13L53.1 13.7L54.5 14.4L55.7 15.1L56.5 15.9L57 16.6M8.2 15.3L8.8 14.2L9.5 13.2M10.9 13.7L11.5 12.6L12.1 11.5M15.1 12.3L15.6 11.1L16.2 10.1M20.8 11.2L21.1 10L21.5 9M27.5 10.5L27.6 9.4L27.8 8.3M34.6 10.5L34.5 9.3L34.4 8.2M41.5 11L41.2 9.8L40.9 8.7M47.5 12L47 10.8L46.5 9.7M52.1 13.3L51.5 12.2L50.9 11.1M55.3 14.9L54.6 13.8L53.9 12.7M56.9 16.5L56.3 15.4M8.9 13.8L9.7 13L10.8 12.3L12.1 11.5L13.8 10.8L15.8 10.2L18 9.6L20.5 9.1L23.1 8.7L26 8.4L29 8.2L32 8.2L35 8.2L38 8.4L40.9 8.7L43.5 9.1L46 9.6L48.2 10.2L50.2 10.8L51.9 11.5L53.2 12.3L54.3 13L55.1 13.8M8.7 14L9.4 13M10.7 12.3L11.4 11.4L12.1 10.4M14 10.8L14.6 9.8L15.3 8.9M18.7 9.5L19.2 8.5L19.7 7.6M24.5 8.6L24.8 7.6L25.1 6.7M31.1 8.2L31.1 7.2L31.2 6.3M37.7 8.4L37.5 7.4L37.3 6.5M43.8 9.2L43.4 8.2L42.9 7.3M48.9 10.4L48.2 9.4L47.6 8.5M52.6 11.9L51.9 10.9L51.1 10M54.9 13.5L54.2 12.6L53.4 11.6M10.4 11.9L11.2 11.1L12.2 10.4L13.5 9.6L15.1 8.9L17 8.3L19 7.7L21.3 7.2L23.8 6.9L26.5 6.6L29.2 6.4L32 6.3L34.8 6.4L37.5 6.6L40.2 6.9L42.7 7.2L45 7.7L47 8.3L48.9 8.9L50.5 9.6L51.8 10.4L52.8 11.1L53.6 11.9M11 11.3L11.8 10.4L12.6 9.6M13.5 9.6L14.3 8.8L15.1 8M17.4 8.2L18 7.4L18.6 6.6M22.3 7.1L22.7 6.3L23.2 5.5M28.1 6.4L28.3 5.6L28.5 4.9M34.2 6.4L34.1 5.6L34 4.9M40.2 6.9L39.8 6L39.4 5.3M45.4 7.8L44.8 7L44.2 6.3M49.5 9.2L48.8 8.4L48.1 7.6M52.4 10.8L51.6 10L50.8 9.2M12.8 9.5L13.8 8.7L15.1 8L16.5 7.3L18.2 6.7L20.2 6.2L22.3 5.7L24.6 5.3L27 5L29.5 4.9L32 4.8L34.5 4.9L37 5L39.4 5.3L41.7 5.7L43.8 6.2L45.8 6.7L47.5 7.3L48.9 8L50.2 8.7L51.2 9.5M13.7 8.8L14.5 8.1L15.4 7.4M16.7 7.3L17.4 6.6L18.2 6M20.8 6L21.3 5.4L21.9 4.8M25.7 5.2L26.1 4.5L26.4 4M31.2 4.8L31.3 4.2L31.3 3.7M36.8 5L36.5 4.4L36.3 3.9M41.9 5.7L41.4 5.1L40.9 4.5M46.3 6.9L45.6 6.2L44.9 5.6M49.6 8.4L48.8 7.6L48 7M15.5 7.3L16.6 6.7L18 6L19.6 5.4L21.3 4.9L23.2 4.5L25.3 4.1L27.5 3.9L29.7 3.7L32 3.7L34.3 3.7L36.5 3.9L38.7 4.1L40.8 4.5L42.7 4.9L44.4 5.4L46 6L47.4 6.7L48.5 7.3M16.6 6.7L17.4 6.1L18.3 5.6M19.9 5.3L20.6 4.8L21.2 4.4M24.1 4.3L24.5 3.9L25 3.5M28.8 3.8L29 3.3L29.2 2.9M33.8 3.7L33.7 3.3L33.6 2.9M38.7 4.1L38.3 3.7L37.9 3.3M43 5L42.4 4.5L41.8 4.1M46.6 6.3L45.8 5.7L45 5.2M49.1 7.8M18.3 5.6L19.5 5L20.9 4.5L22.5 4L24.2 3.6L26.1 3.3L28 3L30 2.9L32 2.8L34 2.9L36 3L37.9 3.3L39.8 3.6L41.5 4L43.1 4.5L44.5 5L45.7 5.6M19.7 5L20.4 4.5L21.2 4.2M23 3.9L23.6 3.5L24.2 3.2M27 3.1L27.3 2.8L27.7 2.6M31.4 2.9L31.4 2.6L31.5 2.3M35.8 3L35.6 2.7L35.3 2.5M39.9 3.6L39.4 3.3L38.9 3M43.5 4.6L42.8 4.2L42.1 3.9M46.3 5.9M21.1 4.3L22.3 3.8L23.7 3.4L25.2 3L26.8 2.7L28.5 2.5L30.2 2.4L32 2.3L33.8 2.4L35.5 2.5L37.2 2.7L38.8 3L40.3 3.4L41.7 3.8L42.9 4.3M25.9 2.9L26.3 2.7L26.7 2.6M33.4 2.4L33.3 2.2L33.2 2.1M40.6 3.4L40 3.2M26.2 2.7L27.6 2.4L29 2.3L30.5 2.2L32 2.1L33.5 2.2L35 2.3L36.4 2.4L37.8 2.7M29.9 2.2M36.4 2.4"/><path id="seam" d="M4.7 22L5.1 21.4L6 20.8L7.1 20.2L8.6 19.6L10.5 19.1L12.7 18.5L15.3 18L18.2 17.6L21.3 17.3L24.8 17L28.3 16.9L32 16.8L35.7 16.9L39.2 17L42.7 17.3L45.8 17.6L48.7 18L51.3 18.5L53.5 19.1L55.4 19.6L56.9 20.2L58 20.8L58.9 21.4L59.3 22"/><path id="dkw" d="M4 24.7L4.4 24.2L5.2 23.7L6.4 23.2L7.9 22.7L9.8 22.2L12.1 21.7L14.7 21.3L17.7 21L21 20.7L24.5 20.4L28.2 20.3L32 20.3L35.8 20.3L39.5 20.4L43 20.7L46.3 21L49.3 21.3L51.9 21.7L54.2 22.2L56.1 22.7L57.6 23.2L58.8 23.7L59.6 24.2L60 24.7M4.1 38L4.3 38.1L4.8 38.1L5.6 38.1L6.7 38.1L8.2 38.1L10.1 38.2L12.4 38.2L15 38.2L17.9 38.2L21.2 38.2L24.6 38.2L28.3 38.2L32 38.2L35.7 38.2L39.4 38.2L42.8 38.2L46.1 38.2L49 38.2L51.6 38.2L53.9 38.2L55.8 38.1L57.3 38.1L58.4 38.1L59.2 38.1L59.7 38.1L59.9 38M11.4 51L11.9 51.4L12.7 51.8L13.7 52.1L15 52.5L16.5 52.8L18.2 53.1L20.1 53.4L22.2 53.7L24.5 53.9L26.9 54L29.4 54.1L32 54.1L34.6 54.1L37.1 54L39.5 53.9L41.8 53.7L43.9 53.4L45.8 53.1L47.5 52.8L49 52.5L50.3 52.1L51.3 51.8L52.1 51.4L52.6 51"/><filter id="vein" x="0" y="0" width="100%" height="100%"><feTurbulence type="turbulence" baseFrequency="0.045" numOctaves="3" seed="14"/><feColorMatrix values="0 0 0 0 0.55  0 0 0 0 0.48  0 0 0 0 0.48  -5 0 0 0 0.42"/></filter><path id="agd" d="M23.2 57.8L26.2 58.3L29.7 58.5L29.3 57.5L25.3 57.3L21.7 56.8ZM29.3 57.5L31.4 57.6L33.5 57.6L33.8 56.3L31.3 56.3L28.9 56.2ZM33.5 57.6L35.6 57.5L37.7 57.4L38.5 56L36.2 56.2L33.8 56.3ZM44.5 55.2L46.1 54.9L47.5 54.5L49.2 52.8L47.8 53.2L46 53.5ZM23.4 54.2L25.9 54.4L28.5 54.5L28.2 52.5L25.2 52.4L22.5 52.2ZM39.3 54.3L41.7 54.1L44 53.8L45.2 51.8L42.7 52.1L40.1 52.3ZM50.5 52.4L51.4 51.9L52.1 51.5L53.8 49.6L53.2 50L52.2 50.4ZM12.4 50.6L13.8 51L15.5 51.3L14.1 49L12.3 48.7L10.8 48.4ZM50.9 50.8L52.2 50.4L53.2 50L54.7 47.8L53.8 48.2L52.4 48.5ZM9.7 48L10.8 48.4L12.3 48.7L11 46.2L9.4 45.9L8.2 45.6ZM12.3 48.7L14.1 49L16.3 49.3L15.2 46.7L12.9 46.4L11 46.2ZM49.9 46.6L52 46.3L53.8 46L55 43.3L53.2 43.5L50.9 43.7ZM5.8 42.6L6.2 42.8L7 43L6 40.3L5.2 40.2L4.8 40.1ZM42 44.2L45.3 44L48.3 43.9L49.1 40.7L46 40.8L42.5 40.9ZM48.3 43.9L50.9 43.7L53.2 43.5L54.1 40.6L51.8 40.7L49.1 40.7ZM46 40.8L49.1 40.7L51.8 40.7L52.5 37.4L49.7 37.4L46.5 37.4ZM4 37.4L4.5 37.4L5.2 37.4L4.7 34.5L3.9 34.6L3.5 34.7ZM12.7 37.4L15.7 37.4L19.1 37.4L18.8 33.8L15.3 33.9L12.3 34ZM54.8 37.4L56.7 37.4L58.2 37.4L58.7 34.4L57.2 34.3L55.3 34.2ZM3.9 34.6L4.7 34.5L5.9 34.4L5.7 31.3L4.5 31.5L3.7 31.8ZM9.7 34.1L12.3 34L15.3 33.9L15.2 30.4L12.1 30.6L9.5 30.8ZM30.8 33.7L35.1 33.7L39.2 33.8L39.3 30L35.1 30L30.8 30ZM35.1 30L39.3 30L43.3 30.1L43.3 26.5L39.3 26.3L35.1 26.2ZM43.3 30.1L47 30.3L50.3 30.5L50.3 27L47 26.7L43.3 26.5ZM47 26.7L50.3 27L53.2 27.3L52.9 24L50.1 23.6L46.8 23.2ZM18.8 23.1L22.6 22.8L26.6 22.7L26.8 19.2L22.8 19.4L19.1 19.7ZM35.1 22.6L39.2 22.7L43.2 22.9L42.9 19.6L39.1 19.3L35 19.2ZM22.8 19.4L26.8 19.2L30.9 19.1L30.9 15.9L27 16L23.1 16.3ZM46.5 19.9L49.7 20.3L52.5 20.8L51.8 17.8L49.1 17.3L46 16.8ZM6 20.2L7.2 19.5L8.8 18.8L9.8 16.1L8.2 16.9L7 17.6ZM49.1 17.3L51.8 17.8L54.1 18.5L53.2 15.8L51 15.1L48.4 14.5ZM54.1 18.5L56 19.1L57.4 19.8L56.4 17.2L55 16.5L53.2 15.8ZM57.4 19.8L58.4 20.5L59 21.1L58.1 18.7L57.4 18L56.4 17.2ZM6.2 18.4L7 17.6L8.2 16.9L9.3 14.5L8.2 15.3L7.3 16.1ZM51 15.1L53.2 15.8L55 16.5L53.9 14.1L52.1 13.3L50 12.6ZM8.2 15.3L9.3 14.5L10.9 13.7L12.1 11.5L10.7 12.3L9.5 13.2ZM18.7 9.5L21.5 9L24.5 8.6L25.1 6.7L22.3 7.1L19.7 7.6ZM40.2 6.9L42.9 7.3L45.4 7.8L44.2 6.3L41.9 5.7L39.4 5.3ZM49.5 9.2L51.1 10L52.4 10.8L50.8 9.2L49.6 8.4L48.1 7.6ZM13.7 8.8L15.1 8L16.7 7.3L18.2 6L16.6 6.7L15.4 7.4ZM16.7 7.3L18.6 6.6L20.8 6L21.9 4.8L19.9 5.3L18.2 6ZM25.7 5.2L28.5 4.9L31.2 4.8L31.3 3.7L28.8 3.8L26.4 4ZM24.1 4.3L26.4 4L28.8 3.8L29.2 2.9L27 3.1L25 3.5ZM23 3.9L25 3.5L27 3.1L27.7 2.6L25.9 2.9L24.2 3.2Z"/><path id="agl" d="M18.8 56.5L20.6 57.2L23.2 57.8L21.7 56.8L18.8 56.1L16.8 55.3ZM18.8 56.1L20.2 56.4L21.7 56.8L20.3 55.4L18.6 55L17.1 54.7ZM21.7 56.8L23.4 57L25.3 57.3L24.3 55.9L22.2 55.7L20.3 55.4ZM15.8 54.3L17.1 54.7L18.6 55L17 53.3L15.4 53L14.1 52.6ZM44.5 55.2L46.1 54.9L47.5 54.5L49.2 52.8L47.8 53.2L46 53.5ZM18.9 53.7L21 54L23.4 54.2L22.5 52.2L19.9 51.9L17.6 51.7ZM19.9 51.9L22.5 52.2L25.2 52.4L24.6 50L21.6 49.8L18.8 49.6ZM8.3 47.3L8.8 47.6L9.7 48L8.2 45.6L7.4 45.3L6.9 45ZM9.7 48L10.8 48.4L12.3 48.7L11 46.2L9.4 45.9L8.2 45.6ZM12.3 48.7L14.1 49L16.3 49.3L15.2 46.7L12.9 46.4L11 46.2ZM50.7 48.9L52.4 48.5L53.8 48.2L55.2 45.8L53.8 46L52 46.3ZM53.8 48.2L54.7 47.8L55.4 47.5L56.8 45.2L56.2 45.5L55.2 45.8ZM12.9 46.4L15.2 46.7L17.8 46.9L17 44L14.2 43.8L11.8 43.6ZM38.1 47.3L41.5 47.2L44.6 47L45.3 44L42 44.2L38.5 44.2ZM5.8 42.6L6.2 42.8L7 43L6 40.3L5.2 40.2L4.8 40.1ZM20.1 44.1L23.6 44.2L27.2 44.3L27 40.9L23.1 40.9L19.5 40.9ZM27.2 44.3L31 44.3L34.8 44.3L34.9 41L30.9 41L27 40.9ZM48.3 43.9L50.9 43.7L53.2 43.5L54.1 40.6L51.8 40.7L49.1 40.7ZM16.3 40.8L19.5 40.9L23.1 40.9L22.8 37.4L19.1 37.4L15.7 37.4ZM46 40.8L49.1 40.7L51.8 40.7L52.5 37.4L49.7 37.4L46.5 37.4ZM58.4 40.2L59 40.1L59.3 40L60 37.4L59.8 37.4L59.2 37.4ZM35 37.4L39.1 37.4L42.9 37.4L43.2 33.8L39.2 33.8L35.1 33.7ZM3.7 28.9L4.5 28.6L5.7 28.2L5.9 25.2L4.7 25.7L4 26.2ZM22.5 26.4L26.6 26.3L30.8 26.2L30.8 22.6L26.6 22.7L22.6 22.8ZM6.5 22.3L8.1 21.7L10.2 21.1L10.9 18.2L8.8 18.8L7.2 19.5ZM22.8 19.4L26.8 19.2L30.9 19.1L30.9 15.9L27 16L23.1 16.3ZM56.7 21.9L58.1 22.5L59.2 23.1L58.4 20.5L57.4 19.8L56 19.1ZM11.8 15.4L14.2 14.8L17 14.2L17.8 11.7L15.1 12.3L12.8 13ZM45.4 13.9L48.4 14.5L51 15.1L50 12.6L47.5 12L44.6 11.4ZM14 10.8L16.2 10.1L18.7 9.5L19.7 7.6L17.4 8.2L15.3 8.9ZM34.2 6.4L37.3 6.5L40.2 6.9L39.4 5.3L36.8 5L34 4.9ZM20.8 6L23.2 5.5L25.7 5.2L26.4 4L24.1 4.3L21.9 4.8ZM31.2 4.8L34 4.9L36.8 5L36.3 3.9L33.8 3.7L31.3 3.7ZM16.6 6.7L18.2 6L19.9 5.3L21.2 4.4L19.7 5L18.3 5.6ZM38.7 4.1L40.9 4.5L43 5L41.8 4.1L39.9 3.6L37.9 3.3ZM25.9 2.9L29.5 2.4L33.4 2.4L33.2 2.1L29.9 2.2L26.7 2.6Z"/><path id="agm" d="M23.2 57.8L26.2 58.3L29.7 58.5L29.3 57.5L25.3 57.3L21.7 56.8ZM25.3 57.3L27.2 57.4L29.3 57.5L28.9 56.2L26.6 56.1L24.3 55.9ZM29.3 57.5L31.4 57.6L33.5 57.6L33.8 56.3L31.3 56.3L28.9 56.2ZM14.1 53.4L14.8 53.8L15.8 54.3L14.1 52.6L13 52.1L12.2 51.7ZM15.4 53L17 53.3L18.9 53.7L17.6 51.7L15.5 51.3L13.8 51ZM34 54.6L36.7 54.5L39.3 54.3L40.1 52.3L37.2 52.4L34.2 52.5ZM12.4 50.6L13.8 51L15.5 51.3L14.1 49L12.3 48.7L10.8 48.4ZM31.2 52.5L34.2 52.5L37.2 52.4L37.7 50L34.4 50.1L31.1 50.1ZM37.2 52.4L40.1 52.3L42.7 52.1L43.7 49.7L40.8 49.9L37.7 50ZM8.3 47.3L8.8 47.6L9.7 48L8.2 45.6L7.4 45.3L6.9 45ZM9.7 48L10.8 48.4L12.3 48.7L11 46.2L9.4 45.9L8.2 45.6ZM24 47.2L27.5 47.3L31 47.4L31 44.3L27.2 44.3L23.6 44.2ZM7 43L8.2 43.2L9.8 43.4L8.8 40.5L7.2 40.4L6 40.3ZM27.2 44.3L31 44.3L34.8 44.3L34.9 41L30.9 41L27 40.9ZM56.4 43.1L57.4 42.9L58 42.7L59 40.1L58.4 40.2L57.4 40.3ZM23.1 40.9L27 40.9L30.9 41L30.9 37.4L26.8 37.4L22.8 37.4ZM38.8 40.9L42.5 40.9L46 40.8L46.5 37.4L42.9 37.4L39.1 37.4ZM12.7 37.4L15.7 37.4L19.1 37.4L18.8 33.8L15.3 33.9L12.3 34ZM35 37.4L39.1 37.4L42.9 37.4L43.2 33.8L39.2 33.8L35.1 33.7ZM3.9 34.6L4.7 34.5L5.9 34.4L5.7 31.3L4.5 31.5L3.7 31.8ZM15.3 33.9L18.8 33.8L22.6 33.8L22.5 30.1L18.6 30.2L15.2 30.4ZM46.8 33.9L50.1 34L52.9 34.1L53.2 30.7L50.3 30.5L47 30.3ZM7.3 31L9.5 30.8L12.1 30.6L12.1 27.1L9.5 27.5L7.3 27.8ZM18.6 30.2L22.5 30.1L26.6 30L26.6 26.3L22.5 26.4L18.6 26.6ZM39.3 26.3L43.3 26.5L47 26.7L46.8 23.2L43.2 22.9L39.2 22.7ZM3.6 26.6L4 26.2L4.7 25.7L5.3 22.8L4.5 23.4L4 24ZM34.9 16L38.8 16.1L42.5 16.4L42.1 13.5L38.5 13.2L34.8 13ZM54.1 18.5L56 19.1L57.4 19.8L56.4 17.2L55 16.5L53.2 15.8ZM8.2 15.3L9.3 14.5L10.9 13.7L12.1 11.5L10.7 12.3L9.5 13.2ZM10.9 13.7L12.8 13L15.1 12.3L16.2 10.1L14 10.8L12.1 11.5ZM41.5 11L44.6 11.4L47.5 12L46.5 9.7L43.8 9.2L40.9 8.7ZM25.7 5.2L28.5 4.9L31.2 4.8L31.3 3.7L28.8 3.8L26.4 4ZM41.9 5.7L44.2 6.3L46.3 6.9L44.9 5.6L43 5L40.9 4.5ZM19.9 5.3L21.9 4.8L24.1 4.3L25 3.5L23 3.9L21.2 4.4ZM24.1 4.3L26.4 4L28.8 3.8L29.2 2.9L27 3.1L25 3.5Z"/><filter id="nA" x="0" y="0" width="100%" height="100%"><feTurbulence type="fractalNoise" baseFrequency="0.11" numOctaves="2" seed="5"/><feColorMatrix values="0 0 0 0 0.22  0 0 0 0 0.2  0 0 0 0 0.2  2.2 0 0 0 -0.95"/></filter><filter id="nB" x="0" y="0" width="100%" height="100%"><feTurbulence type="fractalNoise" baseFrequency="0.16" numOctaves="2" seed="11"/><feColorMatrix values="0 0 0 0 0.8  0 0 0 0 0.55  0 0 0 0 0.25  1.5 0 0 0 -0.75"/></filter><filter id="nC" x="0" y="0" width="100%" height="100%"><feTurbulence type="fractalNoise" baseFrequency="0.6" numOctaves="2" seed="2"/><feColorMatrix values="0 0 0 0 0  0 0 0 0 0  0 0 0 0 0  0.3 0 0 0 -0.1"/></filter><filter id="nD" x="0" y="0" width="100%" height="100%"><feTurbulence type="fractalNoise" baseFrequency="0.5" numOctaves="2" seed="9"/><feColorMatrix values="0 0 0 0 1  0 0 0 0 1  0 0 0 0 1  0.14 0 0 0 -0.04"/></filter><filter id="nE" x="0" y="0" width="100%" height="100%"><feTurbulence type="fractalNoise" baseFrequency="0.05" numOctaves="2" seed="4"/><feColorMatrix values="0 0 0 0 0.5  0 0 0 0 0.43  0 0 0 0 0.43  2.4 0 0 0 -1.0"/></filter><filter id="nF" x="0" y="0" width="100%" height="100%"><feTurbulence type="fractalNoise" baseFrequency="0.09" numOctaves="2" seed="21"/><feColorMatrix values="0 0 0 0 0.05  0 0 0 0 0.03  0 0 0 0 0.03  2.4 0 0 0 -1.0"/></filter><filter id="nG" x="0" y="0" width="100%" height="100%"><feTurbulence type="fractalNoise" baseFrequency="0.22" numOctaves="3" seed="8"/><feColorMatrix values="0 0 0 0 0.5  0 0 0 0 0.38  0 0 0 0 0.22  2.0 0 0 0 -0.8"/></filter><filter id="nH" x="0" y="0" width="100%" height="100%"><feTurbulence type="fractalNoise" baseFrequency="0.07" numOctaves="3" seed="13"/><feColorMatrix values="0 0 0 0 0.25  0 0 0 0 0.14  0 0 0 0 0.04  1.6 0 0 0 -0.6"/></filter><filter id="nI" x="0" y="0" width="100%" height="100%"><feTurbulence type="fractalNoise" baseFrequency="0.3" numOctaves="2" seed="6"/><feColorMatrix values="0 0 0 0 0.4  0 0 0 0 0.28  0 0 0 0 0.26  1.2 0 0 0 -0.66"/></filter></defs></svg>
<svg class="thumb" style="left:19px;top:66px" width="64" height="64" viewBox="0 0 64 64"><use href="#bg"/><circle cx="34.4" cy="33.1" r="28.8" fill="#000"/><g clip-path="url(#sc)"><rect width="64" height="64" fill="#b05c38"/><use href="#agl" fill="#cf7a45" opacity="0.8"/><use href="#agm" fill="#8f4a30" opacity="0.8"/><use href="#agd" fill="#54463f" opacity="0.8" filter="url(#b3)"/><use href="#rbm" fill="none" stroke="#dccbb2" stroke-width="0.75" stroke-opacity="0.9" filter="url(#b3)"/></g><circle cx="32.0" cy="30.9" r="29.1" fill="url(#sh1)"/></svg>
<div class="lbl" style="left:-9.09px;top:132px;letter-spacing:-0.183px;">Brick-Aged</div>
<svg class="thumb" style="left:107px;top:66px" width="64" height="64" viewBox="0 0 64 64"><use href="#bg"/><circle cx="34.4" cy="33.1" r="28.8" fill="#000"/><g clip-path="url(#sc)"><rect width="64" height="64" fill="#a85a28"/><use href="#agl" fill="#b8642a" opacity="0.5"/><use href="#rbm" fill="none" stroke="#d9a26e" stroke-width="0.7" stroke-opacity="0.7" filter="url(#b3)"/></g><circle cx="32.0" cy="30.9" r="29.1" fill="url(#sh3)"/></svg>
<div class="lbl" style="left:79.00px;top:132px;letter-spacing:0.001px;">Brick-Brown</div>
<svg class="thumb" style="left:195px;top:66px" width="64" height="64" viewBox="0 0 64 64"><use href="#bg"/><circle cx="34.4" cy="33.1" r="28.8" fill="#000"/><g clip-path="url(#sc)"><rect width="64" height="64" fill="#bd5862"/><use href="#rb" fill="none" stroke="#e6b4b0" stroke-width="0.8" stroke-opacity="0.85" filter="url(#b3)"/></g><circle cx="32.0" cy="30.9" r="29.1" fill="url(#sh1)"/></svg>
<div class="lbl" style="left:166.86px;top:132px;letter-spacing:-0.287px;">Brick-Commo...</div>
<svg class="thumb" style="left:283px;top:66px" width="64" height="64" viewBox="0 0 64 64"><use href="#bg"/><circle cx="34.4" cy="33.1" r="28.8" fill="#5a1c1c"/><g clip-path="url(#sc)"><rect width="64" height="64" fill="#d25458"/><use href="#fl" fill="none" stroke="#f0bea6" stroke-width="0.8" stroke-opacity="0.85" filter="url(#b3)"/></g><circle cx="32.0" cy="30.9" r="29.1" fill="url(#sh2)"/></svg>
<div class="lbl" style="left:254.89px;top:132px;letter-spacing:-0.215px;">Brick-Flemish ...</div>
<svg class="thumb" style="left:371px;top:66px" width="64" height="64" viewBox="0 0 64 64"><use href="#bg"/><circle cx="34.4" cy="33.1" r="28.8" fill="#000"/><g clip-path="url(#sc)"><rect width="64" height="64" fill="#ae545d"/><use href="#hb" fill="none" stroke="#d8a8a8" stroke-width="0.8" stroke-opacity="0.85" filter="url(#b3)"/></g><circle cx="32.0" cy="30.9" r="29.1" fill="url(#sh1)"/></svg>
<div class="lbl" style="left:342.96px;top:132px;letter-spacing:-0.079px;">Brick-Herring...</div>
<svg class="thumb" style="left:459px;top:66px" width="64" height="64" viewBox="0 0 64 64"><use href="#bg"/><circle cx="34.4" cy="33.1" r="28.8" fill="#000"/><g clip-path="url(#sc)"><rect width="64" height="64" fill="#b05b2b"/><rect width="64" height="64" filter="url(#nB)"/><use href="#rb" fill="none" stroke="#a48a52" stroke-width="0.75" stroke-opacity="0.85" filter="url(#b3)"/></g><circle cx="32.0" cy="30.9" r="29.1" fill="url(#sh1)"/></svg>
<div class="lbl" style="left:430.84px;top:132px;letter-spacing:-0.312px;">Brick-Red</div>
<svg class="thumb" style="left:19px;top:154px" width="64" height="64" viewBox="0 0 64 64"><use href="#bg"/><circle cx="34.4" cy="33.1" r="28.8" fill="#5a1c1c"/><g clip-path="url(#sc)"><rect width="64" height="64" fill="#d65d5b"/><use href="#rb" fill="none" stroke="#eeb092" stroke-width="0.75" stroke-opacity="0.75" filter="url(#b3)"/></g><circle cx="32.0" cy="30.9" r="29.1" fill="url(#sh2)"/></svg>
<div class="lbl" style="left:-9.05px;top:220px;letter-spacing:-0.101px;">Brick-Runnin...</div>
<svg class="thumb" style="left:107px;top:154px" width="64" height="64" viewBox="0 0 64 64"><use href="#bg"/><circle cx="34.4" cy="33.1" r="28.8" fill="#5a1c1c"/><g clip-path="url(#sc)"><rect width="64" height="64" fill="#d65d5b"/><use href="#som" fill="none" stroke="#f2b495" stroke-width="0.8" stroke-opacity="0.62"/><use href="#so" fill="none" stroke="#eeb092" stroke-width="0.8" stroke-opacity="1" filter="url(#b3)"/></g><circle cx="32.0" cy="30.9" r="29.1" fill="url(#sh2)"/></svg>
<div class="lbl" style="left:78.93px;top:220px;letter-spacing:-0.136px;">Brick-Soldier ...</div>
<svg class="thumb" style="left:195px;top:154px" width="64" height="64" viewBox="0 0 64 64"><use href="#bg"/><circle cx="34.4" cy="33.1" r="28.8" fill="#5a1c1c"/><g clip-path="url(#sc)"><rect width="64" height="64" fill="#cf5553"/><use href="#sb" fill="none" stroke="#f08a7c" stroke-width="0.75" stroke-opacity="0.8"/><use href="#sbm" fill="none" stroke="#f3b090" stroke-width="1.3" stroke-opacity="0.8" filter="url(#b6)"/></g><circle cx="32.0" cy="30.9" r="29.1" fill="url(#sh2)"/></svg>
<div class="lbl" style="left:166.85px;top:220px;letter-spacing:-0.307px;">Brick-Stack B...</div>
<svg class="thumb" style="left:283px;top:154px" width="64" height="64" viewBox="0 0 64 64"><use href="#bg"/><circle cx="34.4" cy="33.1" r="28.8" fill="#5a1c1c"/><g clip-path="url(#sc)"><rect width="64" height="64" fill="#d4585a"/></g><circle cx="32.0" cy="30.9" r="29.1" fill="url(#sh2)"/></svg>
<div class="lbl" style="left:254.87px;top:220px;letter-spacing:-0.269px;">Brick-Surface ...</div>
<svg class="thumb" style="left:371px;top:154px" width="64" height="64" viewBox="0 0 64 64"><use href="#bg"/><circle cx="34.4" cy="33.1" r="28.8" fill="#000"/><g clip-path="url(#sc)"><rect width="64" height="64" fill="#e6e4e2"/><use href="#rb" fill="none" stroke="#a5a3a1" stroke-width="0.6" stroke-opacity="0.75" filter="url(#b3)"/></g><circle cx="32.0" cy="30.9" r="29.1" fill="url(#sh3)"/></svg>
<div class="lbl" style="left:343.00px;top:220px;letter-spacing:0.002px;">Brick-White</div>
<div class="thumb" style="left:459px;top:154px;background:#000"></div>
<div class="lbl" style="left:430.92px;top:220px;letter-spacing:-0.167px;">Ceiling-Tile 3...</div>
<div class="thumb" style="left:19px;top:242px;background:#000"></div>
<div class="lbl" style="left:-9.10px;top:308px;letter-spacing:-0.205px;">Ceiling-Tile 6...</div>
<svg class="thumb" style="left:107px;top:242px" width="64" height="64" viewBox="0 0 64 64"><use href="#bg"/><circle cx="34.4" cy="33.1" r="28.8" fill="#000"/><g clip-path="url(#sc)"><rect width="64" height="64" fill="#626263"/><rect width="64" height="64" filter="url(#nD)"/></g></svg>
<div class="lbl" style="left:78.92px;top:308px;letter-spacing:-0.156px;">Floor-Carpet ...</div>
<svg class="thumb" style="left:195px;top:242px" width="64" height="64" viewBox="0 0 64 64"><use href="#bg"/><circle cx="34.4" cy="33.1" r="28.8" fill="#000"/><g clip-path="url(#sc)"><rect width="64" height="64" fill="#626263"/><rect width="64" height="64" filter="url(#nD)"/></g></svg>
<div class="lbl" style="left:166.92px;top:308px;letter-spacing:-0.156px;">Floor-Carpet ...</div>
<svg class="thumb" style="left:283px;top:242px" width="64" height="64" viewBox="0 0 64 64"><use href="#bg"/><circle cx="34.4" cy="33.1" r="28.8" fill="#000"/><g clip-path="url(#sc)"><rect width="64" height="64" fill="#626263"/><rect width="64" height="64" filter="url(#nD)"/></g></svg>
<div class="lbl" style="left:254.92px;top:308px;letter-spacing:-0.156px;">Floor-Carpet ...</div>
<svg class="thumb" style="left:371px;top:242px" width="64" height="64" viewBox="0 0 64 64"><use href="#bg"/><circle cx="34.4" cy="33.1" r="28.8" fill="#000"/><g clip-path="url(#sc)"><rect width="64" height="64" fill="#d8c47f"/><use href="#dk" fill="none" stroke="#a08245" stroke-width="0.85" stroke-opacity="0.9" filter="url(#b3)"/></g><circle cx="32.0" cy="30.9" r="29.1" fill="url(#sh3)"/><ellipse cx="29" cy="25.5" rx="11" ry="10" fill="url(#hly)"/></svg>
<div class="lbl" style="left:342.87px;top:308px;letter-spacing:-0.263px;">Floor-Deck Pi...</div>
<svg class="thumb" style="left:459px;top:242px" width="64" height="64" viewBox="0 0 64 64"><use href="#bg"/><circle cx="34.4" cy="33.1" r="28.8" fill="#000"/><g clip-path="url(#sc)"><rect width="64" height="64" fill="#70491c"/><rect width="64" height="64" filter="url(#nH)"/><use href="#dkw" fill="none" stroke="#3e2609" stroke-width="0.9" stroke-opacity="0.75" filter="url(#b3)"/><ellipse cx="31" cy="25" rx="15" ry="12" fill="url(#hlw)"/></g><circle cx="32.0" cy="30.9" r="29.1" fill="url(#sh3)"/></svg>
<div class="lbl" style="left:430.94px;top:308px;letter-spacing:-0.125px;">Floor-Deck W...</div>
<svg class="thumb" style="left:19px;top:374px" width="64" height="64" viewBox="0 0 64 64"><use href="#bg"/><circle cx="34.4" cy="33.1" r="28.8" fill="#000"/><g clip-path="url(#sc)"><rect width="64" height="64" fill="#e6e4e2"/><use href="#rb" fill="none" stroke="#a5a3a1" stroke-width="0.6" stroke-opacity="0.75" filter="url(#b3)"/></g><circle cx="32.0" cy="30.9" r="29.1" fill="url(#sh3)"/></svg>
<div class="lbl" style="left:-9.00px;top:440px;letter-spacing:0.002px;">Brick-White</div>
<svg class="thumb" style="left:107px;top:374px" width="64" height="64" viewBox="0 0 64 64"><use href="#bg"/><circle cx="34.4" cy="33.1" r="28.8" fill="#000"/><g clip-path="url(#sc)"><rect width="64" height="64" fill="#eae0c8"/><rect width="64" height="64" filter="url(#nG)"/><use href="#lg" fill="none" stroke="#4e3f2a" stroke-width="0.9" stroke-opacity="0.68" filter="url(#b3)"/></g><circle cx="32.0" cy="30.9" r="29.1" fill="url(#sh1)"/></svg>
<div class="lbl" style="left:78.90px;top:440px;letter-spacing:-0.2px;">Stn-Ledgesto...</div>
<svg class="thumb" style="left:195px;top:374px" width="64" height="64" viewBox="0 0 64 64"><use href="#bg"/><circle cx="34.4" cy="33.1" r="28.8" fill="#000"/><g clip-path="url(#sc)"><rect width="64" height="64" fill="#8e887d"/></g><circle cx="32.0" cy="30.9" r="29.1" fill="url(#sh1)"/></svg>
<div class="lbl" style="left:166.89px;top:440px;letter-spacing:-0.213px;">Stn-Limestone</div>
<svg class="thumb" style="left:283px;top:374px" width="64" height="64" viewBox="0 0 64 64"><use href="#bg"/><circle cx="34.4" cy="33.1" r="28.8" fill="#000"/><g clip-path="url(#sc)"><rect width="64" height="64" fill="#3f3331"/><g filter="url(#b18)"><ellipse cx="31" cy="25" rx="13" ry="8" fill="#7d6a67" opacity="0.75"/><ellipse cx="22" cy="41" rx="11" ry="6" fill="#6c5a58" opacity="0.6"/><ellipse cx="44" cy="34" rx="6" ry="9" fill="#6f5d5e" opacity="0.6"/><ellipse cx="25" cy="16.5" rx="5.5" ry="4.5" fill="#231a1b" opacity="0.85"/><ellipse cx="17" cy="33" rx="4" ry="3" fill="#231a1b" opacity="0.8"/><ellipse cx="37" cy="41" rx="6" ry="4" fill="#231a1b" opacity="0.8"/></g><g fill="none" stroke="#a08e8c" stroke-width="1.4" stroke-opacity="0.65" filter="url(#b8)"><path d="M11 17Q15 11 22 11.5"/><path d="M40 9Q43 19 37 25Q32 31 23 29.5Q18 28 15 23"/><path d="M36 27Q43 32 41 38L45 46"/><path d="M29 44Q37 49 46 45"/><path d="M24 10Q30 7 33 12"/></g></g><circle cx="32.0" cy="30.9" r="29.1" fill="url(#sh1)"/></svg>
<div class="lbl" style="left:254.96px;top:440px;letter-spacing:-0.084px;">Stn-Marble Bl...</div>
<svg class="thumb" style="left:371px;top:374px" width="64" height="64" viewBox="0 0 64 64"><use href="#bg"/><circle cx="34.4" cy="33.1" r="28.8" fill="#000"/><g clip-path="url(#sc)"><rect width="64" height="64" fill="#b2b1b0"/><rect width="64" height="64" filter="url(#nI)"/><path d="M0 64V21.5Q32 33.5 64 24V64Z" fill="#000" opacity="0.15"/><path d="M2 22.3Q32 33.3 62 24.6" fill="none" stroke="#6e6a67" stroke-width="0.9" stroke-opacity="0.85" filter="url(#b3)"/><path d="M32 28V58" stroke="#555" stroke-width="0.7" stroke-opacity="0.35" filter="url(#b3)"/></g><circle cx="32.0" cy="30.9" r="29.1" fill="url(#sh3)"/></svg>
<div class="lbl" style="left:342.93px;top:440px;letter-spacing:-0.143px;">Surf-Poured ...</div>
<svg class="thumb" style="left:459px;top:374px" width="64" height="64" viewBox="0 0 64 64"><use href="#bg"/><circle cx="34.4" cy="33.1" r="28.8" fill="#000"/><g clip-path="url(#sc)"><rect width="64" height="64" fill="#d8ae66"/></g><circle cx="32.0" cy="30.9" r="29.1" fill="url(#sh3)"/><ellipse cx="27" cy="23" rx="12" ry="11" fill="url(#hlp)"/></svg>
<div class="lbl" style="left:430.94px;top:440px;letter-spacing:-0.127px;">Wd-Pine Verti...</div>
<div class="abs" style="left:19px;top:462px;width:64px;height:8px;overflow:hidden"><svg class="thumb" style="left:0px;top:0px" width="64" height="64" viewBox="0 0 64 64"><use href="#bg"/><circle cx="34.4" cy="33.1" r="28.8" fill="#000"/><g clip-path="url(#sc)"><rect width="64" height="64" fill="#4e4a3c"/></g><circle cx="32.0" cy="30.9" r="29.1" fill="url(#sh1)"/></svg></div>
</body></html>
